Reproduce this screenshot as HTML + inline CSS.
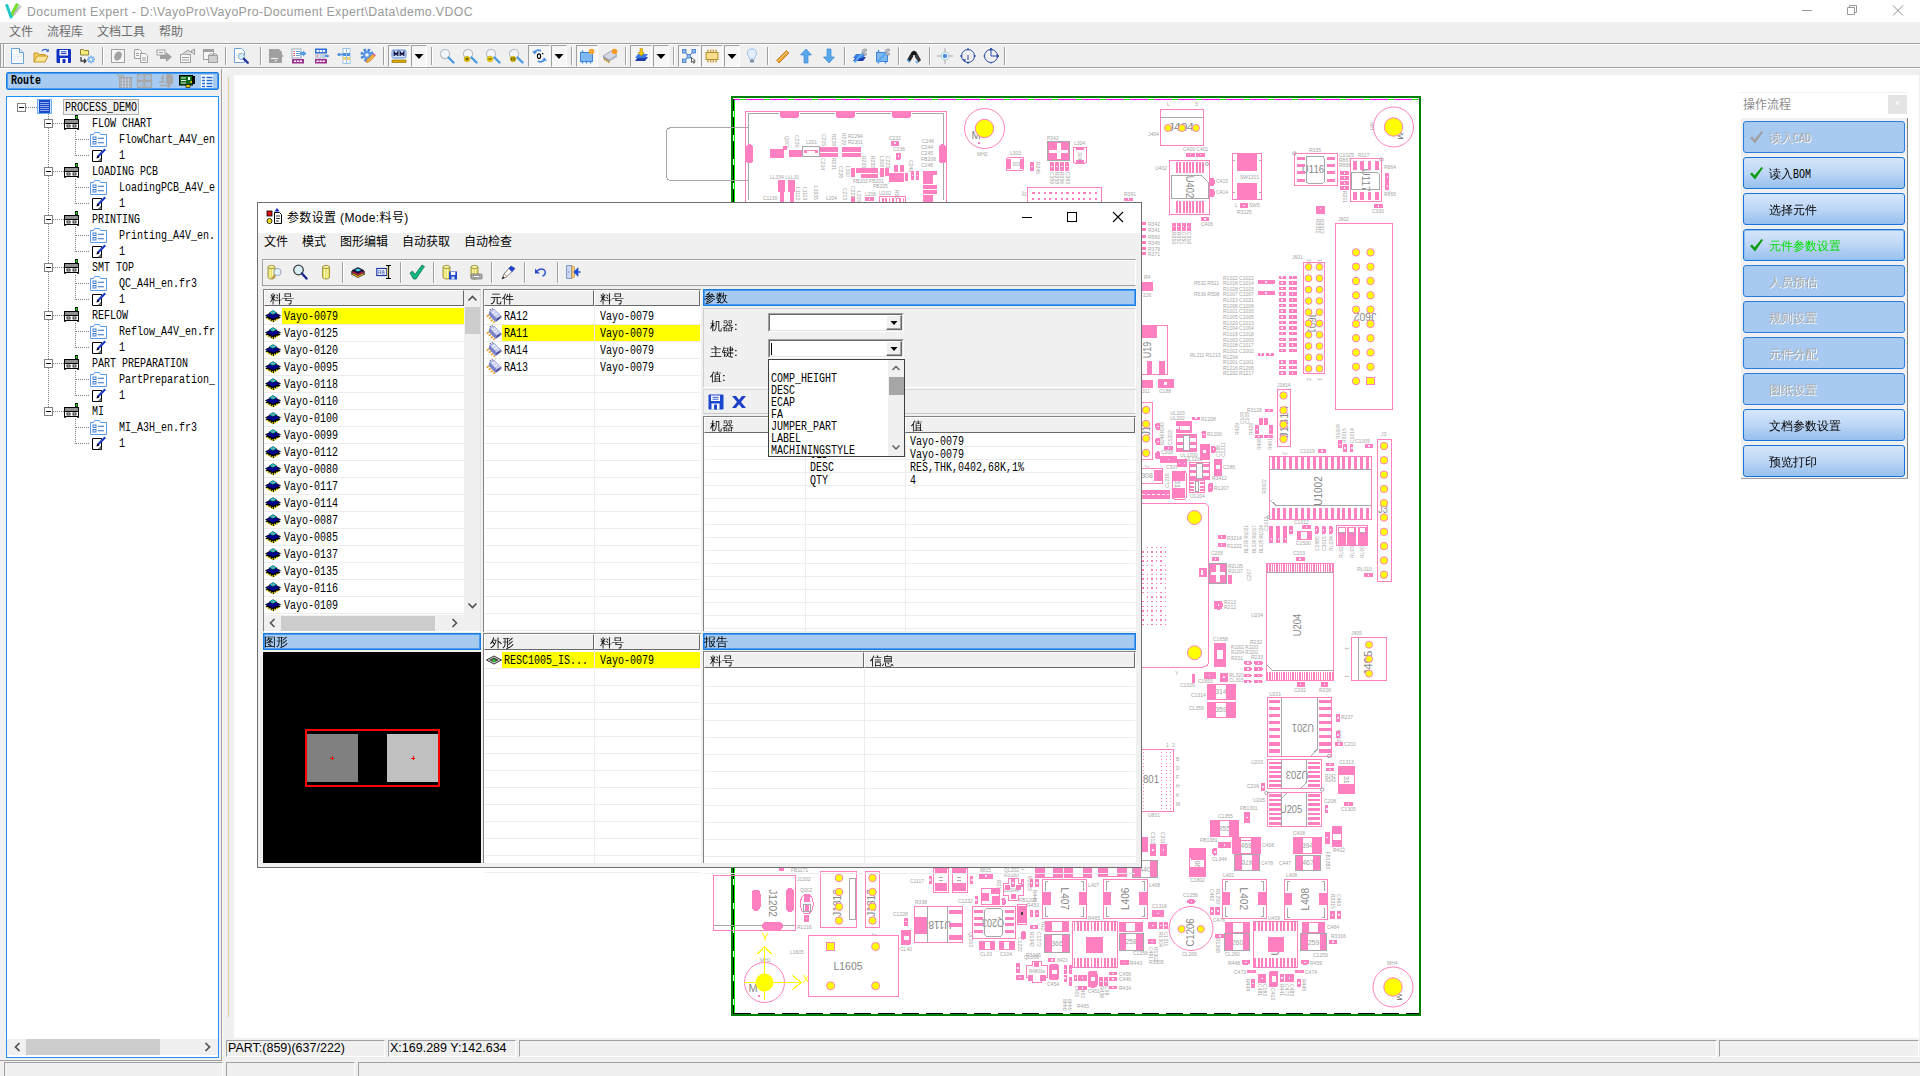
<!DOCTYPE html><html><head><meta charset="utf-8"><title>Document Expert</title><style>
*{margin:0;padding:0;box-sizing:border-box}
html,body{width:1920px;height:1076px;overflow:hidden;background:#fff}
body{position:relative;font-family:"Liberation Sans","Noto Sans CJK SC",sans-serif;font-size:12px;color:#000}
div,span,svg{position:absolute}
span{white-space:pre;display:block}
.ss{font-family:"Liberation Mono","WenQuanYi Zen Hei",monospace;font-size:12px;letter-spacing:0;line-height:14px;height:14px;transform:scaleX(.8333);transform-origin:0 0}
.cj{font-family:"WenQuanYi Zen Hei","Liberation Sans",sans-serif;font-size:12px;line-height:14px;height:14px;letter-spacing:0}
.ya{font-family:"Liberation Sans","Noto Sans CJK SC",sans-serif;font-size:12px;line-height:16px;height:16px}
.sg{font-family:"Liberation Sans",sans-serif;font-size:12px;line-height:16px;height:16px}
.hdr{background:#f0f0f0;border:1px solid;border-color:#fff #696969 #696969 #fff;box-shadow:0 0 0 0 #000}
.blue{background:#a6caf0;border:1px solid #1a7be0;box-shadow:inset 0 0 0 1px #4a9cf0}
.sunk{border:1px solid;border-color:#a0a0a0 #fff #fff #a0a0a0;background:#f0f0f0}
.btn{border:1px solid #1874d8;border-radius:3px;background:linear-gradient(#d6e6fa 0%,#c0d8f6 45%,#98c0ef 100%)}
.btnd{border:1px solid #2a7cdc;border-radius:3px;background:#a8caf0}
</style></head><body>
<div style="left:0px;top:0px;width:1920px;height:22px;background:#fff"></div>
<svg style="left:4px;top:2px" width="18" height="18" viewBox="0 0 18 18"><path d="M1 2.500L4 2l3 9 5-9.500 3 .5-7 14.500H6z" fill="#1ec8c8"/><path d="M7 11l5-9.500 3 .5-6.500 13z" fill="#7ee020"/><path d="M9 12L16 3.500l1 1L10.500 13z" fill="#c8c8c8" stroke="#909090" stroke-width=".5"/></svg>
<span class="sg" style="left:27px;top:4px;color:#999;font-size:12.300px;letter-spacing:.4px">Document Expert - D:\VayoPro\VayoPro-Document Expert\Data\demo.VDOC</span>
<svg style="left:1780px;top:0" width="140" height="22" viewBox="0 0 140 22"><path d="M22 10.500h10" stroke="#999" stroke-width="1"/><path d="M67.500 7.500h7v7h-7zM69.500 7.500v-2h7v7h-2" fill="none" stroke="#999" stroke-width="1"/><path d="M113 5.500l10 10M123 5.500l-10 10" stroke="#8a8a8a" stroke-width="1"/></svg>
<div style="left:0px;top:22px;width:1920px;height:21px;background:#f0f0f0"></div>
<span class="ya" style="left:9px;top:24px;color:#6d6d6d">文件</span>
<span class="ya" style="left:47px;top:24px;color:#6d6d6d">流程库</span>
<span class="ya" style="left:97px;top:24px;color:#6d6d6d">文档工具</span>
<span class="ya" style="left:159px;top:24px;color:#6d6d6d">帮助</span>
<div style="left:0px;top:43px;width:1920px;height:32px;background:#f0f0f0"></div>
<div style="left:0px;top:43px;width:1920px;height:1px;background:#a0a0a0"></div>
<div style="left:0px;top:44px;width:1920px;height:1px;background:#fff"></div>
<div style="left:0px;top:67px;width:1920px;height:1px;background:#a0a0a0"></div>
<div style="left:0px;top:68px;width:1920px;height:1px;background:#fff"></div>
<div style="left:3px;top:44px;width:1px;height:23px;background:#a0a0a0"></div>
<div style="left:4px;top:44px;width:1px;height:23px;background:#fff"></div>
<div style="left:0px;top:44px;width:1px;height:23px;background:#a0a0a0"></div>
<div style="left:102px;top:47px;width:1px;height:18px;background:#a0a0a0"></div>
<div style="left:103px;top:47px;width:1px;height:18px;background:#fff"></div>
<div style="left:225px;top:47px;width:1px;height:18px;background:#a0a0a0"></div>
<div style="left:226px;top:47px;width:1px;height:18px;background:#fff"></div>
<div style="left:260px;top:47px;width:1px;height:18px;background:#a0a0a0"></div>
<div style="left:261px;top:47px;width:1px;height:18px;background:#fff"></div>
<div style="left:383px;top:47px;width:1px;height:18px;background:#a0a0a0"></div>
<div style="left:384px;top:47px;width:1px;height:18px;background:#fff"></div>
<div style="left:431px;top:47px;width:1px;height:18px;background:#a0a0a0"></div>
<div style="left:432px;top:47px;width:1px;height:18px;background:#fff"></div>
<div style="left:571px;top:47px;width:1px;height:18px;background:#a0a0a0"></div>
<div style="left:572px;top:47px;width:1px;height:18px;background:#fff"></div>
<div style="left:625px;top:47px;width:1px;height:18px;background:#a0a0a0"></div>
<div style="left:626px;top:47px;width:1px;height:18px;background:#fff"></div>
<div style="left:673px;top:47px;width:1px;height:18px;background:#a0a0a0"></div>
<div style="left:674px;top:47px;width:1px;height:18px;background:#fff"></div>
<div style="left:767px;top:47px;width:1px;height:18px;background:#a0a0a0"></div>
<div style="left:768px;top:47px;width:1px;height:18px;background:#fff"></div>
<div style="left:844px;top:47px;width:1px;height:18px;background:#a0a0a0"></div>
<div style="left:845px;top:47px;width:1px;height:18px;background:#fff"></div>
<div style="left:898px;top:47px;width:1px;height:18px;background:#a0a0a0"></div>
<div style="left:899px;top:47px;width:1px;height:18px;background:#fff"></div>
<div style="left:929px;top:47px;width:1px;height:18px;background:#a0a0a0"></div>
<div style="left:930px;top:47px;width:1px;height:18px;background:#fff"></div>
<div style="left:1004px;top:47px;width:1px;height:18px;background:#a0a0a0"></div>
<div style="left:1005px;top:47px;width:1px;height:18px;background:#fff"></div>
<div style="left:388px;top:45px;width:22px;height:22px;background:#f6f6f6;border:1px solid;border-color:#a0a0a0 #fff #fff #a0a0a0"></div>
<div style="left:411px;top:45px;width:16px;height:22px;background:#f6f6f6;border:1px solid;border-color:#a0a0a0 #fff #fff #a0a0a0"></div>
<div style="left:528px;top:45px;width:22px;height:22px;background:#f6f6f6;border:1px solid;border-color:#a0a0a0 #fff #fff #a0a0a0"></div>
<div style="left:551px;top:45px;width:16px;height:22px;background:#f6f6f6;border:1px solid;border-color:#a0a0a0 #fff #fff #a0a0a0"></div>
<div style="left:576px;top:45px;width:22px;height:22px;background:#f6f6f6;border:1px solid;border-color:#a0a0a0 #fff #fff #a0a0a0"></div>
<div style="left:630px;top:45px;width:22px;height:22px;background:#f6f6f6;border:1px solid;border-color:#a0a0a0 #fff #fff #a0a0a0"></div>
<div style="left:653px;top:45px;width:16px;height:22px;background:#f6f6f6;border:1px solid;border-color:#a0a0a0 #fff #fff #a0a0a0"></div>
<div style="left:678px;top:45px;width:22px;height:22px;background:#f6f6f6;border:1px solid;border-color:#a0a0a0 #fff #fff #a0a0a0"></div>
<div style="left:701px;top:45px;width:22px;height:22px;background:#f6f6f6;border:1px solid;border-color:#a0a0a0 #fff #fff #a0a0a0"></div>
<div style="left:724px;top:45px;width:16px;height:22px;background:#f6f6f6;border:1px solid;border-color:#a0a0a0 #fff #fff #a0a0a0"></div>
<svg style="left:10px;top:48px" width="16" height="16" viewBox="0 0 16 16"><path d="M1.5 .5h8l4 4v11h-12z" fill="#fff" stroke="#6aa2dc"/><path d="M9.5 .5v4h4" fill="#dbe9f8" stroke="#6aa2dc"/><path d="M3 6.5h9M3 8.5h9M3 10.5h9M3 12.5h9" stroke="#e3ebf4"/></svg>
<svg style="left:33px;top:48px" width="16" height="16" viewBox="0 0 16 16"><path d="M1 14V5h4l1 1.5h6V9" fill="#f5d26a" stroke="#c8951e"/><path d="M1 14l3-6h11l-3 6z" fill="#fbe59a" stroke="#c8951e"/><path d="M9 3c2-2.5 5-2 6 0" fill="none" stroke="#2c62c8" stroke-width="1.3"/><path d="M15.8 .8v3h-3z" fill="#2c62c8"/></svg>
<svg style="left:56px;top:48px" width="16" height="16" viewBox="0 0 16 16"><rect x=".5" y="1" width="14.5" height="14" rx="1" fill="#0f32c4"/><rect x="3.5" y="2" width="8.5" height="5.5" fill="#fff"/><path d="M5 3.8h5.5M5 5.6h5.5" stroke="#0f32c4"/><rect x="4" y="10" width="8" height="5" fill="#fff"/><rect x="6.5" y="11" width="3" height="4" fill="#0f32c4"/></svg>
<svg style="left:79px;top:48px" width="16" height="16" viewBox="0 0 16 16"><path d="M1.5 7V1.5h3l1 1h4V7z" fill="#f6ec74" stroke="#8c8440"/><path d="M2 9v4h5M5 11l2 2-2 2" fill="none" stroke="#404040" stroke-width="1.3"/><g stroke="#5ea7f2" stroke-width="1.3" fill="none"><path d="M12 7.5v8M8 11.5h8M9.2 8.7l5.6 5.6M14.8 8.7l-5.6 5.6"/></g><circle cx="12" cy="11.5" r="1.5" fill="#f0f0f0"/></svg>
<svg style="left:110px;top:48px" width="16" height="16" viewBox="0 0 16 16"><rect x="1.5" y="1.5" width="13" height="13" fill="#f6f6f6" stroke="#a0a0a0"/><ellipse cx="8" cy="8" rx="3.5" ry="4.8" transform="rotate(30 8 8)" fill="#a0a0a0"/></svg>
<svg style="left:133px;top:48px" width="16" height="16" viewBox="0 0 16 16"><path d="M1.5 1.5h5l2 2v7h-7z" fill="#f6f6f6" stroke="#a0a0a0"/><path d="M7.5 5.5h5l2 2v7h-7z" fill="#f6f6f6" stroke="#a0a0a0"/><path d="M3 5.5h3M3 7.5h3M9 10h4M9 12h4" stroke="#a0a0a0"/></svg>
<svg style="left:156px;top:48px" width="16" height="16" viewBox="0 0 16 16"><rect x="1" y="2" width="8" height="5" fill="#f6f6f6" stroke="#a0a0a0"/><path d="M3 4.5h4" stroke="#a0a0a0"/><path d="M4 7h6V4l6 5-6 5v-3H4z" fill="#a0a0a0"/></svg>
<svg style="left:179px;top:48px" width="16" height="16" viewBox="0 0 16 16"><rect x="1.5" y="6.5" width="10" height="8" fill="#f6f6f6" stroke="#a0a0a0"/><path d="M3 9.5h7M3 12h7" stroke="#a0a0a0"/><path d="M2 7l7-5 4 3M12 3l3.5-2v6z" fill="#d8d8d8" stroke="#a0a0a0"/></svg>
<svg style="left:202px;top:48px" width="16" height="16" viewBox="0 0 16 16"><rect x="1.5" y="1.5" width="10" height="10" fill="#f6f6f6" stroke="#a0a0a0"/><rect x="1.5" y="1.5" width="10" height="2.5" fill="#a0a0a0"/><rect x="6.5" y="7.5" width="9" height="7" fill="#d0d0d0" stroke="#a0a0a0"/><path d="M7 7l2-1.5 2 1.5 2-1.5 2 1.5" fill="none" stroke="#a0a0a0"/></svg>
<svg style="left:233px;top:48px" width="16" height="16" viewBox="0 0 16 16"><path d="M1.5 .5h7l3 3v11h-10z" fill="#fff" stroke="#6aa2dc"/><path d="M3 5.5h6M3 7.5h4M3 9.5h3" stroke="#dbe6f2"/><circle cx="8.5" cy="8.5" r="3" fill="#d6f0fb" stroke="#8aa8c8"/><path d="M10.8 10.8l4 4" stroke="#1c2ea0" stroke-width="2.2" stroke-linecap="round"/></svg>
<svg style="left:268px;top:48px" width="16" height="16" viewBox="0 0 16 16"><path d="M1 1h10l3 3v3l2 1-2 1v6H1z" fill="#a0a0a0"/><path d="M3 10.5h7" stroke="#f0f0f0" stroke-width="1.2"/><rect x="7" y="12" width="1.5" height="1.5" fill="#f0f0f0"/></svg>
<svg style="left:291px;top:48px" width="16" height="16" viewBox="0 0 16 16"><rect x="1" y="1" width="9" height="9" fill="#fff" stroke="#9ab"/><path d="M2.5 3.5h1.5M2.5 5.5h1.5M2.5 7.5h1.5" stroke="#e04040"/><path d="M5 3.5h4M5 5.5h4M5 7.5h4" stroke="#6aa2dc"/><path d="M9 4h3V2.5l3.5 3-3.5 3V7H9z" fill="#5a9ae0"/><rect x="1" y="11" width="12" height="4.5" fill="#a03090"/><path d="M3 13.2h8" stroke="#fff" stroke-width="1.6" stroke-dasharray="2.2 .8"/></svg>
<svg style="left:314px;top:48px" width="16" height="16" viewBox="0 0 16 16"><rect x="1" y=".5" width="12" height="5" fill="#2f6fd8"/><path d="M2.5 3h9" stroke="#fff" stroke-width="2" stroke-dasharray="2.4 .7"/><rect x="2" y="6" width="9" height="4" fill="#fff" stroke="#9ab"/><path d="M3 8h1.5" stroke="#e04040"/><path d="M5.5 8h5" stroke="#6aa2dc"/><path d="M11 7h2V6l2.5 2-2.5 2V9h-2z" fill="#5a9ae0"/><rect x="1" y="11" width="12" height="4.5" fill="#a03090"/><path d="M2.5 13.2h9" stroke="#fff" stroke-width="1.6" stroke-dasharray="2.2 .8"/></svg>
<svg style="left:337px;top:48px" width="16" height="16" viewBox="0 0 16 16"><rect x="6" y=".5" width="7" height="15" fill="#fff" stroke="#9cc4ec"/><rect x="6" y="5" width="7" height="3" fill="#4a8fe0"/><rect x="6" y="9" width="7" height="3" fill="#f6d26a"/><path d="M9.5 .5v15" stroke="#9cc4ec"/><path d="M3 6.5h3" stroke="#4a8fe0" stroke-width="1.6"/><circle cx="2" cy="6.5" r="1.6" fill="#4a8fe0"/></svg>
<svg style="left:360px;top:48px" width="16" height="16" viewBox="0 0 16 16"><circle cx="7" cy="7" r="5" fill="none" stroke="#4a86d8" stroke-width="3.2" stroke-dasharray="2.4 1.53"/><circle cx="7" cy="7" r="4.2" fill="#5b97e6"/><circle cx="7" cy="7" r="1.8" fill="#f0f0f0"/><path d="M6 14.5l1-3 6.5-5.5 1.8 1.8-6 6z" fill="#f5b041" stroke="#c07818" stroke-width=".7"/><path d="M13.3 5.8l1.8 1.8" stroke="#e050a0" stroke-width="1.4"/></svg>
<svg style="left:391px;top:48px" width="16" height="16" viewBox="0 0 16 16"><rect x="1" y="2" width="14" height="8" rx="1.5" fill="#cfe1fb" stroke="#5b8fd8"/><rect x="1" y="12" width="14" height="2.5" fill="#d8a800" stroke="#8a6a00" stroke-width=".6"/><path d="M3.2 8V4l1.8 2.6L6.8 4v4M9.2 8V4l1.8 2.6L12.8 4v4" fill="none" stroke="#101040" stroke-width="1.25"/></svg>
<svg style="left:411px;top:48px" width="16" height="16" viewBox="0 0 16 16"><path d="M3.500 6h9L8 11z" fill="#000"/></svg>
<svg style="left:439px;top:48px" width="16" height="16" viewBox="0 0 16 16"><circle cx="6" cy="6" r="4.6" fill="#f4f7fa" stroke="#b8c0c8" stroke-width="1.2"/><path d="M9.5 9.5l5 5" stroke="#4a9be0" stroke-width="2.4" stroke-linecap="round"/></svg>
<svg style="left:462px;top:48px" width="16" height="16" viewBox="0 0 16 16"><circle cx="6" cy="6" r="4.6" fill="#f4f7fa" stroke="#b8c0c8" stroke-width="1.2"/><path d="M9.5 9.5l5 5" stroke="#4a9be0" stroke-width="2.4" stroke-linecap="round"/><circle cx="5" cy="11" r="2.8" fill="#f6d400" stroke="#b89a00" stroke-width=".6"/><path d="M3.4 11h3.2M5 9.4v3.2" stroke="#404000" stroke-width="1"/></svg>
<svg style="left:485px;top:48px" width="16" height="16" viewBox="0 0 16 16"><circle cx="6" cy="6" r="4.6" fill="#f4f7fa" stroke="#b8c0c8" stroke-width="1.2"/><path d="M9.5 9.5l5 5" stroke="#4a9be0" stroke-width="2.4" stroke-linecap="round"/><circle cx="5" cy="11" r="2.8" fill="#f6d400" stroke="#b89a00" stroke-width=".6"/><path d="M3.4 11h3.2" stroke="#404000" stroke-width="1"/></svg>
<svg style="left:508px;top:48px" width="16" height="16" viewBox="0 0 16 16"><circle cx="6" cy="6" r="4.6" fill="#f4f7fa" stroke="#b8c0c8" stroke-width="1.2"/><path d="M9.5 9.5l5 5" stroke="#4a9be0" stroke-width="2.4" stroke-linecap="round"/><circle cx="5" cy="11" r="2.8" fill="#f6d400" stroke="#b89a00" stroke-width=".6"/><rect x="3.6" y="10" width="2.8" height="2" fill="none" stroke="#404000" stroke-width=".8"/></svg>
<svg style="left:531px;top:48px" width="16" height="16" viewBox="0 0 16 16"><path d="M3 5C4 2 8 1.5 10 3" fill="none" stroke="#4a8fe0" stroke-width="1.8"/><path d="M1 3l2.5 3.5L6 4z" fill="#4a8fe0"/><path d="M14 11c-1 3-5 3.5-7 2" fill="none" stroke="#4a8fe0" stroke-width="1.8"/><path d="M16 13l-2.5-3.5L11 12z" fill="#4a8fe0"/><ellipse cx="8" cy="8.2" rx="1.6" ry="2.3" fill="none" stroke="#000" stroke-width="1.1"/><rect x="11" y="5" width="1.3" height="1.3" fill="#000"/></svg>
<svg style="left:551px;top:48px" width="16" height="16" viewBox="0 0 16 16"><path d="M3.500 6h9L8 11z" fill="#000"/></svg>
<svg style="left:579px;top:48px" width="16" height="16" viewBox="0 0 16 16"><rect x="1.5" y="4.5" width="12" height="9" fill="#7db8f0" stroke="#3d86d8"/><path d="M3.5 4V2.5M3.5 15.5v-2M7.5 15.5v-2M11.5 15.5v-2" stroke="#3d86d8" stroke-width="1.4"/><circle cx="12.5" cy="3.5" r="2.8" fill="#f79a20"/><path d="M10 3.5h5M12.5 1v5" stroke="#f7b560" stroke-width=".8"/></svg>
<svg style="left:602px;top:48px" width="16" height="16" viewBox="0 0 16 16"><path d="M1 8l8-5 6 4-8 5z" fill="#d4d8e4" stroke="#8890a8" stroke-width=".7"/><path d="M1 8v2l6 4v-2z" fill="#9098b0"/><path d="M7 12v2l8-5V7z" fill="#b0b8c8"/><path d="M2 11l1.5 1M4 12.3l1.5 1M6 13.6l1.5 1" stroke="#c89020" stroke-width="1.6"/><circle cx="12.5" cy="3.5" r="2.8" fill="#f79a20"/></svg>
<svg style="left:633px;top:48px" width="16" height="16" viewBox="0 0 16 16"><path d="M2 13l3-4h10l-3 4z" fill="#1c3eb0"/><path d="M2 10l3-4h10l-3 4z" fill="#3e7ae0"/><path d="M7 .5h2.5v4h2L8.2 8 5 4.5h2z" fill="#f5c400" stroke="#a88400" stroke-width=".5"/></svg>
<svg style="left:653px;top:48px" width="16" height="16" viewBox="0 0 16 16"><path d="M3.500 6h9L8 11z" fill="#000"/></svg>
<svg style="left:681px;top:48px" width="16" height="16" viewBox="0 0 16 16"><g fill="#8ab8ec" stroke="#3d78c8" stroke-width=".8"><rect x="1.5" y="1.5" width="3.5" height="3.5"/><rect x="11" y="1.5" width="3.5" height="3.5"/><rect x="6" y="6.5" width="3.5" height="3.5"/><rect x="1.5" y="11" width="3.5" height="3.5"/></g><path d="M5 5l1.5 1.5M11 5L9.5 6.5M6 10L5 11" stroke="#3d78c8"/><path d="M10.5 9.5v5l1.2-1.2 1 2 .9-.5-1-1.9h1.7z" fill="#fff" stroke="#000" stroke-width=".6"/></svg>
<svg style="left:704px;top:48px" width="16" height="16" viewBox="0 0 16 16"><rect x="2" y="4.5" width="12" height="7" fill="#f7dc8a" stroke="#b8902c"/><path d="M4 4V1.5M6.7 4V1.5M9.3 4V1.5M12 4V1.5M4 14.5V12M6.7 14.5V12M9.3 14.5V12M12 14.5V12" stroke="#b8902c" stroke-width="1.2"/></svg>
<svg style="left:724px;top:48px" width="16" height="16" viewBox="0 0 16 16"><path d="M3.500 6h9L8 11z" fill="#000"/></svg>
<svg style="left:744px;top:48px" width="16" height="16" viewBox="0 0 16 16"><path d="M8 .8c3 0 4.6 2.2 4.6 4.4 0 2.4-2 3.4-2.2 5.8H5.6C5.400 8.600 3.400 7.600 3.400 5.200 3.400 3 5 .8 8 .8z" fill="#e4f1fc" stroke="#8cbcec" stroke-width=".9"/><rect x="6" y="11.500" width="4" height="3" rx=".8" fill="#8090a0"/></svg>
<svg style="left:775px;top:48px" width="16" height="16" viewBox="0 0 16 16"><path d="M1.5 12.5l10-10 2.500 2.500-10 10z" fill="#f0a030" stroke="#b87010" stroke-width=".8"/><path d="M2.500 13.500l10-10" stroke="#fbd080" stroke-width="1"/></svg>
<svg style="left:798px;top:48px" width="16" height="16" viewBox="0 0 16 16"><path d="M8 1l5.500 6h-3.500v8H6V7H2.500z" fill="#58a8ee" stroke="#3a86d0" stroke-width=".7"/></svg>
<svg style="left:821px;top:48px" width="16" height="16" viewBox="0 0 16 16"><path d="M8 15l5.500-6h-3.500V1H6v8H2.500z" fill="#58a8ee" stroke="#3a86d0" stroke-width=".7"/></svg>
<svg style="left:852px;top:48px" width="16" height="16" viewBox="0 0 16 16"><path d="M1 13l3-4h10l-3 4z" fill="#1c3eb0"/><path d="M1 10l3-4h10l-3 4z" fill="#3e7ae0"/><path d="M3 13.500l8.500-9" stroke="#5aa8f0" stroke-width="2.400" stroke-linecap="round"/><path d="M10 2.500l1.500-1.500h3v2h-1.500v2l1.500.5v1.500h-3z" fill="#b8bcc4" stroke="#80848c" stroke-width=".5"/></svg>
<svg style="left:875px;top:48px" width="16" height="16" viewBox="0 0 16 16"><rect x="1.500" y="4.500" width="11" height="9" fill="#7db8f0" stroke="#3d86d8"/><path d="M3.500 4V2M3.500 15.500v-2M10.500 15.500v-2" stroke="#3d86d8" stroke-width="1.400"/><path d="M3 13.500l8.500-9" stroke="#5aa8f0" stroke-width="2.400" stroke-linecap="round"/><path d="M10 2.500l1.500-1.500h3v2h-1.500v2l1.500.5v1.500h-3z" fill="#b8bcc4" stroke="#80848c" stroke-width=".5"/></svg>
<svg style="left:906px;top:48px" width="16" height="16" viewBox="0 0 16 16"><path d="M3.500 14.500L1 12l4.500-8L8 3l-1 6z" fill="#282828"/><path d="M12.500 14.500L15 12l-4.500-8L8 3l1 6z" fill="#383838"/><path d="M6 4l2-1.500L10 4v3H6z" fill="#181818"/><path d="M1.300 11.800l2.500 2.500" stroke="#58a8ee" stroke-width="1.600"/><path d="M9.500 13.500l2.500 1.300" stroke="#58a8ee" stroke-width="1.600"/></svg>
<svg style="left:937px;top:48px" width="16" height="16" viewBox="0 0 16 16"><circle cx="8" cy="8" r="4" fill="#fff" stroke="#b0c8e8" stroke-width="1"/><circle cx="8" cy="8" r="2.300" fill="#4a8fe0"/><path d="M8 0v4M8 12v4M0 8h4M12 8h4" stroke="#a8a8a8" stroke-width="1"/></svg>
<svg style="left:960px;top:48px" width="16" height="16" viewBox="0 0 16 16"><circle cx="8" cy="8" r="6.500" fill="none" stroke="#2848a8" stroke-width="1"/><path d="M8 0v2.500M8 13.500v2.500M0 8h2.500M13.500 8h2.500" stroke="#2848a8"/><path d="M8 7v5M3 11l2 2M5 11v2.500" stroke="#2848a8" stroke-width="1"/></svg>
<svg style="left:983px;top:48px" width="16" height="16" viewBox="0 0 16 16"><circle cx="8" cy="8" r="6.500" fill="none" stroke="#2848a8" stroke-width="1"/><path d="M8 0v8h8" fill="none" stroke="#2848a8"/><path d="M6.500 2L8 0l1.500 2zM14 6.500L16 8l-2 1.500zM8 14v2M0 8h2" fill="#2848a8" stroke="#2848a8" stroke-width=".6"/></svg>
<div style="left:0px;top:69px;width:1920px;height:969px;background:#f0f0f0"></div>
<div style="left:234px;top:75px;width:1685px;height:963px;background:#fff"></div>
<div style="left:221px;top:69px;width:1px;height:992px;background:#a0a0a0;z-index:3"></div>
<div style="left:222px;top:69px;width:1px;height:992px;background:#f8f8f8;z-index:3"></div>
<div style="left:227px;top:76px;width:3px;height:942px;background:#e4ecf6"></div>
<div style="left:228px;top:77px;width:1px;height:940px;background:#e6d28c"></div>
<div class="blue" style="left:6px;top:72px;width:213px;height:18px;border-radius:2px"></div>
<span class="ss" style="left:11px;top:74px;font-weight:bold">Route</span>
<svg style="left:116px;top:73px" width="102" height="16" viewBox="0 0 102 16"><path d="M3 4h13v11H3z" fill="#a8a8a8"/><path d="M4 7h11M4 10h11M4 13h11M6.500 5v10M9.500 5v10M12.500 5v10" stroke="#c4d6ee" stroke-width=".7"/><path d="M1 1l3 3M4 1l2 3M8 2l-2 2" stroke="#a8a8a8" stroke-width="1.200" fill="none"/><g fill="none" stroke="#a8a8a8" stroke-width="1.200"><rect x="21.500" y="1.500" width="6.500" height="6"/><rect x="29" y="1.500" width="6.500" height="6"/><rect x="21.500" y="8.500" width="6.500" height="6"/><rect x="29" y="8.500" width="6.500" height="6"/><path d="M22 2l6 5.500M28 2l-6 5.500M29.500 2l6 5.500M35.500 2l-6 5.500M22 9l6 5.500M28 9l-6 5.500M29.500 9l6 5.500M35.500 9l-6 5.500" stroke-width=".7"/></g><path d="M50 1h5l2 2v8h-7z" fill="#a8a8a8"/><path d="M46.500 8V3.500q0-1.500 1.500-1.500M44.500 5h4M43 9h6" stroke="#a8a8a8" stroke-width="1.300" fill="none"/><path d="M44 12.500h10M51.500 10l3 2.500-3 2.500" stroke="#a8a8a8" stroke-width="1.300" fill="none"/><rect x="63.500" y="2.500" width="13" height="9.500" fill="#0a6a18" stroke="#000" stroke-width="1"/><path d="M65 5h5M65 7.500h5M65 10h5" stroke="#e8f0e0" stroke-width="1.200"/><rect x="72" y="4" width="2" height="3" fill="#fff"/><rect x="70" y="11.500" width="4" height="3" fill="#e8d000" stroke="#000" stroke-width=".6"/><rect x="76.500" y="3" width="2.500" height="8" fill="#000"/><rect x="74.500" y="8" width="1.500" height="2" fill="#e8d000"/><rect x="85" y="2" width="12" height="13" fill="#fff"/><path d="M86 4.500h3M90.500 4.500h6M86 7.500h3M90.500 7.500h6M86 10.500h3M90.500 10.500h6M86 13.500h3M90.500 13.500h6" stroke="#1c6ad8" stroke-width="1.300"/></svg>
<div style="left:6px;top:96px;width:213px;height:962px;background:#fff;border:1px solid #1e90ff"></div>
<div style="left:48px;top:114px;width:1px;height:298px;background:repeating-linear-gradient(to bottom,#808080 0 1px,transparent 1px 2px)"></div>
<div style="left:26px;top:107px;width:11px;height:1px;background:repeating-linear-gradient(to right,#808080 0 1px,transparent 1px 2px)"></div>
<div style="left:17px;top:103px;width:9px;height:9px;background:#fff;border:1px solid #808080"></div>
<div style="left:19px;top:107px;width:5px;height:1px;background:#000"></div>
<div style="left:37px;top:99px;width:15px;height:15px;background:#cfe4fb;border:1px solid #6ab0f5"></div>
<svg style="left:39px;top:100px" width="11" height="13" viewBox="0 0 11 13"><rect width="11" height="13" fill="#1c48c8"/><path d="M1 2.500h9M1 4.500h9M1 6.500h9M1 8.500h9M1 10.500h9" stroke="#a8c4f4" stroke-width=".8"/></svg>
<div style="left:63px;top:99px;width:76px;height:16px;background:#f0f0f0;border:1px solid #b0b0b0"></div>
<span class="ss" style="left:65px;top:101px;">PROCESS_DEMO</span>
<div style="left:44px;top:119px;width:9px;height:9px;background:#fff;border:1px solid #808080"></div>
<div style="left:46px;top:123px;width:5px;height:1px;background:#000"></div>
<div style="left:53px;top:123px;width:11px;height:1px;background:repeating-linear-gradient(to right,#808080 0 1px,transparent 1px 2px)"></div>
<svg style="left:64px;top:115px" width="15" height="15" viewBox="0 0 15 15"><rect x="11" y="0" width="3" height="5" fill="#000"/><rect x="11.800" y="1" width="1.600" height="2.600" fill="#20e020"/><rect x=".5" y="4.500" width="14" height="4" fill="#909090" stroke="#000"/><rect x=".5" y="8.500" width="14" height="5" fill="#fff" stroke="#000"/><path d="M1 13.500v1.500M14 13.500v1.500" stroke="#000" stroke-width="1.400"/><rect x="3" y="10" width="3" height="2" fill="none" stroke="#000" stroke-width=".8"/><rect x="9" y="10" width="3" height="2" fill="none" stroke="#000" stroke-width=".8"/></svg>
<span class="ss" style="left:92px;top:117px;">FLOW CHART</span>
<div style="left:75px;top:131px;width:1px;height:25px;background:repeating-linear-gradient(to bottom,#808080 0 1px,transparent 1px 2px)"></div>
<div style="left:76px;top:139px;width:14px;height:1px;background:repeating-linear-gradient(to right,#808080 0 1px,transparent 1px 2px)"></div>
<div style="left:76px;top:155px;width:14px;height:1px;background:repeating-linear-gradient(to right,#808080 0 1px,transparent 1px 2px)"></div>
<svg style="left:90px;top:132px" width="17" height="15" viewBox="0 0 17 15"><path d="M.5 2.500h3l1-2h5l1 2h6v12H.5z" fill="#fff" stroke="#5a9ae8" stroke-width="1"/><rect x="3" y="5" width="3" height="2.500" fill="none" stroke="#2c6cd0" stroke-width=".9"/><rect x="3" y="9.500" width="3" height="2.500" fill="none" stroke="#2c6cd0" stroke-width=".9"/><path d="M8 6.200h6M8 10.700h6" stroke="#2c6cd0" stroke-width="1.100"/></svg>
<span class="ss" style="left:119px;top:133px;width:116.400px;overflow:hidden">FlowChart_A4V_en</span>
<svg style="left:91px;top:147px" width="16" height="16" viewBox="0 0 16 16"><path d="M1.500 3.500h9v11h-9z" fill="#fff" stroke="#000" stroke-width="1"/><path d="M7 14.500l3.500-3.500v3.500z" fill="#909090" stroke="#000" stroke-width=".6"/><path d="M5.500 11.500l1-3 7-7 1.500 1.500-7 7z" fill="#1838c0"/><path d="M5.500 11.500l1-3 2 2z" fill="#000"/></svg>
<span class="ss" style="left:119px;top:149px;">1</span>
<div style="left:44px;top:167px;width:9px;height:9px;background:#fff;border:1px solid #808080"></div>
<div style="left:46px;top:171px;width:5px;height:1px;background:#000"></div>
<div style="left:53px;top:171px;width:11px;height:1px;background:repeating-linear-gradient(to right,#808080 0 1px,transparent 1px 2px)"></div>
<svg style="left:64px;top:163px" width="15" height="15" viewBox="0 0 15 15"><rect x="11" y="0" width="3" height="5" fill="#000"/><rect x="11.800" y="1" width="1.600" height="2.600" fill="#20e020"/><rect x=".5" y="4.500" width="14" height="4" fill="#909090" stroke="#000"/><rect x=".5" y="8.500" width="14" height="5" fill="#fff" stroke="#000"/><path d="M1 13.500v1.500M14 13.500v1.500" stroke="#000" stroke-width="1.400"/><rect x="3" y="10" width="3" height="2" fill="none" stroke="#000" stroke-width=".8"/><rect x="9" y="10" width="3" height="2" fill="none" stroke="#000" stroke-width=".8"/></svg>
<span class="ss" style="left:92px;top:165px;">LOADING PCB</span>
<div style="left:75px;top:179px;width:1px;height:25px;background:repeating-linear-gradient(to bottom,#808080 0 1px,transparent 1px 2px)"></div>
<div style="left:76px;top:187px;width:14px;height:1px;background:repeating-linear-gradient(to right,#808080 0 1px,transparent 1px 2px)"></div>
<div style="left:76px;top:203px;width:14px;height:1px;background:repeating-linear-gradient(to right,#808080 0 1px,transparent 1px 2px)"></div>
<svg style="left:90px;top:180px" width="17" height="15" viewBox="0 0 17 15"><path d="M.5 2.500h3l1-2h5l1 2h6v12H.5z" fill="#fff" stroke="#5a9ae8" stroke-width="1"/><rect x="3" y="5" width="3" height="2.500" fill="none" stroke="#2c6cd0" stroke-width=".9"/><rect x="3" y="9.500" width="3" height="2.500" fill="none" stroke="#2c6cd0" stroke-width=".9"/><path d="M8 6.200h6M8 10.700h6" stroke="#2c6cd0" stroke-width="1.100"/></svg>
<span class="ss" style="left:119px;top:181px;width:116.400px;overflow:hidden">LoadingPCB_A4V_e:</span>
<svg style="left:91px;top:195px" width="16" height="16" viewBox="0 0 16 16"><path d="M1.500 3.500h9v11h-9z" fill="#fff" stroke="#000" stroke-width="1"/><path d="M7 14.500l3.500-3.500v3.500z" fill="#909090" stroke="#000" stroke-width=".6"/><path d="M5.500 11.500l1-3 7-7 1.500 1.500-7 7z" fill="#1838c0"/><path d="M5.500 11.500l1-3 2 2z" fill="#000"/></svg>
<span class="ss" style="left:119px;top:197px;">1</span>
<div style="left:44px;top:215px;width:9px;height:9px;background:#fff;border:1px solid #808080"></div>
<div style="left:46px;top:219px;width:5px;height:1px;background:#000"></div>
<div style="left:53px;top:219px;width:11px;height:1px;background:repeating-linear-gradient(to right,#808080 0 1px,transparent 1px 2px)"></div>
<svg style="left:64px;top:211px" width="15" height="15" viewBox="0 0 15 15"><rect x="11" y="0" width="3" height="5" fill="#000"/><rect x="11.800" y="1" width="1.600" height="2.600" fill="#20e020"/><rect x=".5" y="4.500" width="14" height="4" fill="#909090" stroke="#000"/><rect x=".5" y="8.500" width="14" height="5" fill="#fff" stroke="#000"/><path d="M1 13.500v1.500M14 13.500v1.500" stroke="#000" stroke-width="1.400"/><rect x="3" y="10" width="3" height="2" fill="none" stroke="#000" stroke-width=".8"/><rect x="9" y="10" width="3" height="2" fill="none" stroke="#000" stroke-width=".8"/></svg>
<span class="ss" style="left:92px;top:213px;">PRINTING</span>
<div style="left:75px;top:227px;width:1px;height:25px;background:repeating-linear-gradient(to bottom,#808080 0 1px,transparent 1px 2px)"></div>
<div style="left:76px;top:235px;width:14px;height:1px;background:repeating-linear-gradient(to right,#808080 0 1px,transparent 1px 2px)"></div>
<div style="left:76px;top:251px;width:14px;height:1px;background:repeating-linear-gradient(to right,#808080 0 1px,transparent 1px 2px)"></div>
<svg style="left:90px;top:228px" width="17" height="15" viewBox="0 0 17 15"><path d="M.5 2.500h3l1-2h5l1 2h6v12H.5z" fill="#fff" stroke="#5a9ae8" stroke-width="1"/><rect x="3" y="5" width="3" height="2.500" fill="none" stroke="#2c6cd0" stroke-width=".9"/><rect x="3" y="9.500" width="3" height="2.500" fill="none" stroke="#2c6cd0" stroke-width=".9"/><path d="M8 6.200h6M8 10.700h6" stroke="#2c6cd0" stroke-width="1.100"/></svg>
<span class="ss" style="left:119px;top:229px;width:116.400px;overflow:hidden">Printing_A4V_en.</span>
<svg style="left:91px;top:243px" width="16" height="16" viewBox="0 0 16 16"><path d="M1.500 3.500h9v11h-9z" fill="#fff" stroke="#000" stroke-width="1"/><path d="M7 14.500l3.500-3.500v3.500z" fill="#909090" stroke="#000" stroke-width=".6"/><path d="M5.500 11.500l1-3 7-7 1.500 1.500-7 7z" fill="#1838c0"/><path d="M5.500 11.500l1-3 2 2z" fill="#000"/></svg>
<span class="ss" style="left:119px;top:245px;">1</span>
<div style="left:44px;top:263px;width:9px;height:9px;background:#fff;border:1px solid #808080"></div>
<div style="left:46px;top:267px;width:5px;height:1px;background:#000"></div>
<div style="left:53px;top:267px;width:11px;height:1px;background:repeating-linear-gradient(to right,#808080 0 1px,transparent 1px 2px)"></div>
<svg style="left:64px;top:259px" width="15" height="15" viewBox="0 0 15 15"><rect x="11" y="0" width="3" height="5" fill="#000"/><rect x="11.800" y="1" width="1.600" height="2.600" fill="#20e020"/><rect x=".5" y="4.500" width="14" height="4" fill="#909090" stroke="#000"/><rect x=".5" y="8.500" width="14" height="5" fill="#fff" stroke="#000"/><path d="M1 13.500v1.500M14 13.500v1.500" stroke="#000" stroke-width="1.400"/><rect x="3" y="10" width="3" height="2" fill="none" stroke="#000" stroke-width=".8"/><rect x="9" y="10" width="3" height="2" fill="none" stroke="#000" stroke-width=".8"/></svg>
<span class="ss" style="left:92px;top:261px;">SMT TOP</span>
<div style="left:75px;top:275px;width:1px;height:25px;background:repeating-linear-gradient(to bottom,#808080 0 1px,transparent 1px 2px)"></div>
<div style="left:76px;top:283px;width:14px;height:1px;background:repeating-linear-gradient(to right,#808080 0 1px,transparent 1px 2px)"></div>
<div style="left:76px;top:299px;width:14px;height:1px;background:repeating-linear-gradient(to right,#808080 0 1px,transparent 1px 2px)"></div>
<svg style="left:90px;top:276px" width="17" height="15" viewBox="0 0 17 15"><path d="M.5 2.500h3l1-2h5l1 2h6v12H.5z" fill="#fff" stroke="#5a9ae8" stroke-width="1"/><rect x="3" y="5" width="3" height="2.500" fill="none" stroke="#2c6cd0" stroke-width=".9"/><rect x="3" y="9.500" width="3" height="2.500" fill="none" stroke="#2c6cd0" stroke-width=".9"/><path d="M8 6.200h6M8 10.700h6" stroke="#2c6cd0" stroke-width="1.100"/></svg>
<span class="ss" style="left:119px;top:277px;width:116.400px;overflow:hidden">QC_A4H_en.fr3</span>
<svg style="left:91px;top:291px" width="16" height="16" viewBox="0 0 16 16"><path d="M1.500 3.500h9v11h-9z" fill="#fff" stroke="#000" stroke-width="1"/><path d="M7 14.500l3.500-3.500v3.500z" fill="#909090" stroke="#000" stroke-width=".6"/><path d="M5.500 11.500l1-3 7-7 1.500 1.500-7 7z" fill="#1838c0"/><path d="M5.500 11.500l1-3 2 2z" fill="#000"/></svg>
<span class="ss" style="left:119px;top:293px;">1</span>
<div style="left:44px;top:311px;width:9px;height:9px;background:#fff;border:1px solid #808080"></div>
<div style="left:46px;top:315px;width:5px;height:1px;background:#000"></div>
<div style="left:53px;top:315px;width:11px;height:1px;background:repeating-linear-gradient(to right,#808080 0 1px,transparent 1px 2px)"></div>
<svg style="left:64px;top:307px" width="15" height="15" viewBox="0 0 15 15"><rect x="11" y="0" width="3" height="5" fill="#000"/><rect x="11.800" y="1" width="1.600" height="2.600" fill="#20e020"/><rect x=".5" y="4.500" width="14" height="4" fill="#909090" stroke="#000"/><rect x=".5" y="8.500" width="14" height="5" fill="#fff" stroke="#000"/><path d="M1 13.500v1.500M14 13.500v1.500" stroke="#000" stroke-width="1.400"/><rect x="3" y="10" width="3" height="2" fill="none" stroke="#000" stroke-width=".8"/><rect x="9" y="10" width="3" height="2" fill="none" stroke="#000" stroke-width=".8"/></svg>
<span class="ss" style="left:92px;top:309px;">REFLOW</span>
<div style="left:75px;top:323px;width:1px;height:25px;background:repeating-linear-gradient(to bottom,#808080 0 1px,transparent 1px 2px)"></div>
<div style="left:76px;top:331px;width:14px;height:1px;background:repeating-linear-gradient(to right,#808080 0 1px,transparent 1px 2px)"></div>
<div style="left:76px;top:347px;width:14px;height:1px;background:repeating-linear-gradient(to right,#808080 0 1px,transparent 1px 2px)"></div>
<svg style="left:90px;top:324px" width="17" height="15" viewBox="0 0 17 15"><path d="M.5 2.500h3l1-2h5l1 2h6v12H.5z" fill="#fff" stroke="#5a9ae8" stroke-width="1"/><rect x="3" y="5" width="3" height="2.500" fill="none" stroke="#2c6cd0" stroke-width=".9"/><rect x="3" y="9.500" width="3" height="2.500" fill="none" stroke="#2c6cd0" stroke-width=".9"/><path d="M8 6.200h6M8 10.700h6" stroke="#2c6cd0" stroke-width="1.100"/></svg>
<span class="ss" style="left:119px;top:325px;width:116.400px;overflow:hidden">Reflow_A4V_en.fr:</span>
<svg style="left:91px;top:339px" width="16" height="16" viewBox="0 0 16 16"><path d="M1.500 3.500h9v11h-9z" fill="#fff" stroke="#000" stroke-width="1"/><path d="M7 14.500l3.500-3.500v3.500z" fill="#909090" stroke="#000" stroke-width=".6"/><path d="M5.500 11.500l1-3 7-7 1.500 1.500-7 7z" fill="#1838c0"/><path d="M5.500 11.500l1-3 2 2z" fill="#000"/></svg>
<span class="ss" style="left:119px;top:341px;">1</span>
<div style="left:44px;top:359px;width:9px;height:9px;background:#fff;border:1px solid #808080"></div>
<div style="left:46px;top:363px;width:5px;height:1px;background:#000"></div>
<div style="left:53px;top:363px;width:11px;height:1px;background:repeating-linear-gradient(to right,#808080 0 1px,transparent 1px 2px)"></div>
<svg style="left:64px;top:355px" width="15" height="15" viewBox="0 0 15 15"><rect x="11" y="0" width="3" height="5" fill="#000"/><rect x="11.800" y="1" width="1.600" height="2.600" fill="#20e020"/><rect x=".5" y="4.500" width="14" height="4" fill="#909090" stroke="#000"/><rect x=".5" y="8.500" width="14" height="5" fill="#fff" stroke="#000"/><path d="M1 13.500v1.500M14 13.500v1.500" stroke="#000" stroke-width="1.400"/><rect x="3" y="10" width="3" height="2" fill="none" stroke="#000" stroke-width=".8"/><rect x="9" y="10" width="3" height="2" fill="none" stroke="#000" stroke-width=".8"/></svg>
<span class="ss" style="left:92px;top:357px;">PART PREPARATION</span>
<div style="left:75px;top:371px;width:1px;height:25px;background:repeating-linear-gradient(to bottom,#808080 0 1px,transparent 1px 2px)"></div>
<div style="left:76px;top:379px;width:14px;height:1px;background:repeating-linear-gradient(to right,#808080 0 1px,transparent 1px 2px)"></div>
<div style="left:76px;top:395px;width:14px;height:1px;background:repeating-linear-gradient(to right,#808080 0 1px,transparent 1px 2px)"></div>
<svg style="left:90px;top:372px" width="17" height="15" viewBox="0 0 17 15"><path d="M.5 2.500h3l1-2h5l1 2h6v12H.5z" fill="#fff" stroke="#5a9ae8" stroke-width="1"/><rect x="3" y="5" width="3" height="2.500" fill="none" stroke="#2c6cd0" stroke-width=".9"/><rect x="3" y="9.500" width="3" height="2.500" fill="none" stroke="#2c6cd0" stroke-width=".9"/><path d="M8 6.200h6M8 10.700h6" stroke="#2c6cd0" stroke-width="1.100"/></svg>
<span class="ss" style="left:119px;top:373px;width:116.400px;overflow:hidden">PartPreparation_.</span>
<svg style="left:91px;top:387px" width="16" height="16" viewBox="0 0 16 16"><path d="M1.500 3.500h9v11h-9z" fill="#fff" stroke="#000" stroke-width="1"/><path d="M7 14.500l3.500-3.500v3.500z" fill="#909090" stroke="#000" stroke-width=".6"/><path d="M5.500 11.500l1-3 7-7 1.500 1.500-7 7z" fill="#1838c0"/><path d="M5.500 11.500l1-3 2 2z" fill="#000"/></svg>
<span class="ss" style="left:119px;top:389px;">1</span>
<div style="left:44px;top:407px;width:9px;height:9px;background:#fff;border:1px solid #808080"></div>
<div style="left:46px;top:411px;width:5px;height:1px;background:#000"></div>
<div style="left:53px;top:411px;width:11px;height:1px;background:repeating-linear-gradient(to right,#808080 0 1px,transparent 1px 2px)"></div>
<svg style="left:64px;top:403px" width="15" height="15" viewBox="0 0 15 15"><rect x="11" y="0" width="3" height="5" fill="#000"/><rect x="11.800" y="1" width="1.600" height="2.600" fill="#20e020"/><rect x=".5" y="4.500" width="14" height="4" fill="#909090" stroke="#000"/><rect x=".5" y="8.500" width="14" height="5" fill="#fff" stroke="#000"/><path d="M1 13.500v1.500M14 13.500v1.500" stroke="#000" stroke-width="1.400"/><rect x="3" y="10" width="3" height="2" fill="none" stroke="#000" stroke-width=".8"/><rect x="9" y="10" width="3" height="2" fill="none" stroke="#000" stroke-width=".8"/></svg>
<span class="ss" style="left:92px;top:405px;">MI</span>
<div style="left:75px;top:419px;width:1px;height:25px;background:repeating-linear-gradient(to bottom,#808080 0 1px,transparent 1px 2px)"></div>
<div style="left:76px;top:427px;width:14px;height:1px;background:repeating-linear-gradient(to right,#808080 0 1px,transparent 1px 2px)"></div>
<div style="left:76px;top:443px;width:14px;height:1px;background:repeating-linear-gradient(to right,#808080 0 1px,transparent 1px 2px)"></div>
<svg style="left:90px;top:420px" width="17" height="15" viewBox="0 0 17 15"><path d="M.5 2.500h3l1-2h5l1 2h6v12H.5z" fill="#fff" stroke="#5a9ae8" stroke-width="1"/><rect x="3" y="5" width="3" height="2.500" fill="none" stroke="#2c6cd0" stroke-width=".9"/><rect x="3" y="9.500" width="3" height="2.500" fill="none" stroke="#2c6cd0" stroke-width=".9"/><path d="M8 6.200h6M8 10.700h6" stroke="#2c6cd0" stroke-width="1.100"/></svg>
<span class="ss" style="left:119px;top:421px;width:116.400px;overflow:hidden">MI_A3H_en.fr3</span>
<svg style="left:91px;top:435px" width="16" height="16" viewBox="0 0 16 16"><path d="M1.500 3.500h9v11h-9z" fill="#fff" stroke="#000" stroke-width="1"/><path d="M7 14.500l3.500-3.500v3.500z" fill="#909090" stroke="#000" stroke-width=".6"/><path d="M5.500 11.500l1-3 7-7 1.500 1.500-7 7z" fill="#1838c0"/><path d="M5.500 11.500l1-3 2 2z" fill="#000"/></svg>
<span class="ss" style="left:119px;top:437px;">1</span>
<div style="left:7px;top:1039px;width:211px;height:17px;background:#f0f0f0"></div>
<div style="left:26px;top:1039px;width:134px;height:16px;background:#cdcdcd"></div>
<svg style="left:7px;top:1039px" width="211" height="17" viewBox="0 0 211 17"><path d="M12.500 4l-4 4 4 4M198.500 4l4 4-4 4" fill="none" stroke="#505050" stroke-width="1.700"/></svg>
<div style="left:0px;top:1038px;width:1920px;height:38px;background:#f0f0f0"></div>
<div style="left:6px;top:1057px;width:213px;height:1px;background:#1e90ff"></div>
<div style="left:6px;top:1038px;width:1px;height:20px;background:#1e90ff"></div>
<div style="left:218px;top:1038px;width:1px;height:20px;background:#1e90ff"></div>
<div style="left:7px;top:1038px;width:211px;height:19px;background:#fff"></div>
<div style="left:7px;top:1039px;width:211px;height:16px;background:#f0f0f0"></div>
<div style="left:26px;top:1039px;width:134px;height:16px;background:#cdcdcd"></div>
<svg style="left:7px;top:1039px" width="211" height="16" viewBox="0 0 211 16"><path d="M12.500 4l-4 4 4 4M198.500 4l4 4-4 4" fill="none" stroke="#505050" stroke-width="1.700"/></svg>
<div class="sunk" style="left:226px;top:1040px;width:159px;height:17px;"></div>
<div class="sunk" style="left:388px;top:1040px;width:128px;height:17px;"></div>
<div class="sunk" style="left:519px;top:1040px;width:1198px;height:17px;"></div>
<div class="sunk" style="left:1719px;top:1040px;width:200px;height:17px;"></div>
<span class="sg" style="left:228px;top:1040px;font-size:12.500px">PART:(859)(637/222)</span>
<span class="sg" style="left:390px;top:1040px;font-size:12.500px">X:169.289 Y:142.634</span>
<div style="left:0px;top:1060px;width:222px;height:1px;background:#a0a0a0"></div>
<div class="sunk" style="left:4px;top:1062px;width:219px;height:16px;"></div>
<div class="sunk" style="left:226px;top:1062px;width:129px;height:16px;"></div>
<div class="sunk" style="left:358px;top:1062px;width:1566px;height:16px;"></div>
<div style="left:1740px;top:92px;width:168px;height:387px;background:#f0f0f0"></div>
<div style="left:1740px;top:92px;width:168px;height:26px;background:#fff;border-top:1px solid #f0f0f0"></div>
<span class="ya" style="left:1743px;top:97px;color:#8c8c8c;font-size:12px">操作流程</span>
<div style="left:1888px;top:95px;width:19px;height:19px;background:#e4e4e4;color:#fff;font:10px/18px &quot;Liberation Sans&quot;,sans-serif;text-align:center">×</div>
<div style="left:1907px;top:118px;width:1px;height:361px;background:#808080"></div>
<div style="left:1740px;top:478px;width:168px;height:1px;background:#a0a0a0"></div>
<div style="left:1740px;top:118px;width:1px;height:361px;background:#fff"></div>
<div class="btnd" style="left:1743px;top:121px;width:162px;height:32px;"></div>
<span class="cj" style="left:1769px;top:131px;color:#a8a8a8;text-shadow:1px 1px 0 #fff;">读入<span class="ss" style="position:static;display:inline-block;vertical-align:baseline;height:auto;line-height:1;color:#a8a8a8">CAD</span></span>
<svg style="left:1749px;top:130px" width="15" height="14" viewBox="0 0 15 14"><path d="M1 8l2-1.500 2.500 3L12.500 1 14 2 6 13.500z" fill="#a0a0a0"/></svg>
<div class="btn" style="left:1743px;top:157px;width:162px;height:32px;"></div>
<span class="cj" style="left:1769px;top:167px;color:#000;">读入<span class="ss" style="position:static;display:inline-block;vertical-align:baseline;height:auto;line-height:1;color:#000">BOM</span></span>
<svg style="left:1749px;top:166px" width="15" height="14" viewBox="0 0 15 14"><path d="M1 8l2-1.500 2.500 3L12.500 1 14 2 6 13.500z" fill="#0a9a0a"/></svg>
<div class="btn" style="left:1743px;top:193px;width:162px;height:32px;"></div>
<span class="cj" style="left:1769px;top:203px;color:#000;">选择元件<span class="ss" style="position:static;display:inline-block;vertical-align:baseline;height:auto;line-height:1;color:#000"></span></span>
<div class="btn" style="left:1743px;top:229px;width:162px;height:32px;box-shadow:inset 0 0 0 1px #8fc0f2;"></div>
<span class="cj" style="left:1769px;top:239px;color:#00e000;">元件参数设置<span class="ss" style="position:static;display:inline-block;vertical-align:baseline;height:auto;line-height:1;color:#00e000"></span></span>
<svg style="left:1749px;top:238px" width="15" height="14" viewBox="0 0 15 14"><path d="M1 8l2-1.500 2.500 3L12.500 1 14 2 6 13.500z" fill="#0a9a0a"/></svg>
<div class="btnd" style="left:1743px;top:265px;width:162px;height:32px;"></div>
<span class="cj" style="left:1769px;top:275px;color:#a8a8a8;text-shadow:1px 1px 0 #fff;">人员预估<span class="ss" style="position:static;display:inline-block;vertical-align:baseline;height:auto;line-height:1;color:#a8a8a8"></span></span>
<div class="btnd" style="left:1743px;top:301px;width:162px;height:32px;"></div>
<span class="cj" style="left:1769px;top:311px;color:#a8a8a8;text-shadow:1px 1px 0 #fff;">规则设置<span class="ss" style="position:static;display:inline-block;vertical-align:baseline;height:auto;line-height:1;color:#a8a8a8"></span></span>
<div class="btnd" style="left:1743px;top:337px;width:162px;height:32px;"></div>
<span class="cj" style="left:1769px;top:347px;color:#a8a8a8;text-shadow:1px 1px 0 #fff;">元件分配<span class="ss" style="position:static;display:inline-block;vertical-align:baseline;height:auto;line-height:1;color:#a8a8a8"></span></span>
<div class="btnd" style="left:1743px;top:373px;width:162px;height:32px;"></div>
<span class="cj" style="left:1769px;top:383px;color:#a8a8a8;text-shadow:1px 1px 0 #fff;">图纸设置<span class="ss" style="position:static;display:inline-block;vertical-align:baseline;height:auto;line-height:1;color:#a8a8a8"></span></span>
<div class="btn" style="left:1743px;top:409px;width:162px;height:32px;"></div>
<span class="cj" style="left:1769px;top:419px;color:#000;">文档参数设置<span class="ss" style="position:static;display:inline-block;vertical-align:baseline;height:auto;line-height:1;color:#000"></span></span>
<div class="btn" style="left:1743px;top:445px;width:162px;height:32px;"></div>
<span class="cj" style="left:1769px;top:455px;color:#000;">预览打印<span class="ss" style="position:static;display:inline-block;vertical-align:baseline;height:auto;line-height:1;color:#000"></span></span>
<svg style="left:0;top:0" width="1920" height="1076" viewBox="0 0 1920 1076" shape-rendering="crispEdges" font-family="Liberation Sans, sans-serif"><text x="785" y="136" font-size="5" fill="#a4a4a4" transform="rotate(90 785 136)">Q201</text><text x="795" y="135" font-size="5" fill="#a4a4a4" transform="rotate(90 795 135)">C229</text><text x="806" y="144" font-size="5" fill="#a4a4a4">L201</text><text x="822" y="134" font-size="5" fill="#a4a4a4" transform="rotate(90 822 134)">C215</text><text x="832" y="134" font-size="5" fill="#a4a4a4" transform="rotate(90 832 134)">R228</text><text x="842" y="133" font-size="5" fill="#a4a4a4" transform="rotate(90 842 133)">R229</text><text x="848" y="138" font-size="5" fill="#a4a4a4">R2294</text><text x="848" y="144" font-size="5" fill="#a4a4a4">R2301</text><text x="889" y="140" font-size="5" fill="#a4a4a4">C232</text><text x="893" y="151" font-size="5" fill="#a4a4a4">C236</text><text x="821" y="158" font-size="5" fill="#a4a4a4" transform="rotate(90 821 158)">C214</text><text x="832" y="158" font-size="5" fill="#a4a4a4" transform="rotate(90 832 158)">R231</text><text x="839" y="166" font-size="5" fill="#a4a4a4" transform="rotate(90 839 166)">C226</text><text x="846" y="166" font-size="5" fill="#a4a4a4" transform="rotate(90 846 166)">L310</text><text x="862" y="156" font-size="5" fill="#a4a4a4" transform="rotate(90 862 156)">R233</text><text x="871" y="156" font-size="5" fill="#a4a4a4" transform="rotate(90 871 156)">R232</text><text x="880" y="156" font-size="5" fill="#a4a4a4" transform="rotate(90 880 156)">L308</text><text x="886" y="156" font-size="5" fill="#a4a4a4" transform="rotate(90 886 156)">C223</text><text x="853" y="183" font-size="5" fill="#a4a4a4">FB202 FB201</text><text x="873" y="188" font-size="5" fill="#a4a4a4">FB205</text><text x="922" y="143" font-size="5" fill="#a4a4a4">C246</text><text x="921" y="149" font-size="5" fill="#a4a4a4">C244</text><text x="921" y="155" font-size="5" fill="#a4a4a4">C245</text><text x="921" y="161" font-size="5" fill="#a4a4a4">FB208</text><text x="921" y="167" font-size="5" fill="#a4a4a4">C248</text><text x="770" y="179" font-size="5" fill="#a4a4a4">LL334 LLL31</text><text x="763" y="200" font-size="5" fill="#a4a4a4">C1130</text><text x="879" y="195" font-size="5" fill="#a4a4a4">U202</text><text x="796" y="187" font-size="5" fill="#a4a4a4" transform="rotate(90 796 187)">L1112</text><text x="803" y="187" font-size="5" fill="#a4a4a4" transform="rotate(90 803 187)">L1113</text><text x="814" y="186" font-size="5" fill="#a4a4a4" transform="rotate(90 814 186)">L3335</text><text x="826" y="200" font-size="5" fill="#a4a4a4">L204</text><text x="909" y="160" font-size="5" fill="#a4a4a4" transform="rotate(90 909 160)">C249</text><text x="895" y="190" font-size="5" fill="#a4a4a4" transform="rotate(90 895 190)">R52</text><text x="843" y="188" font-size="5" fill="#a4a4a4" transform="rotate(90 843 188)">C213</text><text x="851" y="186" font-size="5" fill="#a4a4a4" transform="rotate(90 851 186)">C221</text><text x="857" y="191" font-size="5" fill="#a4a4a4" transform="rotate(90 857 191)">L205</text><text x="865" y="196" font-size="5" fill="#a4a4a4">L206</text><text x="976" y="135" font-size="11" fill="#868686" text-anchor="middle" dominant-baseline="central">M</text><text x="977" y="156" font-size="5" fill="#a4a4a4">MH2</text><text x="1010" y="155" font-size="5" fill="#a4a4a4">L303</text><text x="1012" y="166" font-size="5" fill="#a4a4a4">303</text><text x="1036" y="162" font-size="5" fill="#a4a4a4" transform="rotate(90 1036 162)">R345</text><text x="1047" y="140" font-size="5" fill="#a4a4a4">P242</text><text x="1050" y="172" font-size="5" fill="#a4a4a4" transform="rotate(90 1050 172)">C359</text><text x="1055" y="172" font-size="5" fill="#a4a4a4" transform="rotate(90 1055 172)">R358</text><text x="1060" y="172" font-size="5" fill="#a4a4a4" transform="rotate(90 1060 172)">R356</text><text x="1066" y="172" font-size="5" fill="#a4a4a4" transform="rotate(90 1066 172)">C363</text><text x="1074" y="145" font-size="5" fill="#a4a4a4">L304</text><text x="1078" y="152" font-size="5" fill="#a4a4a4" transform="rotate(90 1078 152)">304</text><text x="1022" y="191" font-size="5" fill="#a4a4a4" transform="rotate(90 1022 191)">J2</text><text x="1124" y="196" font-size="5" fill="#a4a4a4">R391</text><text x="1181" y="127" font-size="10.5" fill="#868686" text-anchor="middle" dominant-baseline="central" textLength="26" lengthAdjust="spacingAndGlyphs">J404</text><text x="1148" y="136" font-size="5" fill="#a4a4a4">J404</text><text x="1167" y="106" font-size="5" fill="#a4a4a4">L</text><text x="1195" y="106" font-size="5" fill="#a4a4a4">3</text><text x="1183" y="151" font-size="5" fill="#a4a4a4">C400 C401</text><text x="1190" y="187" font-size="10.5" fill="#868686" text-anchor="middle" dominant-baseline="central" textLength="22.5" lengthAdjust="spacingAndGlyphs" transform="rotate(90 1190 187)">U402</text><text x="1155" y="170" font-size="5" fill="#a4a4a4">U402</text><text x="1216" y="183" font-size="5" fill="#a4a4a4">C415</text><text x="1216" y="194" font-size="5" fill="#a4a4a4">C414</text><text x="1201" y="226" font-size="5" fill="#a4a4a4">C406</text><text x="1240" y="178.5" font-size="5" fill="#a4a4a4">SW1201</text><text x="1235" y="207" font-size="5" fill="#a4a4a4">L</text><text x="1249" y="207" font-size="5" fill="#a4a4a4">SW5</text><text x="1237" y="214" font-size="5" fill="#a4a4a4">R3225</text><text x="1313" y="168.5" font-size="10.5" fill="#868686" text-anchor="middle" dominant-baseline="central" textLength="22.5" lengthAdjust="spacingAndGlyphs">U116</text><text x="1309" y="152" font-size="5" fill="#a4a4a4">R335</text><text x="1339" y="157" font-size="5" fill="#a4a4a4">C1025</text><text x="1339" y="162" font-size="5" fill="#a4a4a4">R867</text><text x="1339" y="167" font-size="5" fill="#a4a4a4">R868</text><text x="1343" y="191" font-size="5" fill="#a4a4a4" transform="rotate(90 1343 191)">R201</text><text x="1366" y="180" font-size="10.5" fill="#868686" text-anchor="middle" dominant-baseline="central" textLength="23" lengthAdjust="spacingAndGlyphs" transform="rotate(90 1366 180)">U117</text><text x="1358" y="157" font-size="5" fill="#a4a4a4">R117</text><text x="1384" y="169" font-size="5" fill="#a4a4a4">R864</text><text x="1384" y="196" font-size="5" fill="#a4a4a4">R865</text><text x="1372" y="213" font-size="5" fill="#a4a4a4">C330</text><text x="1400" y="136" font-size="8" fill="#606060" text-anchor="middle" dominant-baseline="central" transform="rotate(90 1400 136)">M</text><text x="1370" y="122" font-size="5" fill="#a4a4a4" transform="rotate(90 1370 122)">MH</text><text x="1316" y="219" font-size="5" fill="#a4a4a4" transform="rotate(90 1316 219)">R3311</text><text x="1320" y="219" font-size="5" fill="#a4a4a4" transform="rotate(90 1320 219)">R3312</text><text x="1148" y="225.5" font-size="5" fill="#a4a4a4">R342</text><text x="1148" y="231.5" font-size="5" fill="#a4a4a4">R341</text><text x="1148" y="238.5" font-size="5" fill="#a4a4a4">R560</text><text x="1148" y="244.5" font-size="5" fill="#a4a4a4">R345</text><text x="1148" y="250.5" font-size="5" fill="#a4a4a4">R379</text><text x="1148" y="255.5" font-size="5" fill="#a4a4a4">R371</text><text x="1172" y="232" font-size="5" fill="#a4a4a4" transform="rotate(90 1172 232)">R353</text><text x="1177" y="232" font-size="5" fill="#a4a4a4" transform="rotate(90 1177 232)">R352</text><text x="1182" y="232" font-size="5" fill="#a4a4a4" transform="rotate(90 1182 232)">C350</text><text x="1187" y="232" font-size="5" fill="#a4a4a4" transform="rotate(90 1187 232)">C318</text><text x="1338" y="221" font-size="5" fill="#a4a4a4">J602</text><text x="1365" y="317" font-size="10.5" fill="#868686" text-anchor="middle" dominant-baseline="central" textLength="22.6" lengthAdjust="spacingAndGlyphs" transform="rotate(180 1365 317)">J602</text><text x="1292" y="259" font-size="5" fill="#a4a4a4">J601</text><text x="1307" y="259" font-size="5" fill="#a4a4a4" transform="rotate(90 1307 259)">20</text><text x="1318" y="259" font-size="5" fill="#a4a4a4" transform="rotate(90 1318 259)">19</text><text x="1312" y="323" font-size="10.5" fill="#868686" text-anchor="middle" dominant-baseline="central" textLength="21.3" lengthAdjust="spacingAndGlyphs" transform="rotate(90 1312 323)">J601</text><text x="1307" y="378" font-size="5" fill="#a4a4a4" transform="rotate(90 1307 378)">2</text><text x="1318" y="378" font-size="5" fill="#a4a4a4" transform="rotate(90 1318 378)">1</text><text x="1223" y="279.5" font-size="5" fill="#a4a4a4">R1022 C1022</text><text x="1223" y="285.1" font-size="5" fill="#a4a4a4">R1018 C1014</text><text x="1223" y="290.8" font-size="5" fill="#a4a4a4">R1028 C1023</text><text x="1223" y="296.4" font-size="5" fill="#a4a4a4">R1007 C1007</text><text x="1223" y="302.1" font-size="5" fill="#a4a4a4">R1023 C1021</text><text x="1223" y="307.7" font-size="5" fill="#a4a4a4">R1006 C1008</text><text x="1223" y="313.3" font-size="5" fill="#a4a4a4">R1021 C1020</text><text x="1223" y="319" font-size="5" fill="#a4a4a4">R1005 C1005</text><text x="1223" y="324.6" font-size="5" fill="#a4a4a4">R1020 C1013</text><text x="1223" y="330.3" font-size="5" fill="#a4a4a4">R1004 C1004</text><text x="1223" y="335.9" font-size="5" fill="#a4a4a4">R1019 C1018</text><text x="1223" y="341.5" font-size="5" fill="#a4a4a4">R1003 C1003</text><text x="1223" y="347.2" font-size="5" fill="#a4a4a4">R1018 C1017</text><text x="1223" y="352.8" font-size="5" fill="#a4a4a4">R1002 C1002</text><text x="1223" y="358.5" font-size="5" fill="#a4a4a4">R1204</text><text x="1223" y="364.1" font-size="5" fill="#a4a4a4">R1001 C1001</text><text x="1223" y="369.7" font-size="5" fill="#a4a4a4">R1216 R1208</text><text x="1223" y="375.4" font-size="5" fill="#a4a4a4">R1202 R1217</text><text x="1194" y="285" font-size="5" fill="#a4a4a4">R532 R511</text><text x="1194" y="296" font-size="5" fill="#a4a4a4">R536 R508</text><text x="1190" y="357" font-size="5" fill="#a4a4a4">RL211 R1213</text><text x="1144" y="279" font-size="5" fill="#a4a4a4">R4</text><text x="1143" y="297" font-size="5" fill="#a4a4a4">226</text><text x="1147" y="350" font-size="10.5" fill="#868686" text-anchor="middle" dominant-baseline="central" textLength="16.3" lengthAdjust="spacingAndGlyphs" transform="rotate(-90 1147 350)">U19</text><text x="1142" y="393" font-size="5" fill="#a4a4a4">311</text><text x="1159" y="393" font-size="5" fill="#a4a4a4">C188</text><text x="1146" y="431" font-size="10.5" fill="#868686" text-anchor="middle" dominant-baseline="central" textLength="9" lengthAdjust="spacingAndGlyphs" transform="rotate(-90 1146 431)">J1</text><text x="1145" y="465" font-size="5" fill="#a4a4a4" transform="rotate(90 1145 465)">J</text><text x="1164.4" y="445" font-size="4.5" fill="#a4a4a4" transform="rotate(-90 1164.4 445)">R244 R243</text><text x="1170" y="415" font-size="5" fill="#a4a4a4">UL203</text><text x="1170" y="420" font-size="5" fill="#a4a4a4">UL202</text><text x="1185" y="427.8" font-size="4" fill="#a0a0a0" text-anchor="middle" dominant-baseline="central">BBU</text><text x="1201" y="421" font-size="5" fill="#a4a4a4">R1208</text><text x="1207" y="436" font-size="5" fill="#a4a4a4">R1200</text><text x="1220" y="457" font-size="5" fill="#a4a4a4" transform="rotate(-90 1220 457)">C186</text><text x="1225" y="457" font-size="5" fill="#a4a4a4" transform="rotate(-90 1225 457)">C1212</text><text x="1223" y="469" font-size="5" fill="#a4a4a4">C185</text><text x="1172" y="445" font-size="5" fill="#a4a4a4" transform="rotate(-90 1172 445)">C1203</text><text x="1161" y="454" font-size="5" fill="#a4a4a4">C308</text><text x="1180" y="457" font-size="5" fill="#a4a4a4">UL1200</text><text x="1185" y="461" font-size="5" fill="#a4a4a4">UL1201</text><text x="1147" y="475" font-size="7" fill="#a0a0a0" text-anchor="middle" dominant-baseline="central">308</text><text x="1166" y="469" font-size="5" fill="#a4a4a4">C307</text><text x="1169.4" y="488" font-size="5" fill="#a4a4a4" transform="rotate(-90 1169.4 488)">CL216</text><text x="1177" y="484" font-size="7" fill="#a0a0a0" text-anchor="middle" dominant-baseline="central" transform="rotate(90 1177 484)">31</text><text x="1212" y="480" font-size="5" fill="#a4a4a4">R3412</text><text x="1214" y="490" font-size="5" fill="#a4a4a4">R1207</text><text x="1190" y="498" font-size="5" fill="#a4a4a4">U1204</text><text x="1227" y="540" font-size="5" fill="#a4a4a4">R3214</text><text x="1227" y="548" font-size="5" fill="#a4a4a4">R1222</text><text x="1211" y="555" font-size="5" fill="#a4a4a4">C205</text><text x="1228" y="568" font-size="5" fill="#a4a4a4">R2L05</text><text x="1228" y="573" font-size="5" fill="#a4a4a4">R2L07</text><text x="1251" y="581" font-size="5" fill="#a4a4a4" transform="rotate(-90 1251 581)">C207</text><text x="1224" y="604" font-size="5" fill="#a4a4a4">R213</text><text x="1224" y="609" font-size="5" fill="#a4a4a4">R212</text><text x="1277" y="387" font-size="5" fill="#a4a4a4">J1814</text><text x="1283.5" y="422" font-size="10.5" fill="#868686" text-anchor="middle" dominant-baseline="central" textLength="33" lengthAdjust="spacingAndGlyphs" transform="rotate(-90 1283.5 422)">J1814</text><text x="1283" y="452" font-size="5" fill="#a4a4a4" transform="rotate(90 1283 452)">J</text><text x="1247" y="412" font-size="5" fill="#a4a4a4">R3128</text><text x="1244" y="424" font-size="5" fill="#a4a4a4" transform="rotate(-90 1244 424)">C109</text><text x="1249" y="424" font-size="5" fill="#a4a4a4" transform="rotate(-90 1249 424)">C108</text><text x="1239" y="435" font-size="5" fill="#a4a4a4" transform="rotate(-90 1239 435)">R429</text><text x="1253" y="435" font-size="5" fill="#a4a4a4" transform="rotate(-90 1253 435)">R428</text><text x="1260.5" y="450" font-size="5" fill="#a4a4a4" transform="rotate(-90 1260.5 450)">R406</text><text x="1271.8" y="450" font-size="5" fill="#a4a4a4" transform="rotate(-90 1271.8 450)">R401</text><text x="1300" y="453" font-size="5" fill="#a4a4a4">C1019</text><text x="1340" y="439" font-size="5" fill="#a4a4a4" transform="rotate(-90 1340 439)">R1009</text><text x="1346.4" y="443" font-size="5" fill="#a4a4a4" transform="rotate(-90 1346.4 443)">R3015</text><text x="1354" y="443" font-size="5" fill="#a4a4a4" transform="rotate(-90 1354 443)">C1014</text><text x="1355" y="443" font-size="5" fill="#a4a4a4">C1005</text><text x="1318" y="491" font-size="10.5" fill="#868686" text-anchor="middle" dominant-baseline="central" textLength="29.4" lengthAdjust="spacingAndGlyphs" transform="rotate(-90 1318 491)">U1002</text><text x="1266" y="494" font-size="5" fill="#a4a4a4" transform="rotate(-90 1266 494)">R3002</text><text x="1381" y="436" font-size="5" fill="#a4a4a4">J3</text><text x="1383" y="509" font-size="10.5" fill="#868686" text-anchor="middle" dominant-baseline="central" textLength="9.5" lengthAdjust="spacingAndGlyphs">J3</text><text x="1294" y="524" font-size="5" fill="#a4a4a4">C1012</text><text x="1296" y="545" font-size="5" fill="#a4a4a4">C1500</text><text x="1318.5" y="551" font-size="5" fill="#a4a4a4" transform="rotate(-90 1318.5 551)">C1985</text><text x="1325.5" y="551" font-size="5" fill="#a4a4a4" transform="rotate(-90 1325.5 551)">C3015</text><text x="1332.5" y="551" font-size="5" fill="#a4a4a4" transform="rotate(-90 1332.5 551)">RL034</text><text x="1343" y="558" font-size="5" fill="#a4a4a4" transform="rotate(-90 1343 558)">RL02</text><text x="1353.5" y="558" font-size="5" fill="#a4a4a4" transform="rotate(-90 1353.5 558)">RL03</text><text x="1364" y="558" font-size="5" fill="#a4a4a4" transform="rotate(-90 1364 558)">RL00</text><text x="1248" y="553" font-size="4.5" fill="#a4a4a4" transform="rotate(-90 1248 553)">RL036 R1021</text><text x="1255.5" y="553" font-size="4.5" fill="#a4a4a4" transform="rotate(-90 1255.5 553)">RL026 R1017</text><text x="1262.5" y="553" font-size="4.5" fill="#a4a4a4" transform="rotate(-90 1262.5 553)">RL025 RL024</text><text x="1268" y="531" font-size="5" fill="#a4a4a4" transform="rotate(-90 1268 531)">C1015</text><text x="1357" y="571" font-size="5" fill="#a4a4a4">RL010</text><text x="1293" y="555" font-size="5" fill="#a4a4a4">C203</text><text x="1297" y="625" font-size="10.5" fill="#868686" text-anchor="middle" dominant-baseline="central" textLength="22.6" lengthAdjust="spacingAndGlyphs" transform="rotate(-90 1297 625)">U204</text><text x="1251" y="617" font-size="5" fill="#a4a4a4">U204</text><text x="1351" y="635" font-size="5" fill="#a4a4a4">J405</text><text x="1368" y="663" font-size="10.5" fill="#868686" text-anchor="middle" dominant-baseline="central" textLength="25" lengthAdjust="spacingAndGlyphs" transform="rotate(-90 1368 663)">J405</text><text x="1345" y="647" font-size="5" fill="#a4a4a4" transform="rotate(90 1345 647)">1</text><text x="1345" y="675" font-size="5" fill="#a4a4a4" transform="rotate(90 1345 675)">1</text><text x="1219.5" y="654.5" font-size="6" fill="#a0a0a0" text-anchor="middle" dominant-baseline="central" transform="rotate(90 1219.5 654.5)">168</text><text x="1213" y="641" font-size="5" fill="#a4a4a4">C1658</text><text x="1250" y="644" font-size="5" fill="#a4a4a4">R232</text><text x="1231" y="649" font-size="4.5" fill="#a4a4a4">RJ202 RJ203</text><text x="1231" y="654" font-size="4.5" fill="#a4a4a4">RJ204 RJ201</text><text x="1231" y="660" font-size="5" fill="#a4a4a4">R201</text><text x="1251" y="659" font-size="5" fill="#a4a4a4">R233</text><text x="1198" y="683" font-size="5" fill="#a4a4a4">C1653</text><text x="1180" y="687" font-size="5" fill="#a4a4a4">C1029</text><text x="1229" y="677" font-size="5" fill="#a4a4a4">RL320</text><text x="1229" y="682" font-size="5" fill="#a4a4a4">CL315</text><text x="1175" y="675" font-size="5" fill="#a4a4a4">Y</text><text x="1221" y="691.5" font-size="7" fill="#a0a0a0" text-anchor="middle" dominant-baseline="central">314</text><text x="1191" y="697" font-size="5" fill="#a4a4a4">C1314</text><text x="1221" y="709.5" font-size="7" fill="#a0a0a0" text-anchor="middle" dominant-baseline="central">359</text><text x="1189" y="710" font-size="5" fill="#a4a4a4">CL359</text><text x="1294" y="692" font-size="5" fill="#a4a4a4">C202</text><text x="1319" y="692" font-size="5" fill="#a4a4a4">R208</text><text x="1303" y="728" font-size="10.5" fill="#868686" text-anchor="middle" dominant-baseline="central" textLength="22" lengthAdjust="spacingAndGlyphs" transform="rotate(180 1303 728)">U201</text><text x="1269" y="696" font-size="5" fill="#a4a4a4">U201</text><text x="1341" y="719" font-size="5" fill="#a4a4a4">R237</text><text x="1337" y="730" font-size="5" fill="#a4a4a4" transform="rotate(90 1337 730)">R212</text><text x="1344" y="746" font-size="5" fill="#a4a4a4">C201</text><text x="1297" y="775" font-size="10.5" fill="#868686" text-anchor="middle" dominant-baseline="central" textLength="22.6" lengthAdjust="spacingAndGlyphs" transform="rotate(180 1297 775)">U203</text><text x="1251" y="764" font-size="5" fill="#a4a4a4">U203</text><text x="1325" y="778" font-size="4.5" fill="#a4a4a4">R242</text><text x="1325" y="782" font-size="4.5" fill="#a4a4a4">R243</text><text x="1346.6" y="779.8" font-size="7" fill="#a0a0a0" text-anchor="middle" dominant-baseline="central" transform="rotate(90 1346.6 779.8)">31</text><text x="1339" y="764" font-size="5" fill="#a4a4a4">C1313</text><text x="1247" y="788" font-size="5" fill="#a4a4a4">C206</text><text x="1291" y="808.5" font-size="10.5" fill="#868686" text-anchor="middle" dominant-baseline="central" textLength="22" lengthAdjust="spacingAndGlyphs">U205</text><text x="1253" y="802" font-size="5" fill="#a4a4a4">U205</text><text x="1324" y="803" font-size="5" fill="#a4a4a4">C208</text><text x="1341" y="811" font-size="5" fill="#a4a4a4">C1305</text><text x="1240" y="810" font-size="5" fill="#a4a4a4">FB1301</text><text x="1224.2" y="828.5" font-size="7" fill="#a0a0a0" text-anchor="middle" dominant-baseline="central">355</text><text x="1218" y="818" font-size="5" fill="#a4a4a4">C1355</text><text x="1151" y="779" font-size="10.5" fill="#868686" text-anchor="middle" dominant-baseline="central" textLength="16" lengthAdjust="spacingAndGlyphs">801</text><text x="1176" y="761" font-size="5" fill="#a4a4a4">B</text><text x="1176" y="770" font-size="5" fill="#a4a4a4">D</text><text x="1176" y="779" font-size="5" fill="#a4a4a4">F</text><text x="1176" y="788" font-size="5" fill="#a4a4a4">H</text><text x="1176" y="797" font-size="5" fill="#a4a4a4">K</text><text x="1176" y="806" font-size="5" fill="#a4a4a4">M</text><text x="1148" y="817" font-size="5" fill="#a4a4a4">U801</text><text x="1166" y="747" font-size="5" fill="#a4a4a4">1</text><text x="1172" y="747" font-size="5" fill="#a4a4a4">2</text><text x="1246.2" y="845.3" font-size="7" fill="#a0a0a0" text-anchor="middle" dominant-baseline="central">468</text><text x="1262" y="847" font-size="5" fill="#a4a4a4">C468</text><text x="1307.5" y="845.3" font-size="7" fill="#a0a0a0" text-anchor="middle" dominant-baseline="central">394</text><text x="1333" y="852" font-size="5" fill="#a4a4a4">R402</text><text x="1293" y="835" font-size="5" fill="#a4a4a4">C408</text><text x="1200" y="842" font-size="5" fill="#a4a4a4">FB1381</text><text x="1151" y="832" font-size="5" fill="#a4a4a4" transform="rotate(90 1151 832)">C312</text><text x="1161" y="832" font-size="5" fill="#a4a4a4" transform="rotate(90 1161 832)">C311</text><text x="773" y="903" font-size="10.5" fill="#868686" text-anchor="middle" dominant-baseline="central" textLength="27.7" lengthAdjust="spacingAndGlyphs" transform="rotate(90 773 903)">J1202</text><text x="797" y="881" font-size="5" fill="#a4a4a4">J1302</text><text x="791" y="872" font-size="5" fill="#a4a4a4">FB1171</text><text x="800" y="892" font-size="5" fill="#a4a4a4">Q002</text><text x="797" y="929" font-size="5" fill="#a4a4a4">R1216</text><text x="837" y="903" font-size="10.5" fill="#868686" text-anchor="middle" dominant-baseline="central" textLength="27.5" lengthAdjust="spacingAndGlyphs" transform="rotate(-90 837 903)">J1816</text><text x="871" y="903" font-size="10.5" fill="#868686" text-anchor="middle" dominant-baseline="central" textLength="27.5" lengthAdjust="spacingAndGlyphs" transform="rotate(-90 871 903)">J1817</text><text x="872" y="933" font-size="5" fill="#a4a4a4" transform="rotate(90 872 933)">J</text><text x="848" y="965.5" font-size="10.5" fill="#868686" text-anchor="middle" dominant-baseline="central" textLength="29" lengthAdjust="spacingAndGlyphs">L1605</text><text x="790" y="954" font-size="5" fill="#a4a4a4">L1605</text><text x="760" y="962" font-size="5" fill="#a4a4a4">MH1</text><text x="765.5" y="937" font-size="11" fill="#ffff00" text-anchor="middle" dominant-baseline="central">Y</text><text x="806.5" y="979" font-size="11" fill="#ffff00" text-anchor="middle" dominant-baseline="central">X</text><text x="753" y="988" font-size="11" fill="#868686" text-anchor="middle" dominant-baseline="central">M</text><text x="893" y="916" font-size="5" fill="#a4a4a4">C1228</text><text x="900" y="951" font-size="5" fill="#a4a4a4">CL40</text><text x="940" y="925" font-size="10.5" fill="#868686" text-anchor="middle" dominant-baseline="central" textLength="23" lengthAdjust="spacingAndGlyphs" transform="rotate(180 940 925)">U118</text><text x="915" y="904" font-size="5" fill="#a4a4a4">R338</text><text x="910" y="883" font-size="5" fill="#a4a4a4">C1117</text><text x="980" y="872" font-size="5" fill="#a4a4a4">8815</text><text x="1004" y="892" font-size="4.5" fill="#a4a4a4">L20049</text><text x="1004" y="872" font-size="5" fill="#a4a4a4">QL202</text><text x="1004" y="877" font-size="5" fill="#a4a4a4">R3280</text><text x="997" y="880" font-size="5" fill="#a4a4a4" transform="rotate(90 997 880)">R210</text><text x="958" y="903" font-size="5" fill="#a4a4a4">C1232</text><text x="993" y="923" font-size="10.5" fill="#868686" text-anchor="middle" dominant-baseline="central" textLength="22" lengthAdjust="spacingAndGlyphs" transform="rotate(180 993 923)">Q203</text><text x="969" y="932" font-size="5" fill="#a4a4a4" transform="rotate(90 969 932)">QL203</text><text x="980" y="956" font-size="5" fill="#a4a4a4">CL03</text><text x="1000" y="956" font-size="5" fill="#a4a4a4">C104</text><text x="1019" y="902" font-size="5" fill="#a4a4a4">FB1202</text><text x="1027" y="907" font-size="5" fill="#a4a4a4">R453</text><text x="1028" y="876" font-size="5" fill="#a4a4a4" transform="rotate(90 1028 876)">R1323</text><text x="1033" y="890" font-size="5" fill="#a4a4a4" transform="rotate(90 1033 890)">R446</text><text x="1021" y="870" font-size="5" fill="#a4a4a4">C</text><text x="1018" y="937" font-size="5" fill="#a4a4a4" transform="rotate(90 1018 937)">C1222</text><text x="1030" y="932" font-size="5" fill="#a4a4a4" transform="rotate(90 1030 932)">R1342</text><text x="1037" y="932" font-size="5" fill="#a4a4a4" transform="rotate(90 1037 932)">C1272</text><text x="1026" y="957" font-size="5" fill="#a4a4a4">R3345</text><text x="1041" y="921" font-size="5" fill="#a4a4a4" transform="rotate(90 1041 921)">TR2</text><text x="1064.7" y="898.8" font-size="10.5" fill="#868686" text-anchor="middle" dominant-baseline="central" textLength="22.5" lengthAdjust="spacingAndGlyphs" transform="rotate(90 1064.7 898.8)">L407</text><text x="1088" y="887" font-size="5" fill="#a4a4a4">L407</text><text x="1125.1" y="898.8" font-size="10.5" fill="#868686" text-anchor="middle" dominant-baseline="central" textLength="22.5" lengthAdjust="spacingAndGlyphs" transform="rotate(-90 1125.1 898.8)">L406</text><text x="1149" y="887" font-size="5" fill="#a4a4a4">L408</text><text x="1145" y="869" font-size="7" fill="#a0a0a0" text-anchor="middle" dominant-baseline="central">440</text><text x="1056.8" y="926.4" font-size="7" fill="#a0a0a0" text-anchor="middle" dominant-baseline="central">453</text><text x="1057" y="943" font-size="7" fill="#a0a0a0" text-anchor="middle" dominant-baseline="central">366</text><text x="1088" y="920" font-size="5" fill="#a4a4a4">R465</text><text x="1096" y="947" font-size="10.5" fill="#868686" text-anchor="middle" dominant-baseline="central" textLength="7" lengthAdjust="spacingAndGlyphs" transform="rotate(-90 1096 947)">U</text><text x="1130.8" y="926.9" font-size="7" fill="#a0a0a0" text-anchor="middle" dominant-baseline="central">446</text><text x="1131" y="941.5" font-size="7" fill="#a0a0a0" text-anchor="middle" dominant-baseline="central">258</text><text x="1152" y="908" font-size="5" fill="#a4a4a4">C1318</text><text x="1159" y="932" font-size="5" fill="#a4a4a4" transform="rotate(90 1159 932)">RL304</text><text x="1164" y="932" font-size="5" fill="#a4a4a4" transform="rotate(90 1164 932)">CL311</text><text x="1149" y="947" font-size="5" fill="#a4a4a4" transform="rotate(90 1149 947)">C461</text><text x="1154" y="947" font-size="5" fill="#a4a4a4" transform="rotate(90 1154 947)">R1303</text><text x="1130" y="965" font-size="5" fill="#a4a4a4">R443</text><text x="1133" y="955" font-size="5" fill="#a4a4a4">C1258</text><text x="1149" y="964" font-size="5" fill="#a4a4a4">R3305</text><text x="1029" y="973" font-size="4.5" fill="#a4a4a4">R4800a</text><text x="1024" y="959" font-size="5" fill="#a4a4a4">QL206</text><text x="1057" y="962" font-size="5" fill="#a4a4a4">8421</text><text x="1047" y="986" font-size="5" fill="#a4a4a4">C454</text><text x="1088" y="993" font-size="5" fill="#a4a4a4">C451</text><text x="1119" y="975.7" font-size="5" fill="#a4a4a4">C456</text><text x="1119" y="981" font-size="5" fill="#a4a4a4">C446</text><text x="1119" y="989.8" font-size="5" fill="#a4a4a4">R434</text><text x="1067" y="1011" font-size="5" fill="#a4a4a4" transform="rotate(-90 1067 1011)">R448</text><text x="1072" y="1011" font-size="5" fill="#a4a4a4" transform="rotate(-90 1072 1011)">R449</text><text x="1075" y="986" font-size="5" fill="#a4a4a4" transform="rotate(90 1075 986)">L505</text><text x="1081" y="986" font-size="5" fill="#a4a4a4" transform="rotate(90 1081 986)">C452</text><text x="1077" y="1008" font-size="5" fill="#a4a4a4">R465</text><text x="1100" y="986" font-size="5" fill="#a4a4a4" transform="rotate(90 1100 986)">R436</text><text x="1105" y="986" font-size="5" fill="#a4a4a4" transform="rotate(90 1105 986)">C58</text><text x="1197.5" y="862.4" font-size="7" fill="#a0a0a0" text-anchor="middle" dominant-baseline="central" transform="rotate(90 1197.5 862.4)">306</text><text x="1190" y="882" font-size="5" fill="#a4a4a4">C1802</text><text x="1212" y="861" font-size="5" fill="#a4a4a4">CL344</text><text x="1247" y="862.5" font-size="7" fill="#a0a0a0" text-anchor="middle" dominant-baseline="central" transform="rotate(180 1247 862.5)">476</text><text x="1261" y="865" font-size="5" fill="#a4a4a4">C478</text><text x="1308" y="862.5" font-size="7" fill="#a0a0a0" text-anchor="middle" dominant-baseline="central">467</text><text x="1279" y="865" font-size="5" fill="#a4a4a4">C447</text><text x="1325.5" y="851.5" font-size="5" fill="#a4a4a4" transform="rotate(90 1325.5 851.5)">FB1383</text><text x="1244.1" y="898.8" font-size="10.5" fill="#868686" text-anchor="middle" dominant-baseline="central" textLength="22.5" lengthAdjust="spacingAndGlyphs" transform="rotate(90 1244.1 898.8)">L402</text><text x="1223" y="877" font-size="5" fill="#a4a4a4">L402</text><text x="1305.5" y="899.2" font-size="10.5" fill="#868686" text-anchor="middle" dominant-baseline="central" textLength="22.5" lengthAdjust="spacingAndGlyphs" transform="rotate(-90 1305.5 899.2)">L408</text><text x="1286" y="877" font-size="5" fill="#a4a4a4">L408</text><text x="1331" y="894" font-size="5" fill="#a4a4a4" transform="rotate(90 1331 894)">R3315</text><text x="1337" y="894" font-size="5" fill="#a4a4a4" transform="rotate(90 1337 894)">C463</text><text x="1183" y="897" font-size="5" fill="#a4a4a4">C1256</text><text x="1190" y="932.5" font-size="10.5" fill="#868686" text-anchor="middle" dominant-baseline="central" textLength="28" lengthAdjust="spacingAndGlyphs" transform="rotate(-90 1190 932.5)">C1206</text><text x="1182" y="956" font-size="5" fill="#a4a4a4">CL206</text><text x="1210" y="889" font-size="5" fill="#a4a4a4" transform="rotate(90 1210 889)">C462</text><text x="1216" y="889" font-size="5" fill="#a4a4a4" transform="rotate(90 1216 889)">RL259</text><text x="1213" y="922" font-size="5" fill="#a4a4a4">C476</text><text x="1237.5" y="927.5" font-size="7" fill="#a0a0a0" text-anchor="middle" dominant-baseline="central">476</text><text x="1237.5" y="942" font-size="7" fill="#a0a0a0" text-anchor="middle" dominant-baseline="central">260</text><text x="1216" y="938" font-size="5" fill="#a4a4a4" transform="rotate(90 1216 938)">R1268</text><text x="1225" y="956" font-size="5" fill="#a4a4a4">CL260</text><text x="1275" y="952" font-size="10.5" fill="#868686" text-anchor="middle" dominant-baseline="central" textLength="7" lengthAdjust="spacingAndGlyphs" transform="rotate(-90 1275 952)">U</text><text x="1268" y="920" font-size="5" fill="#a4a4a4">U409</text><text x="1313.2" y="927.5" font-size="7" fill="#a0a0a0" text-anchor="middle" dominant-baseline="central">394</text><text x="1313.5" y="942" font-size="7" fill="#a0a0a0" text-anchor="middle" dominant-baseline="central">259</text><text x="1327" y="929" font-size="5" fill="#a4a4a4">C464</text><text x="1331" y="938" font-size="5" fill="#a4a4a4">R3316</text><text x="1313" y="957" font-size="5" fill="#a4a4a4">C1259</text><text x="1228" y="965" font-size="5" fill="#a4a4a4">R448</text><text x="1310" y="965" font-size="5" fill="#a4a4a4">R459</text><text x="1234" y="974" font-size="5" fill="#a4a4a4">C473</text><text x="1305" y="974" font-size="5" fill="#a4a4a4">C474</text><text x="1246" y="979" font-size="5" fill="#a4a4a4" transform="rotate(90 1246 979)">R444</text><text x="1258" y="984" font-size="5" fill="#a4a4a4" transform="rotate(90 1258 984)">C481</text><text x="1262.5" y="984" font-size="5" fill="#a4a4a4" transform="rotate(90 1262.5 984)">C163</text><text x="1271" y="988" font-size="5" fill="#a4a4a4" transform="rotate(90 1271 988)">C413</text><text x="1280" y="984" font-size="5" fill="#a4a4a4" transform="rotate(90 1280 984)">R441</text><text x="1285" y="984" font-size="5" fill="#a4a4a4" transform="rotate(90 1285 984)">C472</text><text x="1290" y="984" font-size="5" fill="#a4a4a4" transform="rotate(90 1290 984)">C483</text><text x="1302" y="979" font-size="5" fill="#a4a4a4" transform="rotate(90 1302 979)">R445</text><text x="1399" y="997" font-size="8" fill="#606060" text-anchor="middle" dominant-baseline="central" transform="rotate(90 1399 997)">M</text><text x="1387" y="965" font-size="5" fill="#a4a4a4">MH4</text><rect x="731" y="96" width="690" height="2" fill="#008000"/><rect x="731" y="1014" width="690" height="2" fill="#008000"/><rect x="731" y="96" width="2" height="920" fill="#008000"/><rect x="1419" y="96" width="2" height="920" fill="#008000"/><path d="M734 99.500H1419" fill="none" stroke="#ff00ff" stroke-width="1"/><path d="M740 99.500H1419" fill="none" stroke="#00ff00" stroke-width="1" stroke-dasharray="6 18"/><path d="M733.500 99V1014" fill="none" stroke="#000" stroke-width="1"/><path d="M733.500 111V1014" fill="none" stroke="#fff" stroke-width="1" stroke-dasharray="6 18"/><path d="M734.500 100V1013" fill="none" stroke="#00ff00" stroke-width="1"/><path d="M734 1013.500H1419" fill="none" stroke="#000" stroke-width="1" stroke-dasharray="17 7"/><path d="M748 127.500H672q-5.500 0-5.500 5.500v42q0 5.500 5.500 5.500H748" fill="none" stroke="#a8a8a8" stroke-width="1"/><rect x="745.5" y="111.5" width="201" height="588" fill="none" stroke="#ff80c0" stroke-width="1"/><path d="M748 200V113.500H943V200" fill="none" stroke="#a8a8a8" stroke-width="1"/><rect x="779" y="112" width="21" height="3" fill="#fff"/><rect x="780" y="111" width="19" height="7" rx="3" fill="#ff80c0"/><rect x="835" y="112" width="21" height="3" fill="#fff"/><rect x="836" y="111" width="19" height="7" rx="3" fill="#ff80c0"/><rect x="891" y="112" width="21" height="3" fill="#fff"/><rect x="892" y="111" width="19" height="7" rx="3" fill="#ff80c0"/><rect x="746" y="144" width="7" height="19" rx="3.5" fill="#ff80c0"/><rect x="939" y="144" width="7" height="19" rx="3.5" fill="#ff80c0"/><rect x="770" y="149" width="14" height="9" fill="#ff80c0"/><rect x="783" y="146" width="4" height="4" fill="#ff80c0"/><rect x="789" y="150" width="13" height="7" fill="#ff80c0"/><rect x="802.5" y="146.5" width="17" height="10" fill="none" stroke="#a8a8a8" stroke-width="1"/><rect x="804" y="150" width="14" height="3" fill="#ff80c0"/><rect x="807" y="150.5" width="8" height="2" fill="#fff"/><rect x="820" y="147" width="18" height="4.5" fill="#ff80c0"/><rect x="820" y="152.5" width="18" height="4" fill="#ff80c0"/><rect x="842" y="147" width="19" height="4.5" fill="#ff80c0"/><rect x="842" y="152.5" width="19" height="4" fill="#ff80c0"/><path d="M844 152H859" fill="none" stroke="#fff" stroke-width="1" stroke-dasharray="3 2"/><rect x="891" y="141" width="8" height="4.5" fill="#ff80c0"/><rect x="894.2" y="142.4" width="1.6" height="1.6" fill="#e8e8f4"/><rect x="896" y="152.5" width="5" height="7.5" rx="2" fill="#ff80c0"/><rect x="897.7" y="155.4" width="1.6" height="1.6" fill="#e8e8f4"/><rect x="851" y="168" width="4" height="9" fill="#ff80c0"/><rect x="856" y="168" width="22" height="4.5" fill="#ff80c0"/><rect x="861" y="173.5" width="17" height="4" fill="#ff80c0"/><rect x="880" y="168" width="4" height="9" fill="#ff80c0"/><rect x="885" y="167.5" width="4" height="8.5" fill="#ff80c0"/><rect x="894" y="165" width="3.5" height="7" fill="#ff80c0"/><rect x="899.5" y="165" width="4.5" height="7" fill="#ff80c0"/><rect x="889" y="172.5" width="15" height="9.5" fill="#ff80c0"/><rect x="905" y="173" width="3" height="8" fill="#ff80c0"/><rect x="910.5" y="171" width="3.5" height="9" fill="#ff80c0"/><rect x="911.5" y="174.7" width="1.6" height="1.6" fill="#e8e8f4"/><rect x="915.5" y="171" width="3.5" height="9" fill="#ff80c0"/><rect x="916.5" y="174.7" width="1.6" height="1.6" fill="#e8e8f4"/><rect x="923" y="171" width="14" height="4" fill="#ff80c0"/><rect x="923" y="175" width="9.5" height="8.5" fill="#ff80c0"/><rect x="923" y="185" width="14" height="3.5" fill="#ff80c0"/><rect x="923" y="190" width="14" height="3.7" fill="#ff80c0"/><rect x="923" y="195" width="9.5" height="7" fill="#ff80c0"/><rect x="851" y="196.7" width="4" height="5.3" fill="#ff80c0"/><rect x="865" y="197" width="9" height="4" fill="#ff80c0"/><rect x="868.7" y="198.2" width="1.6" height="1.6" fill="#e8e8f4"/><rect x="778" y="180" width="7" height="12" fill="#ff80c0"/><rect x="780" y="192" width="4" height="10" fill="#ff80c0"/><rect x="788" y="180" width="7" height="12" fill="#ff80c0"/><rect x="790" y="192" width="4" height="10" fill="#ff80c0"/><rect x="879.5" y="196.5" width="26" height="7" fill="none" stroke="#ff80c0" stroke-width="1"/><rect x="882" y="197.5" width="1.5" height="4.5" fill="#ff80c0"/><rect x="885.4" y="197.5" width="1.5" height="4.5" fill="#ff80c0"/><rect x="888.8" y="197.5" width="1.5" height="4.5" fill="#ff80c0"/><rect x="892.2" y="197.5" width="1.5" height="4.5" fill="#ff80c0"/><rect x="895.7" y="197.5" width="1.5" height="4.5" fill="#ff80c0"/><rect x="899.1" y="197.5" width="1.5" height="4.5" fill="#ff80c0"/><rect x="902.5" y="197.5" width="1.5" height="4.5" fill="#ff80c0"/><circle cx="984.5" cy="128.5" r="20" fill="none" stroke="#ff80c0" stroke-width="1" shape-rendering="auto"/><circle cx="984.5" cy="128.5" r="9.2" fill="#ffff00" stroke="#ff80c0" stroke-width="1" shape-rendering="auto"/><rect x="978" y="142" width="2" height="2" fill="#ff80c0"/><rect x="1006.5" y="157.5" width="17" height="13" rx="1.5" fill="none" stroke="#ff80c0" stroke-width="1"/><rect x="1007" y="159" width="4" height="10" fill="#ff80c0"/><rect x="1019.5" y="159" width="3.5" height="10" fill="#ff80c0"/><rect x="1030" y="162" width="4" height="9" fill="#ff80c0"/><rect x="1031.2" y="165.7" width="1.6" height="1.6" fill="#e8e8f4"/><rect x="1047" y="141" width="23" height="20" fill="#a8a8a8"/><rect x="1048" y="142" width="21" height="18" fill="#ff80c0"/><rect x="1056.5" y="143" width="4" height="16" fill="#fff"/><rect x="1049" y="149.5" width="19" height="3" fill="#fff"/><rect x="1050" y="162" width="4" height="9" fill="#ff80c0"/><rect x="1051.2" y="165.7" width="1.6" height="1.6" fill="#e8e8f4"/><rect x="1055" y="162" width="4" height="9" fill="#ff80c0"/><rect x="1056.2" y="165.7" width="1.6" height="1.6" fill="#e8e8f4"/><rect x="1060" y="162" width="4" height="9" fill="#ff80c0"/><rect x="1061.2" y="165.7" width="1.6" height="1.6" fill="#e8e8f4"/><rect x="1065" y="162" width="4" height="9" fill="#ff80c0"/><rect x="1066.2" y="165.7" width="1.6" height="1.6" fill="#e8e8f4"/><rect x="1073.5" y="147" width="13" height="16" rx="1.5" fill="none" stroke="#ff80c0" stroke-width="1"/><rect x="1076" y="147" width="8" height="3" fill="#ff80c0"/><rect x="1076" y="160" width="8" height="3" fill="#ff80c0"/><rect x="1027.5" y="187.5" width="74" height="16" fill="none" stroke="#ff80c0" stroke-width="1"/><rect x="1032.1" y="192.3" width="2.4" height="2" fill="#ff80c0"/><rect x="1032.3" y="198.2" width="2" height="1.8" fill="#ff80c0"/><rect x="1037.8" y="192.3" width="2.4" height="2" fill="#ff80c0"/><rect x="1038" y="198.2" width="2" height="1.8" fill="#ff80c0"/><rect x="1043.5" y="192.3" width="2.4" height="2" fill="#ff80c0"/><rect x="1043.7" y="198.2" width="2" height="1.8" fill="#ff80c0"/><rect x="1049.1" y="192.3" width="2.4" height="2" fill="#ff80c0"/><rect x="1049.3" y="198.2" width="2" height="1.8" fill="#ff80c0"/><rect x="1054.8" y="192.3" width="2.4" height="2" fill="#ff80c0"/><rect x="1055" y="198.2" width="2" height="1.8" fill="#ff80c0"/><rect x="1060.5" y="192.3" width="2.4" height="2" fill="#ff80c0"/><rect x="1060.7" y="198.2" width="2" height="1.8" fill="#ff80c0"/><rect x="1066.2" y="192.3" width="2.4" height="2" fill="#ff80c0"/><rect x="1066.4" y="198.2" width="2" height="1.8" fill="#ff80c0"/><rect x="1071.9" y="192.3" width="2.4" height="2" fill="#ff80c0"/><rect x="1072.1" y="198.2" width="2" height="1.8" fill="#ff80c0"/><rect x="1077.5" y="192.3" width="2.4" height="2" fill="#ff80c0"/><rect x="1077.7" y="198.2" width="2" height="1.8" fill="#ff80c0"/><rect x="1083.2" y="192.3" width="2.4" height="2" fill="#ff80c0"/><rect x="1083.4" y="198.2" width="2" height="1.8" fill="#ff80c0"/><rect x="1088.9" y="192.3" width="2.4" height="2" fill="#ff80c0"/><rect x="1089.1" y="198.2" width="2" height="1.8" fill="#ff80c0"/><rect x="1094.6" y="192.3" width="2.4" height="2" fill="#ff80c0"/><rect x="1094.8" y="198.2" width="2" height="1.8" fill="#ff80c0"/><rect x="1124" y="197.5" width="9" height="3.5" fill="#ff80c0"/><rect x="1127.7" y="198.4" width="1.6" height="1.6" fill="#e8e8f4"/><rect x="1160.5" y="109.5" width="43" height="36" fill="none" stroke="#ff80c0" stroke-width="1"/><path d="M1161 117.500H1203" fill="none" stroke="#a8a8a8" stroke-width="1"/><circle cx="1168" cy="128" r="3.5" fill="#ffff00" stroke="#ff80c0" stroke-width="1" shape-rendering="auto"/><circle cx="1182" cy="128" r="3.5" fill="#ffff00" stroke="#ff80c0" stroke-width="1" shape-rendering="auto"/><circle cx="1196" cy="128" r="3.5" fill="#ffff00" stroke="#ff80c0" stroke-width="1" shape-rendering="auto"/><rect x="1186" y="152.5" width="8.5" height="4" fill="#ff80c0"/><rect x="1189.5" y="153.7" width="1.6" height="1.6" fill="#e8e8f4"/><rect x="1196" y="152.5" width="8.5" height="4" fill="#ff80c0"/><rect x="1199.5" y="153.7" width="1.6" height="1.6" fill="#e8e8f4"/><rect x="1169.5" y="160.5" width="40" height="54" fill="none" stroke="#ff80c0" stroke-width="1"/><rect x="1176" y="162" width="2" height="11" fill="#ff80c0"/><rect x="1179.2" y="162" width="2" height="11" fill="#ff80c0"/><rect x="1182.5" y="162" width="2" height="11" fill="#ff80c0"/><rect x="1185.8" y="162" width="2" height="11" fill="#ff80c0"/><rect x="1189" y="162" width="2" height="11" fill="#ff80c0"/><rect x="1192.2" y="162" width="2" height="11" fill="#ff80c0"/><rect x="1195.5" y="162" width="2" height="11" fill="#ff80c0"/><rect x="1198.8" y="162" width="2" height="11" fill="#ff80c0"/><rect x="1202" y="162" width="2" height="11" fill="#ff80c0"/><rect x="1176" y="201" width="2" height="12" fill="#ff80c0"/><rect x="1179.2" y="201" width="2" height="12" fill="#ff80c0"/><rect x="1182.5" y="201" width="2" height="12" fill="#ff80c0"/><rect x="1185.8" y="201" width="2" height="12" fill="#ff80c0"/><rect x="1189" y="201" width="2" height="12" fill="#ff80c0"/><rect x="1192.2" y="201" width="2" height="12" fill="#ff80c0"/><rect x="1195.5" y="201" width="2" height="12" fill="#ff80c0"/><rect x="1198.8" y="201" width="2" height="12" fill="#ff80c0"/><rect x="1202" y="201" width="2" height="12" fill="#ff80c0"/><path d="M1171.500 175H1201L1208.500 182.500V198.500H1171.500z" fill="none" stroke="#a8a8a8" stroke-width="1"/><circle cx="1207" cy="164" r="1.5" fill="none" stroke="#a8a8a8" stroke-width="1" shape-rendering="auto"/><rect x="1209.5" y="178" width="5" height="8" rx="2" fill="#ff80c0"/><rect x="1209.5" y="189" width="5" height="8" rx="2" fill="#ff80c0"/><rect x="1201" y="217" width="7.5" height="3.5" fill="#ff80c0"/><rect x="1204" y="217.9" width="1.6" height="1.6" fill="#e8e8f4"/><rect x="1232.5" y="153.5" width="29" height="46" fill="none" stroke="#ff80c0" stroke-width="1"/><rect x="1237" y="154" width="20" height="17" fill="#ff80c0"/><rect x="1237" y="182.5" width="20" height="16" fill="#ff80c0"/><path d="M1233 160.500h2M1259 160.500h2M1233 192.500h2M1259 192.500h2" fill="none" stroke="#a8a8a8" stroke-width="1"/><rect x="1240" y="203" width="8" height="5" fill="#ff80c0"/><rect x="1243.2" y="204.7" width="1.6" height="1.6" fill="#e8e8f4"/><rect x="1294.5" y="153.5" width="43" height="32" fill="none" stroke="#ff80c0" stroke-width="1"/><rect x="1296.5" y="157" width="8.5" height="3" fill="#ff80c0"/><rect x="1296.5" y="164.2" width="8.5" height="3" fill="#ff80c0"/><rect x="1296.5" y="171.3" width="8.5" height="3" fill="#ff80c0"/><rect x="1296.5" y="178.5" width="8.5" height="3" fill="#ff80c0"/><rect x="1326.5" y="157" width="8.5" height="3" fill="#ff80c0"/><rect x="1326.5" y="164.2" width="8.5" height="3" fill="#ff80c0"/><rect x="1326.5" y="171.3" width="8.5" height="3" fill="#ff80c0"/><rect x="1326.5" y="178.5" width="8.5" height="3" fill="#ff80c0"/><rect x="1306.5" y="156" width="17.5" height="27" rx="1.5" fill="none" stroke="#a8a8a8" stroke-width="1"/><circle cx="1294.5" cy="153.5" r="1.7" fill="none" stroke="#a8a8a8" stroke-width="1" shape-rendering="auto"/><rect x="1340" y="171" width="8.5" height="3.5" fill="#ff80c0"/><rect x="1343.5" y="171.9" width="1.6" height="1.6" fill="#e8e8f4"/><rect x="1340" y="176" width="8.5" height="3.5" fill="#ff80c0"/><rect x="1343.5" y="176.9" width="1.6" height="1.6" fill="#e8e8f4"/><rect x="1340" y="181" width="8.5" height="3.5" fill="#ff80c0"/><rect x="1343.5" y="181.9" width="1.6" height="1.6" fill="#e8e8f4"/><rect x="1340" y="186" width="8.5" height="3.5" fill="#ff80c0"/><rect x="1343.5" y="186.9" width="1.6" height="1.6" fill="#e8e8f4"/><rect x="1350" y="158.5" width="31.5" height="42.5" fill="none" stroke="#ff80c0" stroke-width="1"/><rect x="1353" y="161" width="3.7" height="8.5" fill="#ff80c0"/><rect x="1360.3" y="161" width="3.7" height="8.5" fill="#ff80c0"/><rect x="1367.5" y="161" width="3.7" height="8.5" fill="#ff80c0"/><rect x="1374.8" y="161" width="3.7" height="8.5" fill="#ff80c0"/><rect x="1353" y="191.5" width="3.7" height="8" fill="#ff80c0"/><rect x="1360.3" y="191.5" width="3.7" height="8" fill="#ff80c0"/><rect x="1367.5" y="191.5" width="3.7" height="8" fill="#ff80c0"/><rect x="1374.8" y="191.5" width="3.7" height="8" fill="#ff80c0"/><path d="M1351.500 172H1377L1379.500 174.500V189.500H1351.500z" fill="none" stroke="#a8a8a8" stroke-width="1"/><circle cx="1381.5" cy="159.5" r="1.7" fill="none" stroke="#a8a8a8" stroke-width="1" shape-rendering="auto"/><rect x="1385" y="173" width="4" height="17" fill="#ff80c0"/><rect x="1386.5" y="176" width="1" height="1.5" fill="#e8e8f4"/><rect x="1386.5" y="185" width="1" height="1.5" fill="#e8e8f4"/><rect x="1374" y="204" width="9" height="3.5" fill="#ff80c0"/><rect x="1377.7" y="204.9" width="1.6" height="1.6" fill="#e8e8f4"/><circle cx="1393.5" cy="127" r="20" fill="none" stroke="#ff80c0" stroke-width="1" shape-rendering="auto"/><circle cx="1393.5" cy="127" r="9.2" fill="#ffff00" stroke="#ff80c0" stroke-width="1" shape-rendering="auto"/><rect x="1315.5" y="206" width="9.5" height="8" fill="#ff80c0"/><rect x="1319.5" y="207.5" width="1.5" height="1.5" fill="#e8e8f4"/><rect x="1142" y="221.5" width="4" height="3.5" fill="#ff80c0"/><rect x="1142" y="227.5" width="4" height="3.5" fill="#ff80c0"/><rect x="1142" y="234.5" width="4" height="3.5" fill="#ff80c0"/><rect x="1142" y="240.5" width="4" height="3.5" fill="#ff80c0"/><rect x="1142" y="246.5" width="4" height="3.5" fill="#ff80c0"/><rect x="1142" y="251.5" width="4" height="3.5" fill="#ff80c0"/><rect x="1171.5" y="222.5" width="4" height="8" fill="#ff80c0"/><rect x="1172.7" y="225.7" width="1.6" height="1.6" fill="#e8e8f4"/><rect x="1176.5" y="222.5" width="4" height="8" fill="#ff80c0"/><rect x="1177.7" y="225.7" width="1.6" height="1.6" fill="#e8e8f4"/><rect x="1181.5" y="222.5" width="4" height="8" fill="#ff80c0"/><rect x="1182.7" y="225.7" width="1.6" height="1.6" fill="#e8e8f4"/><rect x="1186.5" y="222.5" width="4" height="8" fill="#ff80c0"/><rect x="1187.7" y="225.7" width="1.6" height="1.6" fill="#e8e8f4"/><rect x="1335" y="223.5" width="57.5" height="185.5" fill="none" stroke="#ff80c0" stroke-width="1"/><circle cx="1356" cy="252.4" r="3.7" fill="#ffff00" stroke="#ff80c0" stroke-width="1" shape-rendering="auto"/><circle cx="1370.5" cy="252.4" r="3.7" fill="#ffff00" stroke="#ff80c0" stroke-width="1" shape-rendering="auto"/><circle cx="1356" cy="266.7" r="3.7" fill="#ffff00" stroke="#ff80c0" stroke-width="1" shape-rendering="auto"/><circle cx="1370.5" cy="266.7" r="3.7" fill="#ffff00" stroke="#ff80c0" stroke-width="1" shape-rendering="auto"/><circle cx="1356" cy="281" r="3.7" fill="#ffff00" stroke="#ff80c0" stroke-width="1" shape-rendering="auto"/><circle cx="1370.5" cy="281" r="3.7" fill="#ffff00" stroke="#ff80c0" stroke-width="1" shape-rendering="auto"/><circle cx="1356" cy="295.3" r="3.7" fill="#ffff00" stroke="#ff80c0" stroke-width="1" shape-rendering="auto"/><circle cx="1370.5" cy="295.3" r="3.7" fill="#ffff00" stroke="#ff80c0" stroke-width="1" shape-rendering="auto"/><circle cx="1356" cy="309.6" r="3.7" fill="#ffff00" stroke="#ff80c0" stroke-width="1" shape-rendering="auto"/><circle cx="1370.5" cy="309.6" r="3.7" fill="#ffff00" stroke="#ff80c0" stroke-width="1" shape-rendering="auto"/><circle cx="1356" cy="323.9" r="3.7" fill="#ffff00" stroke="#ff80c0" stroke-width="1" shape-rendering="auto"/><circle cx="1370.5" cy="323.9" r="3.7" fill="#ffff00" stroke="#ff80c0" stroke-width="1" shape-rendering="auto"/><circle cx="1356" cy="338.2" r="3.7" fill="#ffff00" stroke="#ff80c0" stroke-width="1" shape-rendering="auto"/><circle cx="1370.5" cy="338.2" r="3.7" fill="#ffff00" stroke="#ff80c0" stroke-width="1" shape-rendering="auto"/><circle cx="1356" cy="352.5" r="3.7" fill="#ffff00" stroke="#ff80c0" stroke-width="1" shape-rendering="auto"/><circle cx="1370.5" cy="352.5" r="3.7" fill="#ffff00" stroke="#ff80c0" stroke-width="1" shape-rendering="auto"/><circle cx="1356" cy="366.8" r="3.7" fill="#ffff00" stroke="#ff80c0" stroke-width="1" shape-rendering="auto"/><circle cx="1370.5" cy="366.8" r="3.7" fill="#ffff00" stroke="#ff80c0" stroke-width="1" shape-rendering="auto"/><circle cx="1356" cy="381.1" r="3.7" fill="#ffff00" stroke="#ff80c0" stroke-width="1" shape-rendering="auto"/><rect x="1366.8" y="377.4" width="7.4" height="7.4" fill="#ffff00" stroke="#ff80c0" stroke-width="1"/><rect x="1303" y="262" width="21.5" height="111.5" fill="none" stroke="#ff80c0" stroke-width="1"/><circle cx="1308.5" cy="267" r="3.4" fill="#ffff00" stroke="#ff80c0" stroke-width="1" shape-rendering="auto"/><circle cx="1319.5" cy="267" r="3.4" fill="#ffff00" stroke="#ff80c0" stroke-width="1" shape-rendering="auto"/><circle cx="1308.5" cy="278.3" r="3.4" fill="#ffff00" stroke="#ff80c0" stroke-width="1" shape-rendering="auto"/><circle cx="1319.5" cy="278.3" r="3.4" fill="#ffff00" stroke="#ff80c0" stroke-width="1" shape-rendering="auto"/><circle cx="1308.5" cy="289.6" r="3.4" fill="#ffff00" stroke="#ff80c0" stroke-width="1" shape-rendering="auto"/><circle cx="1319.5" cy="289.6" r="3.4" fill="#ffff00" stroke="#ff80c0" stroke-width="1" shape-rendering="auto"/><circle cx="1308.5" cy="300.9" r="3.4" fill="#ffff00" stroke="#ff80c0" stroke-width="1" shape-rendering="auto"/><circle cx="1319.5" cy="300.9" r="3.4" fill="#ffff00" stroke="#ff80c0" stroke-width="1" shape-rendering="auto"/><circle cx="1308.5" cy="312.2" r="3.4" fill="#ffff00" stroke="#ff80c0" stroke-width="1" shape-rendering="auto"/><circle cx="1319.5" cy="312.2" r="3.4" fill="#ffff00" stroke="#ff80c0" stroke-width="1" shape-rendering="auto"/><circle cx="1308.5" cy="323.5" r="3.4" fill="#ffff00" stroke="#ff80c0" stroke-width="1" shape-rendering="auto"/><circle cx="1319.5" cy="323.5" r="3.4" fill="#ffff00" stroke="#ff80c0" stroke-width="1" shape-rendering="auto"/><circle cx="1308.5" cy="334.8" r="3.4" fill="#ffff00" stroke="#ff80c0" stroke-width="1" shape-rendering="auto"/><circle cx="1319.5" cy="334.8" r="3.4" fill="#ffff00" stroke="#ff80c0" stroke-width="1" shape-rendering="auto"/><circle cx="1308.5" cy="346.1" r="3.4" fill="#ffff00" stroke="#ff80c0" stroke-width="1" shape-rendering="auto"/><circle cx="1319.5" cy="346.1" r="3.4" fill="#ffff00" stroke="#ff80c0" stroke-width="1" shape-rendering="auto"/><circle cx="1308.5" cy="357.4" r="3.4" fill="#ffff00" stroke="#ff80c0" stroke-width="1" shape-rendering="auto"/><circle cx="1319.5" cy="357.4" r="3.4" fill="#ffff00" stroke="#ff80c0" stroke-width="1" shape-rendering="auto"/><circle cx="1308.5" cy="368.7" r="3.4" fill="#ffff00" stroke="#ff80c0" stroke-width="1" shape-rendering="auto"/><circle cx="1319.5" cy="368.7" r="3.4" fill="#ffff00" stroke="#ff80c0" stroke-width="1" shape-rendering="auto"/><rect x="1278.5" y="275.5" width="7" height="3.5" fill="#ff80c0"/><rect x="1281.2" y="276.4" width="1.6" height="1.6" fill="#e8e8f4"/><rect x="1288.5" y="275.5" width="8" height="3.5" fill="#ff80c0"/><rect x="1291.7" y="276.4" width="1.6" height="1.6" fill="#e8e8f4"/><rect x="1278.5" y="281.1" width="7" height="3.5" fill="#ff80c0"/><rect x="1281.2" y="282.1" width="1.6" height="1.6" fill="#e8e8f4"/><rect x="1288.5" y="281.1" width="8" height="3.5" fill="#ff80c0"/><rect x="1291.7" y="282.1" width="1.6" height="1.6" fill="#e8e8f4"/><rect x="1278.5" y="286.8" width="7" height="3.5" fill="#ff80c0"/><rect x="1281.2" y="287.7" width="1.6" height="1.6" fill="#e8e8f4"/><rect x="1288.5" y="286.8" width="8" height="3.5" fill="#ff80c0"/><rect x="1291.7" y="287.7" width="1.6" height="1.6" fill="#e8e8f4"/><rect x="1278.5" y="292.4" width="7" height="3.5" fill="#ff80c0"/><rect x="1281.2" y="293.4" width="1.6" height="1.6" fill="#e8e8f4"/><rect x="1288.5" y="292.4" width="8" height="3.5" fill="#ff80c0"/><rect x="1291.7" y="293.4" width="1.6" height="1.6" fill="#e8e8f4"/><rect x="1278.5" y="298.1" width="7" height="3.5" fill="#ff80c0"/><rect x="1281.2" y="299" width="1.6" height="1.6" fill="#e8e8f4"/><rect x="1288.5" y="298.1" width="8" height="3.5" fill="#ff80c0"/><rect x="1291.7" y="299" width="1.6" height="1.6" fill="#e8e8f4"/><rect x="1278.5" y="303.7" width="7" height="3.5" fill="#ff80c0"/><rect x="1281.2" y="304.6" width="1.6" height="1.6" fill="#e8e8f4"/><rect x="1288.5" y="303.7" width="8" height="3.5" fill="#ff80c0"/><rect x="1291.7" y="304.6" width="1.6" height="1.6" fill="#e8e8f4"/><rect x="1278.5" y="309.3" width="7" height="3.5" fill="#ff80c0"/><rect x="1281.2" y="310.3" width="1.6" height="1.6" fill="#e8e8f4"/><rect x="1288.5" y="309.3" width="8" height="3.5" fill="#ff80c0"/><rect x="1291.7" y="310.3" width="1.6" height="1.6" fill="#e8e8f4"/><rect x="1278.5" y="315" width="7" height="3.5" fill="#ff80c0"/><rect x="1281.2" y="315.9" width="1.6" height="1.6" fill="#e8e8f4"/><rect x="1288.5" y="315" width="8" height="3.5" fill="#ff80c0"/><rect x="1291.7" y="315.9" width="1.6" height="1.6" fill="#e8e8f4"/><rect x="1278.5" y="320.6" width="7" height="3.5" fill="#ff80c0"/><rect x="1281.2" y="321.6" width="1.6" height="1.6" fill="#e8e8f4"/><rect x="1288.5" y="320.6" width="8" height="3.5" fill="#ff80c0"/><rect x="1291.7" y="321.6" width="1.6" height="1.6" fill="#e8e8f4"/><rect x="1278.5" y="326.3" width="7" height="3.5" fill="#ff80c0"/><rect x="1281.2" y="327.2" width="1.6" height="1.6" fill="#e8e8f4"/><rect x="1288.5" y="326.3" width="8" height="3.5" fill="#ff80c0"/><rect x="1291.7" y="327.2" width="1.6" height="1.6" fill="#e8e8f4"/><rect x="1278.5" y="331.9" width="7" height="3.5" fill="#ff80c0"/><rect x="1281.2" y="332.8" width="1.6" height="1.6" fill="#e8e8f4"/><rect x="1288.5" y="331.9" width="8" height="3.5" fill="#ff80c0"/><rect x="1291.7" y="332.8" width="1.6" height="1.6" fill="#e8e8f4"/><rect x="1278.5" y="337.5" width="7" height="3.5" fill="#ff80c0"/><rect x="1281.2" y="338.5" width="1.6" height="1.6" fill="#e8e8f4"/><rect x="1288.5" y="337.5" width="8" height="3.5" fill="#ff80c0"/><rect x="1291.7" y="338.5" width="1.6" height="1.6" fill="#e8e8f4"/><rect x="1278.5" y="343.2" width="7" height="3.5" fill="#ff80c0"/><rect x="1281.2" y="344.1" width="1.6" height="1.6" fill="#e8e8f4"/><rect x="1288.5" y="343.2" width="8" height="3.5" fill="#ff80c0"/><rect x="1291.7" y="344.1" width="1.6" height="1.6" fill="#e8e8f4"/><rect x="1278.5" y="348.8" width="7" height="3.5" fill="#ff80c0"/><rect x="1281.2" y="349.8" width="1.6" height="1.6" fill="#e8e8f4"/><rect x="1288.5" y="348.8" width="8" height="3.5" fill="#ff80c0"/><rect x="1291.7" y="349.8" width="1.6" height="1.6" fill="#e8e8f4"/><rect x="1278.5" y="360.1" width="7" height="3.5" fill="#ff80c0"/><rect x="1281.2" y="361.1" width="1.6" height="1.6" fill="#e8e8f4"/><rect x="1288.5" y="360.1" width="8" height="3.5" fill="#ff80c0"/><rect x="1291.7" y="361.1" width="1.6" height="1.6" fill="#e8e8f4"/><rect x="1278.5" y="365.7" width="7" height="3.5" fill="#ff80c0"/><rect x="1281.2" y="366.7" width="1.6" height="1.6" fill="#e8e8f4"/><rect x="1288.5" y="365.7" width="8" height="3.5" fill="#ff80c0"/><rect x="1291.7" y="366.7" width="1.6" height="1.6" fill="#e8e8f4"/><rect x="1278.5" y="371.4" width="7" height="3.5" fill="#ff80c0"/><rect x="1281.2" y="372.3" width="1.6" height="1.6" fill="#e8e8f4"/><rect x="1288.5" y="371.4" width="8" height="3.5" fill="#ff80c0"/><rect x="1291.7" y="372.3" width="1.6" height="1.6" fill="#e8e8f4"/><rect x="1257.5" y="280.3" width="17" height="3.5" fill="#ff80c0"/><rect x="1265.2" y="281.2" width="1.6" height="1.6" fill="#e8e8f4"/><rect x="1257.5" y="291.3" width="17" height="3.5" fill="#ff80c0"/><rect x="1265.2" y="292.2" width="1.6" height="1.6" fill="#e8e8f4"/><rect x="1257.5" y="352.5" width="6.5" height="3.3" fill="#ff80c0"/><rect x="1260" y="353.3" width="1.6" height="1.6" fill="#e8e8f4"/><rect x="1266" y="352.5" width="8" height="3.3" fill="#ff80c0"/><rect x="1269.2" y="353.3" width="1.6" height="1.6" fill="#e8e8f4"/><rect x="1142" y="281.5" width="10.5" height="9.5" fill="#ff80c0"/><rect x="1141.5" y="325" width="26" height="49" fill="none" stroke="#ff80c0" stroke-width="1"/><rect x="1142" y="325" width="15" height="12.5" fill="#ff80c0"/><rect x="1146.5" y="361" width="5" height="13" fill="#ff80c0"/><rect x="1159" y="361" width="6" height="13" fill="#ff80c0"/><rect x="1142" y="379.5" width="10.5" height="8.5" fill="#ff80c0"/><rect x="1158" y="379" width="15.5" height="9" fill="#ff80c0"/><rect x="1164" y="381.5" width="3" height="3.5" fill="#fff"/><rect x="1141.5" y="402.5" width="11" height="56.5" fill="none" stroke="#ff80c0" stroke-width="1"/><circle cx="1146" cy="410" r="3.7" fill="#ffff00" stroke="#ff80c0" stroke-width="1" shape-rendering="auto"/><circle cx="1146" cy="424" r="3.7" fill="#ffff00" stroke="#ff80c0" stroke-width="1" shape-rendering="auto"/><circle cx="1146" cy="438.5" r="3.7" fill="#ffff00" stroke="#ff80c0" stroke-width="1" shape-rendering="auto"/><circle cx="1146" cy="453" r="3.7" fill="#ffff00" stroke="#ff80c0" stroke-width="1" shape-rendering="auto"/><rect x="1155.4" y="422.5" width="4.8" height="7.6" rx="2" fill="#ff80c0"/><rect x="1157" y="425.5" width="1.6" height="1.6" fill="#e8e8f4"/><rect x="1155.4" y="437.5" width="4.8" height="7.6" rx="2" fill="#ff80c0"/><rect x="1157" y="440.5" width="1.6" height="1.6" fill="#e8e8f4"/><rect x="1176.2" y="421.4" width="15.8" height="12" fill="#ff80c0"/><rect x="1180" y="425.5" width="10" height="4.5" fill="#fff"/><rect x="1176.2" y="426" width="2.3" height="3" fill="#fff"/><rect x="1176.7" y="434.5" width="19.8" height="17" fill="none" stroke="#ff80c0" stroke-width="1"/><rect x="1177.2" y="435.3" width="5.6" height="3" fill="#ff80c0"/><rect x="1177.2" y="441.5" width="5.6" height="3" fill="#ff80c0"/><rect x="1177.2" y="447.7" width="5.6" height="3" fill="#ff80c0"/><rect x="1190.4" y="435.3" width="5.6" height="3" fill="#ff80c0"/><rect x="1190.4" y="441.5" width="5.6" height="3" fill="#ff80c0"/><rect x="1190.4" y="447.7" width="5.6" height="3" fill="#ff80c0"/><rect x="1183.8" y="435.5" width="5.6" height="15" fill="none" stroke="#a8a8a8" stroke-width="1"/><rect x="1191.5" y="416.5" width="8.5" height="3.5" fill="#ff80c0"/><rect x="1195" y="417.4" width="1.6" height="1.6" fill="#e8e8f4"/><rect x="1201.5" y="431" width="4.5" height="7" rx="1.5" fill="#ff80c0"/><rect x="1203" y="433.7" width="1.6" height="1.6" fill="#e8e8f4"/><rect x="1200" y="444" width="9.5" height="16" fill="#ff80c0"/><rect x="1203" y="450" width="3" height="3" fill="#fff"/><rect x="1211" y="445.5" width="4.5" height="7.5" rx="1.5" fill="#ff80c0"/><rect x="1212.5" y="448.4" width="1.6" height="1.6" fill="#e8e8f4"/><rect x="1213.5" y="459" width="8.5" height="16.5" fill="#ff80c0"/><rect x="1215.5" y="465" width="4.5" height="3.5" fill="#fff"/><rect x="1155.4" y="451.4" width="4.8" height="8" rx="2" fill="#ff80c0"/><rect x="1160" y="455.5" width="16.5" height="7.8" fill="#ff80c0"/><rect x="1167.5" y="458.6" width="1.6" height="1.6" fill="#e8e8f4"/><rect x="1177" y="459.4" width="4.5" height="7.8" fill="#ff80c0"/><rect x="1178.5" y="462.5" width="1.6" height="1.6" fill="#e8e8f4"/><rect x="1182.3" y="459.4" width="4.3" height="7.8" fill="#ff80c0"/><rect x="1183.6" y="462.5" width="1.6" height="1.6" fill="#e8e8f4"/><rect x="1164" y="446.4" width="8.5" height="3.3" fill="#ff80c0"/><rect x="1167.5" y="447.2" width="1.6" height="1.6" fill="#e8e8f4"/><rect x="1141.5" y="468.5" width="21" height="15" fill="none" stroke="#ff80c0" stroke-width="1"/><rect x="1154" y="470" width="7.5" height="10.5" fill="#ff80c0"/><rect x="1172" y="471.5" width="14" height="27.5" rx="1.5" fill="none" stroke="#ff80c0" stroke-width="1"/><rect x="1173" y="472" width="12" height="8.5" fill="#ff80c0"/><rect x="1173" y="488" width="12" height="10" fill="#ff80c0"/><rect x="1141" y="490.4" width="29" height="8.1" fill="#ff80c0"/><path d="M1142 494.500H1169" fill="none" stroke="#fff" stroke-width="1" stroke-dasharray="3 2"/><rect x="1189.7" y="462.8" width="19.8" height="16.7" fill="none" stroke="#ff80c0" stroke-width="1"/><rect x="1190.2" y="463.6" width="5.6" height="3" fill="#ff80c0"/><rect x="1190.2" y="469.6" width="5.6" height="3" fill="#ff80c0"/><rect x="1190.2" y="475.7" width="5.6" height="3" fill="#ff80c0"/><rect x="1203.4" y="463.6" width="5.6" height="3" fill="#ff80c0"/><rect x="1203.4" y="469.6" width="5.6" height="3" fill="#ff80c0"/><rect x="1203.4" y="475.7" width="5.6" height="3" fill="#ff80c0"/><rect x="1196.8" y="463.8" width="5.6" height="14.7" fill="none" stroke="#a8a8a8" stroke-width="1"/><rect x="1189.7" y="480.8" width="14.5" height="11.3" fill="none" stroke="#ff80c0" stroke-width="1"/><rect x="1190.2" y="481.6" width="4.2" height="2" fill="#ff80c0"/><rect x="1190.2" y="485.5" width="4.2" height="2" fill="#ff80c0"/><rect x="1190.2" y="489.3" width="4.2" height="2" fill="#ff80c0"/><rect x="1199.5" y="481.6" width="4.2" height="2" fill="#ff80c0"/><rect x="1199.5" y="485.5" width="4.2" height="2" fill="#ff80c0"/><rect x="1199.5" y="489.3" width="4.2" height="2" fill="#ff80c0"/><rect x="1195.4" y="481.8" width="3.1" height="9.3" fill="none" stroke="#a8a8a8" stroke-width="1"/><rect x="1208" y="483" width="5" height="9" rx="2" fill="#ff80c0"/><rect x="1209.7" y="486.7" width="1.6" height="1.6" fill="#e8e8f4"/><path d="M1141 503.500H1205.500L1208.500 506.500V661q0 6-6 6H1141" fill="none" stroke="#ff80c0" stroke-width="1"/><circle cx="1194.5" cy="517.5" r="7" fill="#ffff00" stroke="#ff80c0" stroke-width="1" shape-rendering="auto"/><circle cx="1194.5" cy="652.8" r="7" fill="#ffff00" stroke="#ff80c0" stroke-width="1" shape-rendering="auto"/><path d="M1146.8 547.5h1.500M1151.3 547.5h1.500M1155.8 547.5h1.500M1160.3 547.5h1.500M1164.8 547.5h1.500M1142.3 552h1.500M1146.8 552h1.500M1151.3 552h1.500M1155.8 552h1.500M1160.3 552h1.500M1164.8 552h1.500M1142.3 556.5h1.500M1146.8 556.5h1.500M1151.3 556.5h1.500M1155.8 556.5h1.500M1160.3 556.5h1.500M1164.8 556.5h1.500M1142.3 561.1h1.500M1146.8 561.1h1.500M1151.3 561.1h1.500M1155.8 561.1h1.500M1160.3 561.1h1.500M1142.3 565.6h1.500M1146.8 565.6h1.500M1151.3 565.6h1.500M1160.3 565.6h1.500M1164.8 565.6h1.500M1142.3 570.1h1.500M1151.3 570.1h1.500M1155.8 570.1h1.500M1160.3 570.1h1.500M1164.8 570.1h1.500M1142.3 574.6h1.500M1146.8 574.6h1.500M1151.3 574.6h1.500M1155.8 574.6h1.500M1160.3 574.6h1.500M1164.8 574.6h1.500M1142.3 579.1h1.500M1146.8 579.1h1.500M1151.3 579.1h1.500M1155.8 579.1h1.500M1160.3 579.1h1.500M1164.8 579.1h1.500M1142.3 583.7h1.500M1146.8 583.7h1.500M1151.3 583.7h1.500M1155.8 583.7h1.500M1160.3 583.7h1.500M1164.8 583.7h1.500M1142.3 588.2h1.500M1146.8 588.2h1.500M1151.3 588.2h1.500M1155.8 588.2h1.500M1164.8 588.2h1.500M1142.3 592.7h1.500M1146.8 592.7h1.500M1155.8 592.7h1.500M1160.3 592.7h1.500M1164.8 592.7h1.500M1146.8 597.2h1.500M1151.3 597.2h1.500M1155.8 597.2h1.500M1160.3 597.2h1.500M1164.8 597.2h1.500M1142.3 601.7h1.500M1146.8 601.7h1.500M1151.3 601.7h1.500M1155.8 601.7h1.500M1160.3 601.7h1.500M1164.8 601.7h1.500M1142.3 606.3h1.500M1146.8 606.3h1.500M1151.3 606.3h1.500M1155.8 606.3h1.500M1160.3 606.3h1.500M1164.8 606.3h1.500M1142.3 610.8h1.500M1146.8 610.8h1.500M1151.3 610.8h1.500M1155.8 610.8h1.500M1160.3 610.8h1.500M1142.3 615.3h1.500M1146.8 615.3h1.500M1151.3 615.3h1.500M1160.3 615.3h1.500M1164.8 615.3h1.500M1142.3 619.8h1.500M1151.3 619.8h1.500M1155.8 619.8h1.500M1160.3 619.8h1.500M1164.8 619.8h1.500M1142.3 624.3h1.500M1146.8 624.3h1.500M1151.3 624.3h1.500M1155.8 624.3h1.500M1160.3 624.3h1.500M1164.8 624.3h1.500" fill="none" stroke="#ff80c0" stroke-width="1.5"/><rect x="1217.5" y="535.3" width="8" height="3.5" fill="#ff80c0"/><rect x="1220.7" y="536.2" width="1.6" height="1.6" fill="#e8e8f4"/><rect x="1217.5" y="543.3" width="8" height="3.7" fill="#ff80c0"/><rect x="1220.7" y="544.4" width="1.6" height="1.6" fill="#e8e8f4"/><rect x="1211.5" y="557" width="7.5" height="3.5" fill="#ff80c0"/><rect x="1214.5" y="558" width="1.6" height="1.6" fill="#e8e8f4"/><rect x="1209" y="562.5" width="18" height="21.5" fill="#a8a8a8"/><rect x="1210" y="563.5" width="16" height="19.5" fill="#ff80c0"/><rect x="1216" y="564.5" width="4" height="17.5" fill="#fff"/><rect x="1211" y="571.8" width="14" height="3" fill="#fff"/><rect x="1198.5" y="567.5" width="8" height="9.5" fill="#ff80c0"/><rect x="1201" y="570" width="2" height="5" fill="#fff"/><rect x="1228" y="574.5" width="4" height="9" fill="#ff80c0"/><rect x="1214" y="600.5" width="8.5" height="9" rx="2.5" fill="#ff80c0"/><rect x="1217.5" y="604.2" width="1.6" height="1.6" fill="#e8e8f4"/><rect x="1277" y="389" width="13.5" height="57.5" fill="none" stroke="#ff80c0" stroke-width="1"/><circle cx="1283.5" cy="395.5" r="3.7" fill="#ffff00" stroke="#ff80c0" stroke-width="1" shape-rendering="auto"/><circle cx="1283.5" cy="410.3" r="3.7" fill="#ffff00" stroke="#ff80c0" stroke-width="1" shape-rendering="auto"/><circle cx="1283.5" cy="424.6" r="3.7" fill="#ffff00" stroke="#ff80c0" stroke-width="1" shape-rendering="auto"/><circle cx="1283.5" cy="439" r="3.7" fill="#ffff00" stroke="#ff80c0" stroke-width="1" shape-rendering="auto"/><rect x="1265" y="408.5" width="7.5" height="3.8" fill="#ff80c0"/><rect x="1268" y="409.6" width="1.6" height="1.6" fill="#e8e8f4"/><rect x="1259.3" y="417.8" width="3.7" height="7.5" fill="#ff80c0"/><rect x="1264.3" y="417.8" width="3.7" height="7.5" fill="#ff80c0"/><rect x="1254.8" y="425.3" width="4" height="8.7" fill="#ff80c0"/><rect x="1256" y="428.8" width="1.6" height="1.6" fill="#e8e8f4"/><rect x="1268.6" y="425.3" width="4" height="8.7" fill="#ff80c0"/><rect x="1269.8" y="428.8" width="1.6" height="1.6" fill="#e8e8f4"/><rect x="1254.8" y="434.6" width="7.8" height="3.8" fill="#ff80c0"/><rect x="1257.9" y="435.7" width="1.6" height="1.6" fill="#e8e8f4"/><rect x="1264.3" y="434.6" width="8.3" height="3.8" fill="#ff80c0"/><rect x="1267.6" y="435.7" width="1.6" height="1.6" fill="#e8e8f4"/><rect x="1317.5" y="449" width="8.5" height="3.5" fill="#ff80c0"/><rect x="1321" y="449.9" width="1.6" height="1.6" fill="#e8e8f4"/><rect x="1338.4" y="440.4" width="3.6" height="8" fill="#ff80c0"/><rect x="1339.4" y="443.6" width="1.6" height="1.6" fill="#e8e8f4"/><rect x="1343.4" y="444" width="3.4" height="8" fill="#ff80c0"/><rect x="1344.3" y="447.2" width="1.6" height="1.6" fill="#e8e8f4"/><rect x="1350" y="444" width="3.4" height="8" fill="#ff80c0"/><rect x="1350.9" y="447.2" width="1.6" height="1.6" fill="#e8e8f4"/><rect x="1364.7" y="444" width="8.3" height="3.5" fill="#ff80c0"/><rect x="1368" y="444.9" width="1.6" height="1.6" fill="#e8e8f4"/><rect x="1269" y="456" width="102.5" height="63.5" fill="none" stroke="#ff80c0" stroke-width="1"/><rect x="1271.5" y="457" width="3" height="12.5" fill="#ff80c0"/><rect x="1277.4" y="457" width="3" height="12.5" fill="#ff80c0"/><rect x="1283.3" y="457" width="3" height="12.5" fill="#ff80c0"/><rect x="1289.2" y="457" width="3" height="12.5" fill="#ff80c0"/><rect x="1295.1" y="457" width="3" height="12.5" fill="#ff80c0"/><rect x="1301" y="457" width="3" height="12.5" fill="#ff80c0"/><rect x="1306.9" y="457" width="3" height="12.5" fill="#ff80c0"/><rect x="1312.8" y="457" width="3" height="12.5" fill="#ff80c0"/><rect x="1318.8" y="457" width="3" height="12.5" fill="#ff80c0"/><rect x="1324.7" y="457" width="3" height="12.5" fill="#ff80c0"/><rect x="1330.6" y="457" width="3" height="12.5" fill="#ff80c0"/><rect x="1336.5" y="457" width="3" height="12.5" fill="#ff80c0"/><rect x="1342.4" y="457" width="3" height="12.5" fill="#ff80c0"/><rect x="1348.3" y="457" width="3" height="12.5" fill="#ff80c0"/><rect x="1354.2" y="457" width="3" height="12.5" fill="#ff80c0"/><rect x="1360.1" y="457" width="3" height="12.5" fill="#ff80c0"/><rect x="1366" y="457" width="3" height="12.5" fill="#ff80c0"/><rect x="1271.5" y="507.5" width="3" height="11" fill="#ff80c0"/><rect x="1277.4" y="507.5" width="3" height="11" fill="#ff80c0"/><rect x="1283.3" y="507.5" width="3" height="11" fill="#ff80c0"/><rect x="1289.2" y="507.5" width="3" height="11" fill="#ff80c0"/><rect x="1295.1" y="507.5" width="3" height="11" fill="#ff80c0"/><rect x="1301" y="507.5" width="3" height="11" fill="#ff80c0"/><rect x="1306.9" y="507.5" width="3" height="11" fill="#ff80c0"/><rect x="1312.8" y="507.5" width="3" height="11" fill="#ff80c0"/><rect x="1318.8" y="507.5" width="3" height="11" fill="#ff80c0"/><rect x="1324.7" y="507.5" width="3" height="11" fill="#ff80c0"/><rect x="1330.6" y="507.5" width="3" height="11" fill="#ff80c0"/><rect x="1336.5" y="507.5" width="3" height="11" fill="#ff80c0"/><rect x="1342.4" y="507.5" width="3" height="11" fill="#ff80c0"/><rect x="1348.3" y="507.5" width="3" height="11" fill="#ff80c0"/><rect x="1354.2" y="507.5" width="3" height="11" fill="#ff80c0"/><rect x="1360.1" y="507.5" width="3" height="11" fill="#ff80c0"/><rect x="1366" y="507.5" width="3" height="11" fill="#ff80c0"/><path d="M1269 469.500H1371.500M1371.500 505.500H1276L1269 499" fill="none" stroke="#a8a8a8" stroke-width="1"/><circle cx="1268.5" cy="517" r="1.5" fill="none" stroke="#a8a8a8" stroke-width="1" shape-rendering="auto"/><rect x="1377" y="439" width="14.5" height="142.5" fill="none" stroke="#ff80c0" stroke-width="1"/><circle cx="1384" cy="446" r="3.7" fill="#ffff00" stroke="#ff80c0" stroke-width="1" shape-rendering="auto"/><circle cx="1384" cy="460.3" r="3.7" fill="#ffff00" stroke="#ff80c0" stroke-width="1" shape-rendering="auto"/><circle cx="1384" cy="474.6" r="3.7" fill="#ffff00" stroke="#ff80c0" stroke-width="1" shape-rendering="auto"/><circle cx="1384" cy="488.9" r="3.7" fill="#ffff00" stroke="#ff80c0" stroke-width="1" shape-rendering="auto"/><circle cx="1384" cy="503.2" r="3.7" fill="#ffff00" stroke="#ff80c0" stroke-width="1" shape-rendering="auto"/><circle cx="1384" cy="517.5" r="3.7" fill="#ffff00" stroke="#ff80c0" stroke-width="1" shape-rendering="auto"/><circle cx="1384" cy="531.8" r="3.7" fill="#ffff00" stroke="#ff80c0" stroke-width="1" shape-rendering="auto"/><circle cx="1384" cy="546.1" r="3.7" fill="#ffff00" stroke="#ff80c0" stroke-width="1" shape-rendering="auto"/><circle cx="1384" cy="560.4" r="3.7" fill="#ffff00" stroke="#ff80c0" stroke-width="1" shape-rendering="auto"/><circle cx="1384" cy="574.7" r="3.7" fill="#ffff00" stroke="#ff80c0" stroke-width="1" shape-rendering="auto"/><rect x="1269.3" y="526" width="4" height="17" fill="#ff80c0"/><rect x="1270.8" y="538" width="1" height="2" fill="#e8e8f4"/><rect x="1276" y="526" width="4" height="17" fill="#ff80c0"/><rect x="1277.5" y="538" width="1" height="2" fill="#e8e8f4"/><rect x="1283" y="526" width="4" height="17" fill="#ff80c0"/><rect x="1284.5" y="538" width="1" height="2" fill="#e8e8f4"/><rect x="1288.7" y="526" width="4.3" height="8.5" rx="2" fill="#ff80c0"/><rect x="1290" y="529.5" width="1.6" height="1.6" fill="#e8e8f4"/><rect x="1302" y="525" width="9" height="3.7" fill="#ff80c0"/><rect x="1305.7" y="526.1" width="1.6" height="1.6" fill="#e8e8f4"/><rect x="1296.5" y="531" width="15.5" height="9" fill="#ff80c0"/><rect x="1301.2" y="532" width="6.2" height="7" fill="#fff"/><rect x="1314.5" y="525.7" width="4" height="8.3" rx="1.5" fill="#ff80c0"/><rect x="1315.7" y="529.1" width="1.6" height="1.6" fill="#e8e8f4"/><rect x="1321.5" y="525.7" width="4" height="8.3" rx="1.5" fill="#ff80c0"/><rect x="1322.7" y="529.1" width="1.6" height="1.6" fill="#e8e8f4"/><rect x="1328.5" y="525.7" width="4" height="8.3" rx="1.5" fill="#ff80c0"/><rect x="1329.7" y="529.1" width="1.6" height="1.6" fill="#e8e8f4"/><rect x="1336" y="525.5" width="31.5" height="20" fill="none" stroke="#ff80c0" stroke-width="1"/><rect x="1337.5" y="527" width="8.5" height="17.5" fill="#ff80c0"/><rect x="1339" y="528" width="5.5" height="4.5" fill="#fff"/><path d="M1339 532.500h5.500" fill="none" stroke="#a8a8a8" stroke-width="1"/><rect x="1347" y="527" width="8.5" height="17.5" fill="#ff80c0"/><rect x="1348.5" y="528" width="5.5" height="4.5" fill="#fff"/><path d="M1348.5 532.500h5.500" fill="none" stroke="#a8a8a8" stroke-width="1"/><rect x="1358" y="527" width="8.5" height="17.5" fill="#ff80c0"/><rect x="1359.5" y="528" width="5.5" height="4.5" fill="#fff"/><path d="M1359.5 532.500h5.500" fill="none" stroke="#a8a8a8" stroke-width="1"/><rect x="1364" y="573.4" width="9" height="3.4" fill="#ff80c0"/><rect x="1367.7" y="574.3" width="1.6" height="1.6" fill="#e8e8f4"/><rect x="1295.7" y="557" width="8.8" height="3.5" fill="#ff80c0"/><rect x="1299.3" y="558" width="1.6" height="1.6" fill="#e8e8f4"/><rect x="1266" y="563.5" width="67.5" height="116.5" fill="none" stroke="#ff80c0" stroke-width="1"/><rect x="1267" y="564" width="1.3" height="8" fill="#ff80c0"/><rect x="1269.3" y="564" width="1.3" height="8" fill="#ff80c0"/><rect x="1271.6" y="564" width="1.3" height="8" fill="#ff80c0"/><rect x="1273.9" y="564" width="1.3" height="8" fill="#ff80c0"/><rect x="1276.2" y="564" width="1.3" height="8" fill="#ff80c0"/><rect x="1278.6" y="564" width="1.3" height="8" fill="#ff80c0"/><rect x="1280.9" y="564" width="1.3" height="8" fill="#ff80c0"/><rect x="1283.2" y="564" width="1.3" height="8" fill="#ff80c0"/><rect x="1285.5" y="564" width="1.3" height="8" fill="#ff80c0"/><rect x="1287.8" y="564" width="1.3" height="8" fill="#ff80c0"/><rect x="1290.1" y="564" width="1.3" height="8" fill="#ff80c0"/><rect x="1292.4" y="564" width="1.3" height="8" fill="#ff80c0"/><rect x="1294.7" y="564" width="1.3" height="8" fill="#ff80c0"/><rect x="1297" y="564" width="1.3" height="8" fill="#ff80c0"/><rect x="1299.3" y="564" width="1.3" height="8" fill="#ff80c0"/><rect x="1301.7" y="564" width="1.3" height="8" fill="#ff80c0"/><rect x="1304" y="564" width="1.3" height="8" fill="#ff80c0"/><rect x="1306.3" y="564" width="1.3" height="8" fill="#ff80c0"/><rect x="1308.6" y="564" width="1.3" height="8" fill="#ff80c0"/><rect x="1310.9" y="564" width="1.3" height="8" fill="#ff80c0"/><rect x="1313.2" y="564" width="1.3" height="8" fill="#ff80c0"/><rect x="1315.5" y="564" width="1.3" height="8" fill="#ff80c0"/><rect x="1317.8" y="564" width="1.3" height="8" fill="#ff80c0"/><rect x="1320.1" y="564" width="1.3" height="8" fill="#ff80c0"/><rect x="1322.5" y="564" width="1.3" height="8" fill="#ff80c0"/><rect x="1324.8" y="564" width="1.3" height="8" fill="#ff80c0"/><rect x="1327.1" y="564" width="1.3" height="8" fill="#ff80c0"/><rect x="1329.4" y="564" width="1.3" height="8" fill="#ff80c0"/><rect x="1331.7" y="564" width="1.3" height="8" fill="#ff80c0"/><rect x="1267" y="671.5" width="1.3" height="8.5" fill="#ff80c0"/><rect x="1269.3" y="671.5" width="1.3" height="8.5" fill="#ff80c0"/><rect x="1271.6" y="671.5" width="1.3" height="8.5" fill="#ff80c0"/><rect x="1273.9" y="671.5" width="1.3" height="8.5" fill="#ff80c0"/><rect x="1276.2" y="671.5" width="1.3" height="8.5" fill="#ff80c0"/><rect x="1278.6" y="671.5" width="1.3" height="8.5" fill="#ff80c0"/><rect x="1280.9" y="671.5" width="1.3" height="8.5" fill="#ff80c0"/><rect x="1283.2" y="671.5" width="1.3" height="8.5" fill="#ff80c0"/><rect x="1285.5" y="671.5" width="1.3" height="8.5" fill="#ff80c0"/><rect x="1287.8" y="671.5" width="1.3" height="8.5" fill="#ff80c0"/><rect x="1290.1" y="671.5" width="1.3" height="8.5" fill="#ff80c0"/><rect x="1292.4" y="671.5" width="1.3" height="8.5" fill="#ff80c0"/><rect x="1294.7" y="671.5" width="1.3" height="8.5" fill="#ff80c0"/><rect x="1297" y="671.5" width="1.3" height="8.5" fill="#ff80c0"/><rect x="1299.3" y="671.5" width="1.3" height="8.5" fill="#ff80c0"/><rect x="1301.7" y="671.5" width="1.3" height="8.5" fill="#ff80c0"/><rect x="1304" y="671.5" width="1.3" height="8.5" fill="#ff80c0"/><rect x="1306.3" y="671.5" width="1.3" height="8.5" fill="#ff80c0"/><rect x="1308.6" y="671.5" width="1.3" height="8.5" fill="#ff80c0"/><rect x="1310.9" y="671.5" width="1.3" height="8.5" fill="#ff80c0"/><rect x="1313.2" y="671.5" width="1.3" height="8.5" fill="#ff80c0"/><rect x="1315.5" y="671.5" width="1.3" height="8.5" fill="#ff80c0"/><rect x="1317.8" y="671.5" width="1.3" height="8.5" fill="#ff80c0"/><rect x="1320.1" y="671.5" width="1.3" height="8.5" fill="#ff80c0"/><rect x="1322.5" y="671.5" width="1.3" height="8.5" fill="#ff80c0"/><rect x="1324.8" y="671.5" width="1.3" height="8.5" fill="#ff80c0"/><rect x="1327.1" y="671.5" width="1.3" height="8.5" fill="#ff80c0"/><rect x="1329.4" y="671.5" width="1.3" height="8.5" fill="#ff80c0"/><rect x="1331.7" y="671.5" width="1.3" height="8.5" fill="#ff80c0"/><path d="M1266 572.500H1333.500M1333.500 670.500H1272.500L1266 664" fill="none" stroke="#a8a8a8" stroke-width="1"/><rect x="1351" y="637.5" width="35.5" height="42.5" fill="none" stroke="#ff80c0" stroke-width="1"/><path d="M1358.500 638V680" fill="none" stroke="#a8a8a8" stroke-width="1"/><circle cx="1369" cy="644.7" r="3.5" fill="#ffff00" stroke="#ff80c0" stroke-width="1" shape-rendering="auto"/><circle cx="1369" cy="659" r="3.5" fill="#ffff00" stroke="#ff80c0" stroke-width="1" shape-rendering="auto"/><circle cx="1369" cy="673.6" r="3.5" fill="#ffff00" stroke="#ff80c0" stroke-width="1" shape-rendering="auto"/><rect x="1214" y="642.7" width="11.5" height="23.8" fill="#ff80c0"/><rect x="1216.5" y="650" width="6.5" height="9" fill="#fff"/><rect x="1244" y="661" width="7.5" height="3.5" rx="1" fill="#ff80c0"/><rect x="1247" y="662" width="1.6" height="1.6" fill="#e8e8f4"/><rect x="1254" y="661" width="8.5" height="3.5" rx="1" fill="#ff80c0"/><rect x="1257.5" y="662" width="1.6" height="1.6" fill="#e8e8f4"/><rect x="1244" y="667.3" width="7.5" height="3.5" rx="1" fill="#ff80c0"/><rect x="1247" y="668.2" width="1.6" height="1.6" fill="#e8e8f4"/><rect x="1254" y="667.3" width="8.5" height="3.5" rx="1" fill="#ff80c0"/><rect x="1257.5" y="668.2" width="1.6" height="1.6" fill="#e8e8f4"/><rect x="1244" y="673.6" width="7.5" height="3.5" rx="1" fill="#ff80c0"/><rect x="1247" y="674.6" width="1.6" height="1.6" fill="#e8e8f4"/><rect x="1254" y="673.6" width="8.5" height="3.5" rx="1" fill="#ff80c0"/><rect x="1257.5" y="674.6" width="1.6" height="1.6" fill="#e8e8f4"/><rect x="1244" y="679.9" width="7.5" height="3.5" rx="1" fill="#ff80c0"/><rect x="1247" y="680.9" width="1.6" height="1.6" fill="#e8e8f4"/><rect x="1254" y="679.9" width="8.5" height="3.5" rx="1" fill="#ff80c0"/><rect x="1257.5" y="680.9" width="1.6" height="1.6" fill="#e8e8f4"/><rect x="1203.6" y="672.3" width="11.9" height="6.2" fill="#ff80c0"/><rect x="1208.8" y="674.6" width="1.6" height="1.6" fill="#e8e8f4"/><rect x="1219.6" y="672.8" width="8.4" height="8.8" fill="#ff80c0"/><rect x="1223" y="676.4" width="1.6" height="1.6" fill="#e8e8f4"/><rect x="1192" y="674" width="3.3" height="9" fill="#ff80c0"/><rect x="1207" y="684" width="28" height="15" fill="none" stroke="#ff80c0" stroke-width="1"/><rect x="1207.5" y="684.5" width="8.7" height="14" fill="#ff80c0"/><rect x="1225.8" y="684.5" width="8.7" height="14" fill="#ff80c0"/><rect x="1207" y="702" width="28" height="15" fill="none" stroke="#ff80c0" stroke-width="1"/><rect x="1207.5" y="702.5" width="8.7" height="14" fill="#ff80c0"/><rect x="1225.8" y="702.5" width="8.7" height="14" fill="#ff80c0"/><rect x="1296.5" y="682.4" width="8" height="4.2" fill="#ff80c0"/><rect x="1299.7" y="683.7" width="1.6" height="1.6" fill="#e8e8f4"/><rect x="1320.8" y="682.4" width="7.5" height="4.2" fill="#ff80c0"/><rect x="1323.8" y="683.7" width="1.6" height="1.6" fill="#e8e8f4"/><rect x="1267.8" y="697.9" width="63.3" height="58.1" fill="none" stroke="#ff80c0" stroke-width="1"/><rect x="1268.6" y="699.7" width="11.4" height="3.5" fill="#ff80c0"/><rect x="1268.6" y="706.7" width="11.4" height="3.5" fill="#ff80c0"/><rect x="1268.6" y="713.8" width="11.4" height="3.5" fill="#ff80c0"/><rect x="1268.6" y="720.8" width="11.4" height="3.5" fill="#ff80c0"/><rect x="1268.6" y="727.9" width="11.4" height="3.5" fill="#ff80c0"/><rect x="1268.6" y="734.9" width="11.4" height="3.5" fill="#ff80c0"/><rect x="1268.6" y="742" width="11.4" height="3.5" fill="#ff80c0"/><rect x="1268.6" y="749" width="11.4" height="3.5" fill="#ff80c0"/><rect x="1319" y="699.7" width="12" height="3.5" fill="#ff80c0"/><rect x="1319" y="706.7" width="12" height="3.5" fill="#ff80c0"/><rect x="1319" y="713.8" width="12" height="3.5" fill="#ff80c0"/><rect x="1319" y="720.8" width="12" height="3.5" fill="#ff80c0"/><rect x="1319" y="727.9" width="12" height="3.5" fill="#ff80c0"/><rect x="1319" y="734.9" width="12" height="3.5" fill="#ff80c0"/><rect x="1319" y="742" width="12" height="3.5" fill="#ff80c0"/><rect x="1319" y="749" width="12" height="3.5" fill="#ff80c0"/><path d="M1281.500 698V756M1317.500 698V749L1311 756" fill="none" stroke="#a8a8a8" stroke-width="1"/><circle cx="1329" cy="756" r="1.7" fill="none" stroke="#a8a8a8" stroke-width="1" shape-rendering="auto"/><rect x="1336.4" y="714.2" width="3.6" height="7.6" fill="#ff80c0"/><rect x="1337.4" y="717.2" width="1.6" height="1.6" fill="#e8e8f4"/><rect x="1336.4" y="731.3" width="3.6" height="6.7" fill="#ff80c0"/><rect x="1337.4" y="733.9" width="1.6" height="1.6" fill="#e8e8f4"/><rect x="1334.6" y="742.4" width="8.4" height="3.6" fill="#ff80c0"/><rect x="1338" y="743.4" width="1.6" height="1.6" fill="#e8e8f4"/><rect x="1267.8" y="759.9" width="53.3" height="28.6" fill="none" stroke="#ff80c0" stroke-width="1"/><rect x="1268.6" y="761.5" width="12" height="2.6" fill="#ff80c0"/><rect x="1268.6" y="766.1" width="12" height="2.6" fill="#ff80c0"/><rect x="1268.6" y="770.7" width="12" height="2.6" fill="#ff80c0"/><rect x="1268.6" y="775.2" width="12" height="2.6" fill="#ff80c0"/><rect x="1268.6" y="779.8" width="12" height="2.6" fill="#ff80c0"/><rect x="1268.6" y="784.4" width="12" height="2.6" fill="#ff80c0"/><rect x="1308.3" y="761.5" width="12" height="2.6" fill="#ff80c0"/><rect x="1308.3" y="766.1" width="12" height="2.6" fill="#ff80c0"/><rect x="1308.3" y="770.7" width="12" height="2.6" fill="#ff80c0"/><rect x="1308.3" y="775.2" width="12" height="2.6" fill="#ff80c0"/><rect x="1308.3" y="779.8" width="12" height="2.6" fill="#ff80c0"/><rect x="1308.3" y="784.4" width="12" height="2.6" fill="#ff80c0"/><path d="M1281.500 760V788.500M1306.500 760V782L1301 788.500" fill="none" stroke="#a8a8a8" stroke-width="1"/><circle cx="1322" cy="789.5" r="1.7" fill="none" stroke="#a8a8a8" stroke-width="1" shape-rendering="auto"/><rect x="1325.8" y="763" width="8.2" height="3" fill="#ff80c0"/><rect x="1329.1" y="763.7" width="1.6" height="1.6" fill="#e8e8f4"/><rect x="1325.8" y="768" width="8.2" height="3" fill="#ff80c0"/><rect x="1329.1" y="768.7" width="1.6" height="1.6" fill="#e8e8f4"/><rect x="1338.9" y="766.2" width="15.3" height="27.1" fill="none" stroke="#ff80c0" stroke-width="1"/><rect x="1339.4" y="766.7" width="14.3" height="8.4" fill="#ff80c0"/><rect x="1339.4" y="784.4" width="14.3" height="8.4" fill="#ff80c0"/><rect x="1261.3" y="783" width="3.5" height="7.8" fill="#ff80c0"/><rect x="1262.2" y="786.1" width="1.6" height="1.6" fill="#e8e8f4"/><rect x="1267.8" y="792.1" width="53.3" height="33.9" fill="none" stroke="#ff80c0" stroke-width="1"/><rect x="1268.6" y="794" width="12" height="2.6" fill="#ff80c0"/><rect x="1268.6" y="798.6" width="12" height="2.6" fill="#ff80c0"/><rect x="1268.6" y="803.3" width="12" height="2.6" fill="#ff80c0"/><rect x="1268.6" y="808" width="12" height="2.6" fill="#ff80c0"/><rect x="1268.6" y="812.6" width="12" height="2.6" fill="#ff80c0"/><rect x="1268.6" y="817.2" width="12" height="2.6" fill="#ff80c0"/><rect x="1268.6" y="821.9" width="12" height="2.6" fill="#ff80c0"/><rect x="1308.3" y="794" width="12" height="2.6" fill="#ff80c0"/><rect x="1308.3" y="798.6" width="12" height="2.6" fill="#ff80c0"/><rect x="1308.3" y="803.3" width="12" height="2.6" fill="#ff80c0"/><rect x="1308.3" y="808" width="12" height="2.6" fill="#ff80c0"/><rect x="1308.3" y="812.6" width="12" height="2.6" fill="#ff80c0"/><rect x="1308.3" y="817.2" width="12" height="2.6" fill="#ff80c0"/><rect x="1308.3" y="821.9" width="12" height="2.6" fill="#ff80c0"/><path d="M1281.500 792V826M1306.500 792V826M1281.500 798.500L1288 792" fill="none" stroke="#a8a8a8" stroke-width="1"/><circle cx="1266.5" cy="793" r="1.7" fill="none" stroke="#a8a8a8" stroke-width="1" shape-rendering="auto"/><rect x="1325" y="805" width="3.3" height="8.4" fill="#ff80c0"/><rect x="1325.9" y="808.4" width="1.6" height="1.6" fill="#e8e8f4"/><rect x="1344" y="802" width="9" height="4" fill="#ff80c0"/><rect x="1347.7" y="803.2" width="1.6" height="1.6" fill="#e8e8f4"/><rect x="1243.5" y="811.6" width="6.5" height="11.8" rx="1.5" fill="#ff80c0"/><rect x="1246" y="816.7" width="1.6" height="1.6" fill="#e8e8f4"/><rect x="1210.4" y="820.9" width="27.6" height="15.1" fill="none" stroke="#ff80c0" stroke-width="1"/><rect x="1210.9" y="821.4" width="8.6" height="14.1" fill="#ff80c0"/><rect x="1228.9" y="821.4" width="8.6" height="14.1" fill="#ff80c0"/><rect x="1141.5" y="749.9" width="31.5" height="61.1" fill="none" stroke="#ff80c0" stroke-width="1"/><path d="M1143 752V809M1161.500 752V809M1166 752V809M1170.500 752V809" fill="none" stroke="#ff80c0" stroke-width="1" stroke-dasharray="1 2.500"/><rect x="1232.2" y="837.5" width="27.9" height="15.6" fill="none" stroke="#ff80c0" stroke-width="1"/><rect x="1232.7" y="838" width="8.7" height="14.6" fill="#ff80c0"/><rect x="1250.9" y="838" width="8.7" height="14.6" fill="#ff80c0"/><rect x="1293.5" y="837.5" width="28" height="15.6" fill="none" stroke="#ff80c0" stroke-width="1"/><rect x="1294" y="838" width="8.7" height="14.6" fill="#ff80c0"/><rect x="1312.3" y="838" width="8.7" height="14.6" fill="#ff80c0"/><rect x="1332.1" y="826.9" width="9" height="19.9" fill="none" stroke="#ff80c0" stroke-width="1"/><rect x="1332.6" y="827.4" width="8" height="6.3" fill="#ff80c0"/><rect x="1332.6" y="840" width="8" height="6.3" fill="#ff80c0"/><rect x="1324.6" y="831.5" width="5" height="12" fill="#ff80c0"/><rect x="1326.3" y="836.7" width="1.6" height="1.6" fill="#e8e8f4"/><rect x="1218" y="842.3" width="12.5" height="5.7" fill="#ff80c0"/><rect x="1223.5" y="844.4" width="1.6" height="1.6" fill="#e8e8f4"/><rect x="1189.5" y="848.5" width="15" height="19" fill="none" stroke="#ff80c0" stroke-width="1"/><rect x="1190.5" y="850" width="13" height="10" fill="#ff80c0"/><rect x="1150" y="844" width="6" height="12" fill="#ff80c0"/><rect x="1152.2" y="849.2" width="1.6" height="1.6" fill="#e8e8f4"/><rect x="1160" y="844" width="7" height="12" fill="#ff80c0"/><rect x="1162.7" y="849.2" width="1.6" height="1.6" fill="#e8e8f4"/><rect x="1141" y="837" width="6.5" height="15" fill="#ff80c0"/><rect x="713" y="875" width="82.5" height="55.5" fill="none" stroke="#ff80c0" stroke-width="1"/><path d="M713 925.500H795" fill="none" stroke="#a8a8a8" stroke-width="1"/><rect x="751.7" y="889.5" width="8.8" height="21.5" rx="4.4" fill="#ff80c0"/><rect x="785.8" y="888" width="8.2" height="24" rx="4.1" fill="#ff80c0"/><rect x="762" y="922" width="21" height="8" rx="4" fill="#ff80c0"/><rect x="779" y="868" width="5" height="3" rx="1.5" fill="#ff80c0"/><ellipse cx="806.8" cy="904" rx="6.500" ry="10" fill="none" stroke="#ff80c0"/><rect x="804" y="894.5" width="5.5" height="7.5" fill="#ff80c0"/><rect x="803.5" y="904" width="6.5" height="7.5" fill="none" stroke="#a8a8a8" stroke-width="1"/><rect x="804.5" y="905" width="4.5" height="5.5" fill="#ff80c0"/><rect x="804" y="915" width="5" height="7" fill="#ff80c0"/><rect x="805.7" y="917.7" width="1.6" height="1.6" fill="#e8e8f4"/><rect x="820.9" y="871.1" width="35.6" height="55.9" fill="none" stroke="#ff80c0" stroke-width="1"/><rect x="849.9" y="878" width="5.6" height="41.5" fill="none" stroke="#a8a8a8" stroke-width="1"/><rect x="865.5" y="871.1" width="14" height="55.9" fill="none" stroke="#ff80c0" stroke-width="1"/><circle cx="839" cy="878" r="3.7" fill="#ffff00" stroke="#ff80c0" stroke-width="1" shape-rendering="auto"/><circle cx="872.5" cy="878" r="3.7" fill="#ffff00" stroke="#ff80c0" stroke-width="1" shape-rendering="auto"/><circle cx="839" cy="892" r="3.7" fill="#ffff00" stroke="#ff80c0" stroke-width="1" shape-rendering="auto"/><circle cx="872.5" cy="892" r="3.7" fill="#ffff00" stroke="#ff80c0" stroke-width="1" shape-rendering="auto"/><circle cx="839" cy="906.7" r="3.7" fill="#ffff00" stroke="#ff80c0" stroke-width="1" shape-rendering="auto"/><circle cx="872.5" cy="906.7" r="3.7" fill="#ffff00" stroke="#ff80c0" stroke-width="1" shape-rendering="auto"/><circle cx="839" cy="920.6" r="3.7" fill="#ffff00" stroke="#ff80c0" stroke-width="1" shape-rendering="auto"/><circle cx="872.5" cy="920.6" r="3.7" fill="#ffff00" stroke="#ff80c0" stroke-width="1" shape-rendering="auto"/><rect x="808.8" y="935.9" width="89.4" height="60.1" fill="none" stroke="#ff80c0" stroke-width="1"/><rect x="826.6" y="942.5" width="8" height="8" fill="#ffff00" stroke="#ff80c0" stroke-width="1"/><circle cx="875.6" cy="946.5" r="4" fill="#ffff00" stroke="#ff80c0" stroke-width="1" shape-rendering="auto"/><circle cx="830.6" cy="985.8" r="4" fill="#ffff00" stroke="#ff80c0" stroke-width="1" shape-rendering="auto"/><circle cx="875.6" cy="985.8" r="4" fill="#ffff00" stroke="#ff80c0" stroke-width="1" shape-rendering="auto"/><circle cx="764.5" cy="982.5" r="20" fill="none" stroke="#ff80c0" stroke-width="1" shape-rendering="auto"/><circle cx="764.5" cy="982.5" r="9" fill="#ffff00" shape-rendering="auto"/><path d="M764.500 1000V947M757.500 954l7-7.500 7 7.500M744 982.500H801M792.500 975.500l8.500 7-8.500 7" fill="none" stroke="#ffff00" stroke-width="1.2"/><rect x="758" y="995" width="2" height="2" fill="#ff80c0"/><rect x="904" y="917.5" width="3.7" height="8" fill="#ff80c0"/><rect x="905.1" y="920.7" width="1.6" height="1.6" fill="#e8e8f4"/><rect x="901" y="929.6" width="10" height="15.4" rx="2" fill="#ff80c0"/><rect x="903.5" y="936" width="5" height="3.5" fill="#fff"/><rect x="914" y="906.1" width="48.2" height="36.6" fill="none" stroke="#ff80c0" stroke-width="1"/><rect x="914.6" y="916.5" width="12.4" height="17.5" fill="#ff80c0"/><rect x="949" y="909.8" width="13" height="4.5" fill="#ff80c0"/><rect x="949" y="922.5" width="13" height="4.5" fill="#ff80c0"/><rect x="949" y="935.1" width="13" height="4.5" fill="#ff80c0"/><path d="M927.500 906V943M947.500 906V943" fill="none" stroke="#a8a8a8" stroke-width="1"/><rect x="933.8" y="868.5" width="14.7" height="23.5" fill="none" stroke="#ff80c0" stroke-width="1"/><rect x="935" y="868" width="12" height="5" fill="#ff80c0"/><rect x="935" y="883" width="12" height="8" fill="#ff80c0"/><path d="M939 877h4M939 880h4" fill="none" stroke="#a8a8a8" stroke-width="1"/><rect x="952" y="868.5" width="15.2" height="23.5" fill="none" stroke="#ff80c0" stroke-width="1"/><rect x="953" y="868" width="13" height="5" fill="#ff80c0"/><rect x="953" y="883" width="13" height="8" fill="#ff80c0"/><path d="M957 877h4M957 880h4" fill="none" stroke="#a8a8a8" stroke-width="1"/><rect x="928.5" y="875.8" width="3.2" height="8.2" fill="#ff80c0"/><rect x="929.3" y="879.1" width="1.6" height="1.6" fill="#e8e8f4"/><rect x="970" y="876" width="3.3" height="8" fill="#ff80c0"/><rect x="970.9" y="879.2" width="1.6" height="1.6" fill="#e8e8f4"/><rect x="979" y="873.3" width="13.7" height="5.2" fill="#ff80c0"/><rect x="985.1" y="875.1" width="1.6" height="1.6" fill="#e8e8f4"/><path d="M1003 883.500H1008V878.500H1018V883.500H1023V895.500H1018V900.500H1008V895.500H1003z" fill="none" stroke="#ff80c0" stroke-width="1"/><rect x="1005" y="884.5" width="4.5" height="5" fill="#ff80c0"/><rect x="1016" y="884.5" width="5" height="5" fill="#ff80c0"/><rect x="1010.5" y="893.5" width="5" height="5.5" fill="#ff80c0"/><rect x="981.5" y="888" width="18" height="16.5" fill="none" stroke="#ff80c0" stroke-width="1"/><rect x="982" y="893" width="7" height="8" fill="#ff80c0"/><rect x="990.5" y="888.5" width="8.5" height="5" fill="#ff80c0"/><rect x="992" y="896" width="7" height="8" fill="#ff80c0"/><rect x="974.6" y="895.8" width="3.2" height="7.7" fill="#ff80c0"/><rect x="975.4" y="898.9" width="1.6" height="1.6" fill="#e8e8f4"/><rect x="1001.5" y="898" width="4" height="7" rx="1.5" fill="#ff80c0"/><rect x="1002.7" y="900.7" width="1.6" height="1.6" fill="#e8e8f4"/><rect x="972.8" y="906.8" width="42.3" height="31.2" fill="none" stroke="#ff80c0" stroke-width="1"/><rect x="974" y="910" width="9" height="3" fill="#ff80c0"/><rect x="974" y="916.5" width="9" height="3" fill="#ff80c0"/><rect x="974" y="923" width="9" height="3" fill="#ff80c0"/><rect x="974" y="929.5" width="9" height="3" fill="#ff80c0"/><rect x="1004.5" y="910" width="9" height="3" fill="#ff80c0"/><rect x="1004.5" y="916.5" width="9" height="3" fill="#ff80c0"/><rect x="1004.5" y="923" width="9" height="3" fill="#ff80c0"/><rect x="1004.5" y="929.5" width="9" height="3" fill="#ff80c0"/><rect x="984.9" y="908.8" width="17.3" height="27.2" rx="1.5" fill="none" stroke="#a8a8a8" stroke-width="1"/><rect x="979.5" y="941.5" width="15" height="8" fill="none" stroke="#ff80c0" stroke-width="1"/><rect x="980" y="942" width="4.5" height="7" fill="#ff80c0"/><rect x="989.5" y="942" width="4.5" height="7" fill="#ff80c0"/><rect x="999" y="941.5" width="15.1" height="8" fill="none" stroke="#ff80c0" stroke-width="1"/><rect x="999.5" y="942" width="4.5" height="7" fill="#ff80c0"/><rect x="1009.1" y="942" width="4.5" height="7" fill="#ff80c0"/><rect x="1017.2" y="904" width="9" height="20" fill="none" stroke="#ff80c0" stroke-width="1"/><rect x="1018" y="905.5" width="7.5" height="17" fill="#ff80c0"/><rect x="1020.5" y="912" width="2.5" height="3" fill="#404040"/><rect x="1029.8" y="909.8" width="3" height="7.2" fill="#ff80c0"/><rect x="1030.5" y="912.6" width="1.6" height="1.6" fill="#e8e8f4"/><rect x="1035.4" y="909.8" width="3.1" height="7.2" fill="#ff80c0"/><rect x="1036.2" y="912.6" width="1.6" height="1.6" fill="#e8e8f4"/><rect x="1011" y="879" width="3.5" height="8" fill="#ff80c0"/><rect x="1012" y="882.2" width="1.6" height="1.6" fill="#e8e8f4"/><rect x="1020.5" y="879" width="3.5" height="8" fill="#ff80c0"/><rect x="1021.5" y="882.2" width="1.6" height="1.6" fill="#e8e8f4"/><rect x="1029.5" y="879" width="3.5" height="8" fill="#ff80c0"/><rect x="1030.5" y="882.2" width="1.6" height="1.6" fill="#e8e8f4"/><rect x="1035" y="879" width="3.5" height="8" fill="#ff80c0"/><rect x="1036" y="882.2" width="1.6" height="1.6" fill="#e8e8f4"/><rect x="1029.8" y="925" width="7.7" height="3.5" fill="#ff80c0"/><rect x="1032.9" y="926" width="1.6" height="1.6" fill="#e8e8f4"/><rect x="1020.8" y="931" width="5.2" height="8.6" rx="2.5" fill="#ff80c0"/><rect x="1042.8" y="879" width="43.7" height="39.5" fill="none" stroke="#ff80c0" stroke-width="1"/><rect x="1042.3" y="892" width="8.5" height="12.5" fill="#ff80c0"/><rect x="1078.5" y="892" width="8.5" height="12.5" fill="#ff80c0"/><path d="M1045.8 890.5V881H1048.3M1045.8 907V916.5H1048.3M1083.5 890.5V881H1081M1083.5 907V916.5H1081" fill="none" stroke="#a8a8a8" stroke-width="1"/><rect x="1103" y="879" width="44.2" height="39.5" fill="none" stroke="#ff80c0" stroke-width="1"/><rect x="1102.5" y="892" width="8.5" height="12.5" fill="#ff80c0"/><rect x="1139.2" y="892" width="8.5" height="12.5" fill="#ff80c0"/><path d="M1106 890.5V881H1108.5M1106 907V916.5H1108.5M1144.2 890.5V881H1141.7M1144.2 907V916.5H1141.7" fill="none" stroke="#a8a8a8" stroke-width="1"/><rect x="1035.9" y="866.5" width="26.1" height="10.5" fill="none" stroke="#ff80c0" stroke-width="1"/><rect x="1036.4" y="867" width="8.1" height="9.5" fill="#ff80c0"/><rect x="1053.4" y="867" width="8.1" height="9.5" fill="#ff80c0"/><rect x="1064" y="866.5" width="27.5" height="10.5" fill="none" stroke="#ff80c0" stroke-width="1"/><rect x="1064.5" y="867" width="8.5" height="9.5" fill="#ff80c0"/><rect x="1082.5" y="867" width="8.5" height="9.5" fill="#ff80c0"/><rect x="1098.2" y="866.5" width="28.3" height="9.5" fill="none" stroke="#ff80c0" stroke-width="1"/><rect x="1098.7" y="867" width="8.8" height="8.5" fill="#ff80c0"/><rect x="1117.2" y="867" width="8.8" height="8.5" fill="#ff80c0"/><rect x="1132.5" y="860.5" width="24.5" height="16.5" fill="none" stroke="#a8a8a8" stroke-width="1"/><rect x="1133" y="861" width="8" height="15.5" fill="#ff80c0"/><rect x="1149.5" y="861" width="7" height="15.5" fill="#ff80c0"/><rect x="1044.8" y="921" width="24" height="10.7" fill="#ff80c0"/><rect x="1052" y="922" width="9.6" height="8.7" fill="#fff"/><rect x="1044.3" y="934.3" width="25" height="17.7" fill="none" stroke="#a8a8a8" stroke-width="1"/><rect x="1045" y="935" width="7" height="16.5" fill="#ff80c0"/><rect x="1061.5" y="935" width="7.5" height="16.5" fill="#ff80c0"/><rect x="1072.5" y="921.5" width="44.5" height="45.5" fill="none" stroke="#ff80c0" stroke-width="1"/><rect x="1073.5" y="922.3" width="1.8" height="9" fill="#ff80c0"/><rect x="1076.9" y="922.3" width="1.8" height="9" fill="#ff80c0"/><rect x="1080.3" y="922.3" width="1.8" height="9" fill="#ff80c0"/><rect x="1083.7" y="922.3" width="1.8" height="9" fill="#ff80c0"/><rect x="1087.1" y="922.3" width="1.8" height="9" fill="#ff80c0"/><rect x="1090.5" y="922.3" width="1.8" height="9" fill="#ff80c0"/><rect x="1093.8" y="922.3" width="1.8" height="9" fill="#ff80c0"/><rect x="1097.2" y="922.3" width="1.8" height="9" fill="#ff80c0"/><rect x="1100.6" y="922.3" width="1.8" height="9" fill="#ff80c0"/><rect x="1104" y="922.3" width="1.8" height="9" fill="#ff80c0"/><rect x="1107.4" y="922.3" width="1.8" height="9" fill="#ff80c0"/><rect x="1110.8" y="922.3" width="1.8" height="9" fill="#ff80c0"/><rect x="1114.2" y="922.3" width="1.8" height="9" fill="#ff80c0"/><rect x="1073.5" y="957.7" width="1.8" height="9.3" fill="#ff80c0"/><rect x="1076.9" y="957.7" width="1.8" height="9.3" fill="#ff80c0"/><rect x="1080.3" y="957.7" width="1.8" height="9.3" fill="#ff80c0"/><rect x="1083.7" y="957.7" width="1.8" height="9.3" fill="#ff80c0"/><rect x="1087.1" y="957.7" width="1.8" height="9.3" fill="#ff80c0"/><rect x="1090.5" y="957.7" width="1.8" height="9.3" fill="#ff80c0"/><rect x="1093.8" y="957.7" width="1.8" height="9.3" fill="#ff80c0"/><rect x="1097.2" y="957.7" width="1.8" height="9.3" fill="#ff80c0"/><rect x="1100.6" y="957.7" width="1.8" height="9.3" fill="#ff80c0"/><rect x="1104" y="957.7" width="1.8" height="9.3" fill="#ff80c0"/><rect x="1107.4" y="957.7" width="1.8" height="9.3" fill="#ff80c0"/><rect x="1110.8" y="957.7" width="1.8" height="9.3" fill="#ff80c0"/><rect x="1114.2" y="957.7" width="1.8" height="9.3" fill="#ff80c0"/><rect x="1086" y="937" width="17" height="15.5" fill="#ff80c0"/><rect x="1119" y="922" width="23.5" height="9.7" fill="#ff80c0"/><rect x="1126" y="923" width="9.4" height="7.7" fill="#fff"/><rect x="1119" y="933.2" width="24" height="16.8" fill="none" stroke="#a8a8a8" stroke-width="1"/><rect x="1119.5" y="934" width="6.5" height="15.5" fill="#ff80c0"/><rect x="1136" y="934" width="6.5" height="15.5" fill="#ff80c0"/><rect x="1152.3" y="910.2" width="11.7" height="6.5" fill="#ff80c0"/><rect x="1157.4" y="912.7" width="1.6" height="1.6" fill="#e8e8f4"/><rect x="1148.3" y="922" width="8.7" height="6.5" fill="#ff80c0"/><rect x="1151.9" y="924.5" width="1.6" height="1.6" fill="#e8e8f4"/><rect x="1159" y="921.5" width="4.3" height="7.5" fill="#ff80c0"/><rect x="1160.4" y="924.5" width="1.6" height="1.6" fill="#e8e8f4"/><rect x="1164.4" y="921.5" width="3.6" height="7.5" fill="#ff80c0"/><rect x="1165.4" y="924.5" width="1.6" height="1.6" fill="#e8e8f4"/><rect x="1148.3" y="939" width="7.7" height="5" fill="#ff80c0"/><rect x="1151.4" y="940.7" width="1.6" height="1.6" fill="#e8e8f4"/><rect x="1120" y="960.4" width="9" height="4.2" fill="#ff80c0"/><rect x="1123.7" y="961.7" width="1.6" height="1.6" fill="#e8e8f4"/><path d="M1026 965.500H1032V961H1041V965.500H1047V977.500H1041V982H1032V977.500H1026z" fill="none" stroke="#ff80c0" stroke-width="1"/><rect x="1034" y="962" width="5" height="5" fill="#ff80c0"/><rect x="1028" y="975" width="5" height="5.5" fill="#ff80c0"/><rect x="1040" y="975" width="5.5" height="5.5" fill="#ff80c0"/><rect x="1015.6" y="963" width="4.2" height="10.3" fill="#ff80c0"/><rect x="1016.9" y="967.4" width="1.6" height="1.6" fill="#e8e8f4"/><rect x="1015.6" y="975.4" width="8.4" height="4.2" fill="#ff80c0"/><rect x="1019" y="976.7" width="1.6" height="1.6" fill="#e8e8f4"/><rect x="1048.3" y="958" width="6.7" height="4" fill="#ff80c0"/><rect x="1050.9" y="959.2" width="1.6" height="1.6" fill="#e8e8f4"/><rect x="1049" y="964" width="10" height="16" rx="2.5" fill="#ff80c0"/><rect x="1051.5" y="970" width="5" height="4" fill="#fff"/><rect x="1063.5" y="965" width="3.2" height="8.5" fill="#ff80c0"/><rect x="1064.3" y="968.5" width="1.6" height="1.6" fill="#e8e8f4"/><rect x="1068.8" y="965" width="3.2" height="8.5" fill="#ff80c0"/><rect x="1069.6" y="968.5" width="1.6" height="1.6" fill="#e8e8f4"/><rect x="1063.5" y="974.5" width="3.2" height="7" fill="#ff80c0"/><rect x="1064.3" y="977.2" width="1.6" height="1.6" fill="#e8e8f4"/><rect x="1068.8" y="976.5" width="3.2" height="9.5" fill="#ff80c0"/><rect x="1069.6" y="980.5" width="1.6" height="1.6" fill="#e8e8f4"/><rect x="1073.5" y="975.4" width="3.5" height="5.2" fill="#ff80c0"/><rect x="1074.5" y="977.2" width="1.6" height="1.6" fill="#e8e8f4"/><rect x="1078" y="975.4" width="8.5" height="5.2" fill="#ff80c0"/><rect x="1081.5" y="977.2" width="1.6" height="1.6" fill="#e8e8f4"/><rect x="1078" y="985.8" width="8.5" height="4.2" fill="#ff80c0"/><rect x="1081.5" y="987.1" width="1.6" height="1.6" fill="#e8e8f4"/><rect x="1088" y="971" width="9.5" height="16.5" rx="2.5" fill="#ff80c0"/><rect x="1090.5" y="977" width="4.5" height="4" fill="#fff"/><rect x="1099" y="977" width="3.5" height="8.5" fill="#ff80c0"/><rect x="1100" y="980.5" width="1.6" height="1.6" fill="#e8e8f4"/><rect x="1104" y="977" width="3.5" height="8.5" fill="#ff80c0"/><rect x="1105" y="980.5" width="1.6" height="1.6" fill="#e8e8f4"/><rect x="1109" y="971.7" width="7.5" height="3.5" fill="#ff80c0"/><rect x="1112" y="972.7" width="1.6" height="1.6" fill="#e8e8f4"/><rect x="1109" y="977" width="7.5" height="3.5" fill="#ff80c0"/><rect x="1112" y="978" width="1.6" height="1.6" fill="#e8e8f4"/><rect x="1109" y="985.8" width="7.5" height="3.5" fill="#ff80c0"/><rect x="1112" y="986.8" width="1.6" height="1.6" fill="#e8e8f4"/><rect x="1189.9" y="848.8" width="15.2" height="27.2" fill="none" stroke="#ff80c0" stroke-width="1"/><rect x="1190.4" y="849.3" width="14.2" height="8.5" fill="#ff80c0"/><rect x="1190.4" y="867" width="14.2" height="8.5" fill="#ff80c0"/><rect x="1212.3" y="847.7" width="4.7" height="7.9" rx="2" fill="#ff80c0"/><rect x="1213.9" y="850.9" width="1.6" height="1.6" fill="#e8e8f4"/><rect x="1232.5" y="840.5" width="27" height="12.5" fill="none" stroke="#ff80c0" stroke-width="1"/><rect x="1233" y="841" width="8.4" height="11.5" fill="#ff80c0"/><rect x="1250.6" y="841" width="8.4" height="11.5" fill="#ff80c0"/><rect x="1234" y="854.5" width="25.1" height="16" fill="none" stroke="#a8a8a8" stroke-width="1"/><rect x="1234.5" y="855" width="7" height="15" fill="#ff80c0"/><rect x="1252" y="855" width="6.6" height="15" fill="#ff80c0"/><rect x="1295.1" y="855.1" width="25" height="15.4" fill="none" stroke="#a8a8a8" stroke-width="1"/><rect x="1295.6" y="855.6" width="6.9" height="14.4" fill="#ff80c0"/><rect x="1313" y="855.6" width="6.6" height="14.4" fill="#ff80c0"/><rect x="1222.2" y="879" width="43.8" height="39.5" fill="none" stroke="#ff80c0" stroke-width="1"/><rect x="1221.7" y="892" width="8.5" height="12.5" fill="#ff80c0"/><rect x="1258" y="892" width="8.5" height="12.5" fill="#ff80c0"/><path d="M1225.2 890.5V881H1227.7M1225.2 907V916.5H1227.7M1263 890.5V881H1260.5M1263 907V916.5H1260.5" fill="none" stroke="#a8a8a8" stroke-width="1"/><rect x="1284" y="879.5" width="43" height="39.5" fill="none" stroke="#ff80c0" stroke-width="1"/><rect x="1283.5" y="892.5" width="8.5" height="12.5" fill="#ff80c0"/><rect x="1319" y="892.5" width="8.5" height="12.5" fill="#ff80c0"/><path d="M1287 891V881.5H1289.5M1287 907.5V917H1289.5M1324 891V881.5H1321.5M1324 907.5V917H1321.5" fill="none" stroke="#a8a8a8" stroke-width="1"/><rect x="1330" y="910.8" width="4.6" height="8" fill="#ff80c0"/><rect x="1331.5" y="914" width="1.6" height="1.6" fill="#e8e8f4"/><rect x="1336.7" y="910.8" width="4.3" height="8" fill="#ff80c0"/><rect x="1338" y="914" width="1.6" height="1.6" fill="#e8e8f4"/><rect x="1187" y="899.4" width="8.6" height="4.1" rx="2" fill="#ff80c0"/><rect x="1190.5" y="900.7" width="1.6" height="1.6" fill="#e8e8f4"/><circle cx="1191" cy="928.5" r="22" fill="none" stroke="#ff80c0" stroke-width="1" shape-rendering="auto"/><circle cx="1181.5" cy="929" r="3.5" fill="#ffff00" stroke="#ff80c0" stroke-width="1" shape-rendering="auto"/><circle cx="1200.8" cy="929" r="3.5" fill="#ffff00" stroke="#ff80c0" stroke-width="1" shape-rendering="auto"/><rect x="1210" y="907" width="4.4" height="8.4" fill="#ff80c0"/><rect x="1211.4" y="910.4" width="1.6" height="1.6" fill="#e8e8f4"/><rect x="1215.4" y="907" width="4.6" height="8.4" fill="#ff80c0"/><rect x="1216.9" y="910.4" width="1.6" height="1.6" fill="#e8e8f4"/><rect x="1225" y="922.3" width="25" height="10.4" fill="#ff80c0"/><rect x="1232.5" y="923.3" width="10" height="8.4" fill="#fff"/><rect x="1224.9" y="933.5" width="25" height="16.5" fill="none" stroke="#a8a8a8" stroke-width="1"/><rect x="1225.4" y="934" width="7.1" height="15.5" fill="#ff80c0"/><rect x="1243" y="934" width="6.4" height="15.5" fill="#ff80c0"/><rect x="1215.4" y="934" width="8.6" height="3.5" fill="#ff80c0"/><rect x="1218.9" y="935" width="1.6" height="1.6" fill="#e8e8f4"/><rect x="1253" y="921.5" width="44.2" height="45.5" fill="none" stroke="#ff80c0" stroke-width="1"/><rect x="1254" y="922.3" width="2" height="8.7" fill="#ff80c0"/><rect x="1257.7" y="922.3" width="2" height="8.7" fill="#ff80c0"/><rect x="1261.3" y="922.3" width="2" height="8.7" fill="#ff80c0"/><rect x="1265" y="922.3" width="2" height="8.7" fill="#ff80c0"/><rect x="1268.6" y="922.3" width="2" height="8.7" fill="#ff80c0"/><rect x="1272.3" y="922.3" width="2" height="8.7" fill="#ff80c0"/><rect x="1275.9" y="922.3" width="2" height="8.7" fill="#ff80c0"/><rect x="1279.6" y="922.3" width="2" height="8.7" fill="#ff80c0"/><rect x="1283.2" y="922.3" width="2" height="8.7" fill="#ff80c0"/><rect x="1286.9" y="922.3" width="2" height="8.7" fill="#ff80c0"/><rect x="1290.5" y="922.3" width="2" height="8.7" fill="#ff80c0"/><rect x="1294.2" y="922.3" width="2" height="8.7" fill="#ff80c0"/><rect x="1254" y="957.5" width="2" height="9" fill="#ff80c0"/><rect x="1257.7" y="957.5" width="2" height="9" fill="#ff80c0"/><rect x="1261.3" y="957.5" width="2" height="9" fill="#ff80c0"/><rect x="1265" y="957.5" width="2" height="9" fill="#ff80c0"/><rect x="1268.6" y="957.5" width="2" height="9" fill="#ff80c0"/><rect x="1272.3" y="957.5" width="2" height="9" fill="#ff80c0"/><rect x="1275.9" y="957.5" width="2" height="9" fill="#ff80c0"/><rect x="1279.6" y="957.5" width="2" height="9" fill="#ff80c0"/><rect x="1283.2" y="957.5" width="2" height="9" fill="#ff80c0"/><rect x="1286.9" y="957.5" width="2" height="9" fill="#ff80c0"/><rect x="1290.5" y="957.5" width="2" height="9" fill="#ff80c0"/><rect x="1294.2" y="957.5" width="2" height="9" fill="#ff80c0"/><rect x="1267.5" y="937.3" width="16.3" height="14.7" fill="#ff80c0"/><rect x="1301.5" y="922.3" width="23.5" height="10.4" fill="#ff80c0"/><rect x="1308.5" y="923.3" width="9.4" height="8.4" fill="#fff"/><rect x="1300.9" y="933.5" width="25.1" height="16.5" fill="none" stroke="#a8a8a8" stroke-width="1"/><rect x="1301.4" y="934" width="6.6" height="15.5" fill="#ff80c0"/><rect x="1319.5" y="934" width="6" height="15.5" fill="#ff80c0"/><rect x="1329.4" y="940" width="7.6" height="3.5" fill="#ff80c0"/><rect x="1332.4" y="941" width="1.6" height="1.6" fill="#e8e8f4"/><rect x="1241.5" y="960" width="8.5" height="4.6" rx="2" fill="#ff80c0"/><rect x="1245" y="961.5" width="1.6" height="1.6" fill="#e8e8f4"/><rect x="1300.8" y="960" width="8.2" height="4.6" rx="2" fill="#ff80c0"/><rect x="1304.1" y="961.5" width="1.6" height="1.6" fill="#e8e8f4"/><rect x="1247.3" y="969.6" width="8.3" height="3.7" fill="#ff80c0"/><rect x="1250.6" y="970.7" width="1.6" height="1.6" fill="#e8e8f4"/><rect x="1295" y="969.6" width="8.5" height="3.7" fill="#ff80c0"/><rect x="1298.5" y="970.7" width="1.6" height="1.6" fill="#e8e8f4"/><rect x="1258" y="974.4" width="8" height="8.3" fill="#ff80c0"/><rect x="1261.2" y="977.8" width="1.6" height="1.6" fill="#e8e8f4"/><rect x="1269" y="971" width="9" height="16" rx="2" fill="#ff80c0"/><rect x="1271.5" y="976" width="4" height="6" fill="#fff"/><rect x="1280" y="974" width="4" height="8" fill="#ff80c0"/><rect x="1281.2" y="977.2" width="1.6" height="1.6" fill="#e8e8f4"/><rect x="1285" y="974" width="8.5" height="8" fill="#ff80c0"/><rect x="1288.5" y="977.2" width="1.6" height="1.6" fill="#e8e8f4"/><rect x="1250.8" y="979" width="3.8" height="8.5" fill="#ff80c0"/><rect x="1251.9" y="982.5" width="1.6" height="1.6" fill="#e8e8f4"/><rect x="1297" y="979" width="3.5" height="8" fill="#ff80c0"/><rect x="1298" y="982.2" width="1.6" height="1.6" fill="#e8e8f4"/><circle cx="1393" cy="987" r="20" fill="none" stroke="#ff80c0" stroke-width="1" shape-rendering="auto"/><circle cx="1393" cy="987" r="9.2" fill="#ffff00" stroke="#ff80c0" stroke-width="1" shape-rendering="auto"/></svg>
<div style="left:257px;top:202px;width:885px;height:666px;background:#f0f0f0;border:1px solid #707070"></div>
<div style="left:258px;top:203px;width:883px;height:30px;background:#fff"></div>
<svg style="left:266px;top:208px" width="17" height="17" viewBox="0 0 17 17"><rect x="1" y="3" width="5" height="5" fill="#e01010" stroke="#000" stroke-width=".8"/><circle cx="3.500" cy="13" r="2.500" fill="#f0e020" stroke="#000" stroke-width=".8"/><path d="M11 0l2.500 3.500h-5z" fill="#1020c0"/><path d="M8.500 4.500h5l2 2v9h-7z" fill="#fff" stroke="#000" stroke-width="1"/><path d="M10 8h4M10 10.500h4M10 13h3" stroke="#000" stroke-width=".8"/></svg>
<span class="ya" style="left:287px;top:210px;font-size:12px;letter-spacing:.35px">参数设置 (Mode:料号)</span>
<svg style="left:1004px;top:203px" width="137" height="30" viewBox="0 0 137 30"><path d="M18 14.500h10" stroke="#000" stroke-width="1"/><rect x="63.500" y="9.500" width="9" height="9" fill="none" stroke="#000" stroke-width="1"/><path d="M109 9l10 10M119 9l-10 10" stroke="#000" stroke-width="1.100"/></svg>
<span class="ya" style="left:264px;top:234px;">文件</span>
<span class="ya" style="left:302px;top:234px;">模式</span>
<span class="ya" style="left:340px;top:234px;">图形编辑</span>
<span class="ya" style="left:402px;top:234px;">自动获取</span>
<span class="ya" style="left:464px;top:234px;">自动检查</span>
<div style="left:262px;top:259px;width:874px;height:27px;background:#f0f0f0;border:1px solid;border-color:#a0a0a0 #fff #a0a0a0 #a0a0a0"></div>
<div style="left:263px;top:260px;width:872px;height:1px;background:#fff"></div>
<div style="left:342px;top:262px;width:1px;height:21px;background:#a0a0a0"></div>
<div style="left:343px;top:262px;width:1px;height:21px;background:#fff"></div>
<div style="left:400px;top:262px;width:1px;height:21px;background:#a0a0a0"></div>
<div style="left:401px;top:262px;width:1px;height:21px;background:#fff"></div>
<div style="left:433px;top:262px;width:1px;height:21px;background:#a0a0a0"></div>
<div style="left:434px;top:262px;width:1px;height:21px;background:#fff"></div>
<div style="left:491px;top:262px;width:1px;height:21px;background:#a0a0a0"></div>
<div style="left:492px;top:262px;width:1px;height:21px;background:#fff"></div>
<div style="left:524px;top:262px;width:1px;height:21px;background:#a0a0a0"></div>
<div style="left:525px;top:262px;width:1px;height:21px;background:#fff"></div>
<div style="left:557px;top:262px;width:1px;height:21px;background:#a0a0a0"></div>
<div style="left:558px;top:262px;width:1px;height:21px;background:#fff"></div>
<svg style="left:267px;top:264px" width="16" height="16" viewBox="0 0 16 16"><path d="M1 3v10c0 1.300 1.500 2 3.500 2s3.500-.7 3.500-2V3z" fill="#e8e060" stroke="#8c8430" stroke-width=".8"/><ellipse cx="4.5" cy="3" rx="3.500" ry="1.600" fill="#f8f4a0" stroke="#8c8430" stroke-width=".8"/><path d="M3 5v9M5.5 5v9" stroke="#fffbd0" stroke-width=".9"/><circle cx="10.500" cy="8" r="3.600" fill="#e4f2fc" stroke="#98a8c0" stroke-width="1"/><path d="M8 11l-3 3.500" stroke="#c89048" stroke-width="1.800"/></svg>
<svg style="left:292px;top:264px" width="16" height="16" viewBox="0 0 16 16"><circle cx="6.500" cy="6" r="4.800" fill="#d8f0f8" stroke="#404040" stroke-width="1.300"/><path d="M10 9.500l4.500 5" stroke="#1c2a90" stroke-width="2.400" stroke-linecap="round"/></svg>
<svg style="left:318px;top:264px" width="16" height="16" viewBox="0 0 16 16"><path d="M4.5 3v10c0 1.300 1.500 2 3.500 2s3.500-.7 3.500-2V3z" fill="#e8e060" stroke="#8c8430" stroke-width=".8"/><ellipse cx="8.0" cy="3" rx="3.500" ry="1.600" fill="#f8f4a0" stroke="#8c8430" stroke-width=".8"/><path d="M6.5 5v9M9.0 5v9" stroke="#fffbd0" stroke-width=".9"/></svg>
<svg style="left:350px;top:264px" width="16" height="16" viewBox="0 0 16 16"><path d="M1 10l7-3.500 7 3.500-7 3.500z" fill="#e8c020" stroke="#000" stroke-width=".6"/><path d="M1 8l7-3.500 7 3.500-7 3.500z" fill="#e02060" stroke="#000" stroke-width=".6"/><path d="M2 6.500l6-3 6 3-6 3z" fill="#181850" stroke="#000" stroke-width=".6"/><path d="M5 6l3-1.500 3 1.500-3 1.500z" fill="#40e0e0"/></svg>
<svg style="left:376px;top:264px" width="16" height="16" viewBox="0 0 16 16"><rect x=".8" y="4.500" width="10" height="7" fill="#fff" stroke="#1c38b0" stroke-width="1.200"/><path d="M2.500 10V6.500h2V10M2.500 8.500h2M6 6.500h2v1.700H6zM6 8.200h2.300V10H6z" fill="none" stroke="#7080c0" stroke-width=".8"/><path d="M10 1.500h5M10 14.500h5M12.500 1.500v13" stroke="#000" stroke-width="1.200"/><path d="M11.700 3v10" stroke="#e8d840" stroke-width="1"/></svg>
<svg style="left:409px;top:264px" width="16" height="16" viewBox="0 0 16 16"><path d="M1 9l2.500-2 2.500 3.500L13 1l2.500 1.500L7 15 4.500 15z" fill="#10b880" stroke="#086848" stroke-width=".7"/></svg>
<svg style="left:442px;top:264px" width="16" height="16" viewBox="0 0 16 16"><path d="M1 3v10c0 1.300 1.500 2 3.500 2s3.500-.7 3.500-2V3z" fill="#e8e060" stroke="#8c8430" stroke-width=".8"/><ellipse cx="4.5" cy="3" rx="3.500" ry="1.600" fill="#f8f4a0" stroke="#8c8430" stroke-width=".8"/><path d="M3 5v9M5.5 5v9" stroke="#fffbd0" stroke-width=".9"/><rect x="7" y="7.500" width="8" height="8" fill="#1c48c8"/><rect x="8.800" y="8" width="4.500" height="3" fill="#fff"/><rect x="9.500" y="12.500" width="3" height="3" fill="#c8d8f8"/></svg>
<svg style="left:468px;top:264px" width="16" height="16" viewBox="0 0 16 16"><path d="M3 3v10c0 1.300 1.500 2 3.500 2s3.500-.7 3.500-2V3z" fill="#e8e060" stroke="#8c8430" stroke-width=".8"/><ellipse cx="6.5" cy="3" rx="3.500" ry="1.600" fill="#f8f4a0" stroke="#8c8430" stroke-width=".8"/><path d="M5 5v9M7.5 5v9" stroke="#fffbd0" stroke-width=".9"/><rect x="3" y="10" width="11" height="5" rx="1" fill="#b8b8b8" stroke="#606060" stroke-width=".7"/><rect x="5.500" y="11.500" width="6" height="2" fill="#fff" stroke="#606060" stroke-width=".5"/></svg>
<svg style="left:500px;top:264px" width="16" height="16" viewBox="0 0 16 16"><path d="M2 15l2-5 7-8 4 2.500-8 8z" fill="#fff" stroke="#404040" stroke-width=".7"/><path d="M8.500 4.500L11 2l4 2.500-3 3.500z" fill="#1c40d0"/><path d="M2 15l1-2.500 1.500 1z" fill="#000"/><path d="M4 10l3 2.500" stroke="#c8a060" stroke-width="1"/></svg>
<svg style="left:533px;top:264px" width="16" height="16" viewBox="0 0 16 16"><path d="M4 7c3-3 7-2.500 8 0 1 2-.5 4.500-2.500 5" fill="none" stroke="#2c50c8" stroke-width="1.500"/><path d="M2 4.500v5h5z" fill="#2c50c8"/></svg>
<svg style="left:565px;top:264px" width="16" height="16" viewBox="0 0 16 16"><path d="M1.500 1.500h5v13h-5z" fill="#c8d8f0" stroke="#7088b8" stroke-width=".8"/><path d="M6.500 1.500l3 1.500v10l-3 1.500z" fill="#f0c878" stroke="#a88040" stroke-width=".6"/><path d="M15.500 8h-4M12.500 5l-3 3 3 3z" fill="#1c50d8" stroke="#1c50d8" stroke-width="1.600"/><circle cx="3.500" cy="8" r=".8" fill="#7088b8"/></svg>
<div style="left:263px;top:289px;width:218px;height:343px;background:#fff;border:1px solid #828282;border-right-color:#e0e0e0;border-bottom-color:#fff"></div>
<div class="hdr" style="left:264px;top:290px;width:200px;height:16px;"></div>
<span class="cj" style="left:270px;top:292px;">料号</span>
<div style="left:264px;top:324px;width:200px;height:1px;background:#ececec"></div>
<div style="left:282px;top:308px;width:182px;height:16px;background:#ffff00"></div>
<svg style="left:265px;top:310px" width="16" height="13" viewBox="0 0 16 13"><path d="M.3 7.600L8 3.500l7.700 4.100L8 12.300z" fill="#000"/><path d="M2 8.400l6 3 6-3" fill="none" stroke="#ffee00" stroke-width="1.500" stroke-dasharray="1.500 1.100"/><path d="M.5 5.600L8 1.700l7.500 3.900L8 9.200z" fill="#000090" stroke="#000" stroke-width=".7"/><path d="M4.300 2.800L8 .5l3.700 2.300L8 4.800z" fill="#00e0e8" stroke="#000" stroke-width=".5"/><rect x="7" y="2" width="2" height="1.600" fill="#909090"/></svg>
<span class="ss" style="left:284px;top:310px;">Vayo-0079</span>
<div style="left:264px;top:341px;width:200px;height:1px;background:#ececec"></div>
<svg style="left:265px;top:327px" width="16" height="13" viewBox="0 0 16 13"><path d="M.3 7.600L8 3.500l7.700 4.100L8 12.300z" fill="#000"/><path d="M2 8.400l6 3 6-3" fill="none" stroke="#ffee00" stroke-width="1.500" stroke-dasharray="1.500 1.100"/><path d="M.5 5.600L8 1.700l7.500 3.900L8 9.200z" fill="#000090" stroke="#000" stroke-width=".7"/><path d="M4.300 2.800L8 .5l3.700 2.300L8 4.800z" fill="#00e0e8" stroke="#000" stroke-width=".5"/><rect x="7" y="2" width="2" height="1.600" fill="#909090"/></svg>
<span class="ss" style="left:284px;top:327px;">Vayo-0125</span>
<div style="left:264px;top:358px;width:200px;height:1px;background:#ececec"></div>
<svg style="left:265px;top:344px" width="16" height="13" viewBox="0 0 16 13"><path d="M.3 7.600L8 3.500l7.700 4.100L8 12.300z" fill="#000"/><path d="M2 8.400l6 3 6-3" fill="none" stroke="#ffee00" stroke-width="1.500" stroke-dasharray="1.500 1.100"/><path d="M.5 5.600L8 1.700l7.500 3.900L8 9.200z" fill="#000090" stroke="#000" stroke-width=".7"/><path d="M4.300 2.800L8 .5l3.700 2.300L8 4.800z" fill="#00e0e8" stroke="#000" stroke-width=".5"/><rect x="7" y="2" width="2" height="1.600" fill="#909090"/></svg>
<span class="ss" style="left:284px;top:344px;">Vayo-0120</span>
<div style="left:264px;top:375px;width:200px;height:1px;background:#ececec"></div>
<svg style="left:265px;top:361px" width="16" height="13" viewBox="0 0 16 13"><path d="M.3 7.600L8 3.500l7.700 4.100L8 12.300z" fill="#000"/><path d="M2 8.400l6 3 6-3" fill="none" stroke="#ffee00" stroke-width="1.500" stroke-dasharray="1.500 1.100"/><path d="M.5 5.600L8 1.700l7.500 3.900L8 9.200z" fill="#000090" stroke="#000" stroke-width=".7"/><path d="M4.300 2.800L8 .5l3.700 2.300L8 4.800z" fill="#00e0e8" stroke="#000" stroke-width=".5"/><rect x="7" y="2" width="2" height="1.600" fill="#909090"/></svg>
<span class="ss" style="left:284px;top:361px;">Vayo-0095</span>
<div style="left:264px;top:392px;width:200px;height:1px;background:#ececec"></div>
<svg style="left:265px;top:378px" width="16" height="13" viewBox="0 0 16 13"><path d="M.3 7.600L8 3.500l7.700 4.100L8 12.300z" fill="#000"/><path d="M2 8.400l6 3 6-3" fill="none" stroke="#ffee00" stroke-width="1.500" stroke-dasharray="1.500 1.100"/><path d="M.5 5.600L8 1.700l7.500 3.900L8 9.200z" fill="#000090" stroke="#000" stroke-width=".7"/><path d="M4.300 2.800L8 .5l3.700 2.300L8 4.800z" fill="#00e0e8" stroke="#000" stroke-width=".5"/><rect x="7" y="2" width="2" height="1.600" fill="#909090"/></svg>
<span class="ss" style="left:284px;top:378px;">Vayo-0118</span>
<div style="left:264px;top:409px;width:200px;height:1px;background:#ececec"></div>
<svg style="left:265px;top:395px" width="16" height="13" viewBox="0 0 16 13"><path d="M.3 7.600L8 3.500l7.700 4.100L8 12.300z" fill="#000"/><path d="M2 8.400l6 3 6-3" fill="none" stroke="#ffee00" stroke-width="1.500" stroke-dasharray="1.500 1.100"/><path d="M.5 5.600L8 1.700l7.500 3.900L8 9.200z" fill="#000090" stroke="#000" stroke-width=".7"/><path d="M4.300 2.800L8 .5l3.700 2.300L8 4.800z" fill="#00e0e8" stroke="#000" stroke-width=".5"/><rect x="7" y="2" width="2" height="1.600" fill="#909090"/></svg>
<span class="ss" style="left:284px;top:395px;">Vayo-0110</span>
<div style="left:264px;top:426px;width:200px;height:1px;background:#ececec"></div>
<svg style="left:265px;top:412px" width="16" height="13" viewBox="0 0 16 13"><path d="M.3 7.600L8 3.500l7.700 4.100L8 12.300z" fill="#000"/><path d="M2 8.400l6 3 6-3" fill="none" stroke="#ffee00" stroke-width="1.500" stroke-dasharray="1.500 1.100"/><path d="M.5 5.600L8 1.700l7.500 3.900L8 9.200z" fill="#000090" stroke="#000" stroke-width=".7"/><path d="M4.300 2.800L8 .5l3.700 2.300L8 4.800z" fill="#00e0e8" stroke="#000" stroke-width=".5"/><rect x="7" y="2" width="2" height="1.600" fill="#909090"/></svg>
<span class="ss" style="left:284px;top:412px;">Vayo-0100</span>
<div style="left:264px;top:443px;width:200px;height:1px;background:#ececec"></div>
<svg style="left:265px;top:429px" width="16" height="13" viewBox="0 0 16 13"><path d="M.3 7.600L8 3.500l7.700 4.100L8 12.300z" fill="#000"/><path d="M2 8.400l6 3 6-3" fill="none" stroke="#ffee00" stroke-width="1.500" stroke-dasharray="1.500 1.100"/><path d="M.5 5.600L8 1.700l7.500 3.900L8 9.200z" fill="#000090" stroke="#000" stroke-width=".7"/><path d="M4.300 2.800L8 .5l3.700 2.300L8 4.800z" fill="#00e0e8" stroke="#000" stroke-width=".5"/><rect x="7" y="2" width="2" height="1.600" fill="#909090"/></svg>
<span class="ss" style="left:284px;top:429px;">Vayo-0099</span>
<div style="left:264px;top:460px;width:200px;height:1px;background:#ececec"></div>
<svg style="left:265px;top:446px" width="16" height="13" viewBox="0 0 16 13"><path d="M.3 7.600L8 3.500l7.700 4.100L8 12.300z" fill="#000"/><path d="M2 8.400l6 3 6-3" fill="none" stroke="#ffee00" stroke-width="1.500" stroke-dasharray="1.500 1.100"/><path d="M.5 5.600L8 1.700l7.500 3.900L8 9.200z" fill="#000090" stroke="#000" stroke-width=".7"/><path d="M4.300 2.800L8 .5l3.700 2.300L8 4.800z" fill="#00e0e8" stroke="#000" stroke-width=".5"/><rect x="7" y="2" width="2" height="1.600" fill="#909090"/></svg>
<span class="ss" style="left:284px;top:446px;">Vayo-0112</span>
<div style="left:264px;top:477px;width:200px;height:1px;background:#ececec"></div>
<svg style="left:265px;top:463px" width="16" height="13" viewBox="0 0 16 13"><path d="M.3 7.600L8 3.500l7.700 4.100L8 12.300z" fill="#000"/><path d="M2 8.400l6 3 6-3" fill="none" stroke="#ffee00" stroke-width="1.500" stroke-dasharray="1.500 1.100"/><path d="M.5 5.600L8 1.700l7.500 3.900L8 9.200z" fill="#000090" stroke="#000" stroke-width=".7"/><path d="M4.300 2.800L8 .5l3.700 2.300L8 4.800z" fill="#00e0e8" stroke="#000" stroke-width=".5"/><rect x="7" y="2" width="2" height="1.600" fill="#909090"/></svg>
<span class="ss" style="left:284px;top:463px;">Vayo-0080</span>
<div style="left:264px;top:494px;width:200px;height:1px;background:#ececec"></div>
<svg style="left:265px;top:480px" width="16" height="13" viewBox="0 0 16 13"><path d="M.3 7.600L8 3.500l7.700 4.100L8 12.300z" fill="#000"/><path d="M2 8.400l6 3 6-3" fill="none" stroke="#ffee00" stroke-width="1.500" stroke-dasharray="1.500 1.100"/><path d="M.5 5.600L8 1.700l7.500 3.900L8 9.200z" fill="#000090" stroke="#000" stroke-width=".7"/><path d="M4.300 2.800L8 .5l3.700 2.300L8 4.800z" fill="#00e0e8" stroke="#000" stroke-width=".5"/><rect x="7" y="2" width="2" height="1.600" fill="#909090"/></svg>
<span class="ss" style="left:284px;top:480px;">Vayo-0117</span>
<div style="left:264px;top:511px;width:200px;height:1px;background:#ececec"></div>
<svg style="left:265px;top:497px" width="16" height="13" viewBox="0 0 16 13"><path d="M.3 7.600L8 3.500l7.700 4.100L8 12.300z" fill="#000"/><path d="M2 8.400l6 3 6-3" fill="none" stroke="#ffee00" stroke-width="1.500" stroke-dasharray="1.500 1.100"/><path d="M.5 5.600L8 1.700l7.500 3.900L8 9.200z" fill="#000090" stroke="#000" stroke-width=".7"/><path d="M4.300 2.800L8 .5l3.700 2.300L8 4.800z" fill="#00e0e8" stroke="#000" stroke-width=".5"/><rect x="7" y="2" width="2" height="1.600" fill="#909090"/></svg>
<span class="ss" style="left:284px;top:497px;">Vayo-0114</span>
<div style="left:264px;top:528px;width:200px;height:1px;background:#ececec"></div>
<svg style="left:265px;top:514px" width="16" height="13" viewBox="0 0 16 13"><path d="M.3 7.600L8 3.500l7.700 4.100L8 12.300z" fill="#000"/><path d="M2 8.400l6 3 6-3" fill="none" stroke="#ffee00" stroke-width="1.500" stroke-dasharray="1.500 1.100"/><path d="M.5 5.600L8 1.700l7.500 3.900L8 9.200z" fill="#000090" stroke="#000" stroke-width=".7"/><path d="M4.300 2.800L8 .5l3.700 2.300L8 4.800z" fill="#00e0e8" stroke="#000" stroke-width=".5"/><rect x="7" y="2" width="2" height="1.600" fill="#909090"/></svg>
<span class="ss" style="left:284px;top:514px;">Vayo-0087</span>
<div style="left:264px;top:545px;width:200px;height:1px;background:#ececec"></div>
<svg style="left:265px;top:531px" width="16" height="13" viewBox="0 0 16 13"><path d="M.3 7.600L8 3.500l7.700 4.100L8 12.300z" fill="#000"/><path d="M2 8.400l6 3 6-3" fill="none" stroke="#ffee00" stroke-width="1.500" stroke-dasharray="1.500 1.100"/><path d="M.5 5.600L8 1.700l7.500 3.900L8 9.200z" fill="#000090" stroke="#000" stroke-width=".7"/><path d="M4.300 2.800L8 .5l3.700 2.300L8 4.800z" fill="#00e0e8" stroke="#000" stroke-width=".5"/><rect x="7" y="2" width="2" height="1.600" fill="#909090"/></svg>
<span class="ss" style="left:284px;top:531px;">Vayo-0085</span>
<div style="left:264px;top:562px;width:200px;height:1px;background:#ececec"></div>
<svg style="left:265px;top:548px" width="16" height="13" viewBox="0 0 16 13"><path d="M.3 7.600L8 3.500l7.700 4.100L8 12.300z" fill="#000"/><path d="M2 8.400l6 3 6-3" fill="none" stroke="#ffee00" stroke-width="1.500" stroke-dasharray="1.500 1.100"/><path d="M.5 5.600L8 1.700l7.500 3.900L8 9.200z" fill="#000090" stroke="#000" stroke-width=".7"/><path d="M4.300 2.800L8 .5l3.700 2.300L8 4.800z" fill="#00e0e8" stroke="#000" stroke-width=".5"/><rect x="7" y="2" width="2" height="1.600" fill="#909090"/></svg>
<span class="ss" style="left:284px;top:548px;">Vayo-0137</span>
<div style="left:264px;top:579px;width:200px;height:1px;background:#ececec"></div>
<svg style="left:265px;top:565px" width="16" height="13" viewBox="0 0 16 13"><path d="M.3 7.600L8 3.500l7.700 4.100L8 12.300z" fill="#000"/><path d="M2 8.400l6 3 6-3" fill="none" stroke="#ffee00" stroke-width="1.500" stroke-dasharray="1.500 1.100"/><path d="M.5 5.600L8 1.700l7.500 3.900L8 9.200z" fill="#000090" stroke="#000" stroke-width=".7"/><path d="M4.300 2.800L8 .5l3.700 2.300L8 4.800z" fill="#00e0e8" stroke="#000" stroke-width=".5"/><rect x="7" y="2" width="2" height="1.600" fill="#909090"/></svg>
<span class="ss" style="left:284px;top:565px;">Vayo-0135</span>
<div style="left:264px;top:596px;width:200px;height:1px;background:#ececec"></div>
<svg style="left:265px;top:582px" width="16" height="13" viewBox="0 0 16 13"><path d="M.3 7.600L8 3.500l7.700 4.100L8 12.300z" fill="#000"/><path d="M2 8.400l6 3 6-3" fill="none" stroke="#ffee00" stroke-width="1.500" stroke-dasharray="1.500 1.100"/><path d="M.5 5.600L8 1.700l7.500 3.900L8 9.200z" fill="#000090" stroke="#000" stroke-width=".7"/><path d="M4.300 2.800L8 .5l3.700 2.300L8 4.800z" fill="#00e0e8" stroke="#000" stroke-width=".5"/><rect x="7" y="2" width="2" height="1.600" fill="#909090"/></svg>
<span class="ss" style="left:284px;top:582px;">Vayo-0116</span>
<div style="left:264px;top:613px;width:200px;height:1px;background:#ececec"></div>
<svg style="left:265px;top:599px" width="16" height="13" viewBox="0 0 16 13"><path d="M.3 7.600L8 3.500l7.700 4.100L8 12.300z" fill="#000"/><path d="M2 8.400l6 3 6-3" fill="none" stroke="#ffee00" stroke-width="1.500" stroke-dasharray="1.500 1.100"/><path d="M.5 5.600L8 1.700l7.500 3.900L8 9.200z" fill="#000090" stroke="#000" stroke-width=".7"/><path d="M4.300 2.800L8 .5l3.700 2.300L8 4.800z" fill="#00e0e8" stroke="#000" stroke-width=".5"/><rect x="7" y="2" width="2" height="1.600" fill="#909090"/></svg>
<span class="ss" style="left:284px;top:599px;">Vayo-0109</span>
<div style="left:464px;top:290px;width:16px;height:325px;background:#f0f0f0"></div>
<div style="left:465px;top:307px;width:15px;height:27px;background:#cdcdcd"></div>
<svg style="left:464px;top:290px" width="17" height="325" viewBox="0 0 17 325"><path d="M4.500 10.500l4-4 4 4M4.500 313.500l4 4 4-4" fill="none" stroke="#505050" stroke-width="1.600"/></svg>
<div style="left:264px;top:615px;width:216px;height:16px;background:#f0f0f0"></div>
<div style="left:281px;top:616px;width:154px;height:15px;background:#cdcdcd"></div>
<svg style="left:264px;top:615px" width="200" height="16" viewBox="0 0 200 16"><path d="M10.500 4l-4 4 4 4M188.500 4l4 4-4 4" fill="none" stroke="#505050" stroke-width="1.600"/></svg>
<div class="blue" style="left:263px;top:633px;width:218px;height:17px;"></div>
<span class="cj" style="left:264px;top:635px;">图形</span>
<div style="left:263px;top:652px;width:218px;height:211px;background:#000"></div>
<div style="left:305px;top:729px;width:135px;height:58px;border:2px solid #ff0000"></div>
<div style="left:307px;top:734px;width:51px;height:48px;background:#808080"></div>
<div style="left:387px;top:734px;width:51px;height:48px;background:#c0c0c0"></div>
<div style="left:330px;top:758px;width:4px;height:1px;background:#ff0000"></div>
<div style="left:332px;top:756px;width:1px;height:4px;background:#ff0000"></div>
<div style="left:411px;top:758px;width:4px;height:1px;background:#ff0000"></div>
<div style="left:413px;top:756px;width:1px;height:4px;background:#ff0000"></div>
<div style="left:483px;top:289px;width:218px;height:343px;background:#fff;border-left:1px solid #828282;border-top:1px solid #828282"></div>
<div class="hdr" style="left:484px;top:290px;width:110px;height:16px;"></div>
<span class="cj" style="left:490px;top:292px;">元件</span>
<div class="hdr" style="left:594px;top:290px;width:106px;height:16px;"></div>
<span class="cj" style="left:600px;top:292px;">料号</span>
<div style="left:485px;top:324px;width:215px;height:1px;background:#ececec"></div>
<div style="left:485px;top:341px;width:215px;height:1px;background:#ececec"></div>
<div style="left:485px;top:358px;width:215px;height:1px;background:#ececec"></div>
<div style="left:485px;top:375px;width:215px;height:1px;background:#ececec"></div>
<div style="left:485px;top:392px;width:215px;height:1px;background:#ececec"></div>
<div style="left:485px;top:409px;width:215px;height:1px;background:#ececec"></div>
<div style="left:485px;top:426px;width:215px;height:1px;background:#ececec"></div>
<div style="left:485px;top:443px;width:215px;height:1px;background:#ececec"></div>
<div style="left:485px;top:460px;width:215px;height:1px;background:#ececec"></div>
<div style="left:485px;top:477px;width:215px;height:1px;background:#ececec"></div>
<div style="left:485px;top:494px;width:215px;height:1px;background:#ececec"></div>
<div style="left:485px;top:511px;width:215px;height:1px;background:#ececec"></div>
<div style="left:485px;top:528px;width:215px;height:1px;background:#ececec"></div>
<div style="left:485px;top:545px;width:215px;height:1px;background:#ececec"></div>
<div style="left:485px;top:562px;width:215px;height:1px;background:#ececec"></div>
<div style="left:485px;top:579px;width:215px;height:1px;background:#ececec"></div>
<div style="left:485px;top:596px;width:215px;height:1px;background:#ececec"></div>
<div style="left:485px;top:613px;width:215px;height:1px;background:#ececec"></div>
<div style="left:485px;top:630px;width:215px;height:1px;background:#ececec"></div>
<div style="left:594px;top:306px;width:1px;height:326px;background:#ececec"></div>
<svg style="left:486px;top:308px" width="16" height="16" viewBox="0 0 16 16"><path d="M3.500 3L8 1l7 7-4.500 2.500z" fill="#ccd0f0" stroke="#8088c8" stroke-width=".5"/><path d="M3.500 3l7 7.500-1 3.500-7-7.500z" fill="#7880c8"/><path d="M10.500 10.500L15 8l-.5 2.500L9.500 14z" fill="#4850a0"/><path d="M6 5l3-1.500M8 7l3-1.500" stroke="#fff" stroke-width=".8"/><path d="M2.800 7.200l-2 1.300M4.800 9.400l-2 1.300M6.800 11.600l-2 1.300M8.800 13.600l-1.600 1.100" stroke="#f09818" stroke-width="1.500"/><path d="M5 2.300L4 1M7 1.400L6 .2M14.800 8.500l1 .8" stroke="#303060" stroke-width=".9"/></svg>
<span class="ss" style="left:504px;top:310px;">RA12</span>
<span class="ss" style="left:600px;top:310px;">Vayo-0079</span>
<div style="left:502px;top:325px;width:92px;height:16px;background:#ffff00"></div>
<div style="left:595px;top:325px;width:105px;height:16px;background:#ffff00"></div>
<svg style="left:486px;top:325px" width="16" height="16" viewBox="0 0 16 16"><path d="M3.500 3L8 1l7 7-4.500 2.500z" fill="#ccd0f0" stroke="#8088c8" stroke-width=".5"/><path d="M3.500 3l7 7.500-1 3.500-7-7.500z" fill="#7880c8"/><path d="M10.500 10.500L15 8l-.5 2.500L9.500 14z" fill="#4850a0"/><path d="M6 5l3-1.500M8 7l3-1.500" stroke="#fff" stroke-width=".8"/><path d="M2.800 7.200l-2 1.300M4.800 9.400l-2 1.300M6.800 11.600l-2 1.300M8.800 13.600l-1.600 1.100" stroke="#f09818" stroke-width="1.500"/><path d="M5 2.300L4 1M7 1.400L6 .2M14.800 8.500l1 .8" stroke="#303060" stroke-width=".9"/></svg>
<span class="ss" style="left:504px;top:327px;">RA11</span>
<span class="ss" style="left:600px;top:327px;">Vayo-0079</span>
<svg style="left:486px;top:342px" width="16" height="16" viewBox="0 0 16 16"><path d="M3.500 3L8 1l7 7-4.500 2.500z" fill="#ccd0f0" stroke="#8088c8" stroke-width=".5"/><path d="M3.500 3l7 7.500-1 3.500-7-7.500z" fill="#7880c8"/><path d="M10.500 10.500L15 8l-.5 2.500L9.500 14z" fill="#4850a0"/><path d="M6 5l3-1.500M8 7l3-1.500" stroke="#fff" stroke-width=".8"/><path d="M2.800 7.200l-2 1.300M4.800 9.400l-2 1.300M6.800 11.600l-2 1.300M8.800 13.600l-1.600 1.100" stroke="#f09818" stroke-width="1.500"/><path d="M5 2.300L4 1M7 1.400L6 .2M14.800 8.500l1 .8" stroke="#303060" stroke-width=".9"/></svg>
<span class="ss" style="left:504px;top:344px;">RA14</span>
<span class="ss" style="left:600px;top:344px;">Vayo-0079</span>
<svg style="left:486px;top:359px" width="16" height="16" viewBox="0 0 16 16"><path d="M3.500 3L8 1l7 7-4.500 2.500z" fill="#ccd0f0" stroke="#8088c8" stroke-width=".5"/><path d="M3.500 3l7 7.500-1 3.500-7-7.500z" fill="#7880c8"/><path d="M10.500 10.500L15 8l-.5 2.500L9.500 14z" fill="#4850a0"/><path d="M6 5l3-1.500M8 7l3-1.500" stroke="#fff" stroke-width=".8"/><path d="M2.800 7.200l-2 1.300M4.800 9.400l-2 1.300M6.800 11.600l-2 1.300M8.800 13.600l-1.600 1.100" stroke="#f09818" stroke-width="1.500"/><path d="M5 2.300L4 1M7 1.400L6 .2M14.800 8.500l1 .8" stroke="#303060" stroke-width=".9"/></svg>
<span class="ss" style="left:504px;top:361px;">RA13</span>
<span class="ss" style="left:600px;top:361px;">Vayo-0079</span>
<div style="left:483px;top:633px;width:218px;height:230px;background:#fff;border-left:1px solid #828282;border-top:1px solid #828282"></div>
<div class="hdr" style="left:484px;top:634px;width:110px;height:16px;"></div>
<span class="cj" style="left:490px;top:636px;">外形</span>
<div class="hdr" style="left:594px;top:634px;width:106px;height:16px;"></div>
<span class="cj" style="left:600px;top:636px;">料号</span>
<div style="left:485px;top:668px;width:215px;height:1px;background:#ececec"></div>
<div style="left:485px;top:685px;width:215px;height:1px;background:#ececec"></div>
<div style="left:485px;top:702px;width:215px;height:1px;background:#ececec"></div>
<div style="left:485px;top:719px;width:215px;height:1px;background:#ececec"></div>
<div style="left:485px;top:736px;width:215px;height:1px;background:#ececec"></div>
<div style="left:485px;top:753px;width:215px;height:1px;background:#ececec"></div>
<div style="left:485px;top:770px;width:215px;height:1px;background:#ececec"></div>
<div style="left:485px;top:787px;width:215px;height:1px;background:#ececec"></div>
<div style="left:485px;top:804px;width:215px;height:1px;background:#ececec"></div>
<div style="left:485px;top:821px;width:215px;height:1px;background:#ececec"></div>
<div style="left:485px;top:838px;width:215px;height:1px;background:#ececec"></div>
<div style="left:485px;top:855px;width:215px;height:1px;background:#ececec"></div>
<div style="left:485px;top:872px;width:215px;height:1px;background:#ececec"></div>
<div style="left:594px;top:650px;width:1px;height:213px;background:#ececec"></div>
<div style="left:502px;top:652px;width:92px;height:16px;background:#ffff00"></div>
<div style="left:595px;top:652px;width:105px;height:16px;background:#ffff00"></div>
<svg style="left:486px;top:654px" width="16" height="12" viewBox="0 0 16 12"><path d="M.5 6L8 2l7.500 4L8 10z" fill="#e8e8e8" stroke="#000" stroke-width=".8"/><path d="M3 6l5-2.500L13 6 8 8.500z" fill="#404040"/><circle cx="8" cy="6.500" r="1.500" fill="#20d020"/></svg>
<span class="ss" style="left:504px;top:654px;">RESC1005_IS...</span>
<span class="ss" style="left:600px;top:654px;">Vayo-0079</span>
<div class="blue" style="left:703px;top:289px;width:433px;height:17px;"></div>
<span class="cj" style="left:704px;top:291px;">参数</span>
<div style="left:703px;top:308px;width:433px;height:80px;background:#f0f0f0;border:1px solid #d0d0d0;border-bottom-color:#fff;border-right-color:#fff"></div>
<span class="cj" style="left:710px;top:319px;">机器:</span>
<span class="cj" style="left:710px;top:345px;">主键:</span>
<span class="cj" style="left:710px;top:370px;">值:</span>
<div style="left:768px;top:313px;width:136px;height:19px;background:#fff;border:1px solid;border-color:#a0a0a0 #fff #fff #a0a0a0"></div>
<div style="left:769px;top:314px;width:134px;height:17px;border:1px solid;border-color:#696969 #e3e3e3 #e3e3e3 #696969"></div>
<div style="left:886px;top:315px;width:16px;height:15px;background:#f0f0f0;border:1px solid;border-color:#fff #696969 #696969 #fff;box-shadow:inset -1px -1px 0 #a0a0a0"></div>
<svg style="left:886px;top:315px" width="16" height="15" viewBox="0 0 16 15"><path d="M4.500 6h7l-3.500 4z" fill="#000"/></svg>
<div style="left:768px;top:339px;width:136px;height:19px;background:#fff;border:1px solid;border-color:#a0a0a0 #fff #fff #a0a0a0"></div>
<div style="left:769px;top:340px;width:134px;height:17px;border:1px solid;border-color:#696969 #e3e3e3 #e3e3e3 #696969"></div>
<div style="left:886px;top:341px;width:16px;height:15px;background:#f0f0f0;border:1px solid;border-color:#fff #696969 #696969 #fff;box-shadow:inset -1px -1px 0 #a0a0a0"></div>
<svg style="left:886px;top:341px" width="16" height="15" viewBox="0 0 16 15"><path d="M4.500 6h7l-3.500 4z" fill="#000"/></svg>
<div style="left:771px;top:343px;width:1px;height:12px;background:#000"></div>
<div style="left:703px;top:389px;width:433px;height:25px;background:#f0f0f0;border:1px solid;border-color:#d8d8d8 #fff #c8c8c8 #d8d8d8"></div>
<svg style="left:708px;top:394px" width="16" height="16" viewBox="0 0 16 16"><rect x=".5" y=".5" width="15" height="15" rx="1" fill="#1c48d0"/><rect x="3" y="1.500" width="9" height="5.500" fill="#fff"/><path d="M4.500 3.300h6M4.500 5.200h6" stroke="#1c48d0" stroke-width=".9"/><rect x="3.500" y="9.500" width="8" height="6" fill="#fff"/><rect x="6" y="10.500" width="3" height="5" fill="#1c48d0"/></svg>
<svg style="left:731px;top:395px" width="16" height="14" viewBox="0 0 16 14"><path d="M1 1h4l3 3.800L11 1h4L10 7l5 6h-4L8 9.200 5 13H1l5-6z" fill="#1c40c8"/></svg>
<div style="left:703px;top:416px;width:433px;height:215px;background:#fff;border-left:1px solid #828282;border-top:1px solid #828282"></div>
<div class="hdr" style="left:704px;top:417px;width:101px;height:16px;"></div>
<span class="cj" style="left:710px;top:419px;">机器</span>
<div class="hdr" style="left:805px;top:417px;width:100px;height:16px;"></div>
<span class="cj" style="left:811px;top:419px;">主键</span>
<div class="hdr" style="left:905px;top:417px;width:230px;height:16px;"></div>
<span class="cj" style="left:911px;top:419px;">值</span>
<div style="left:705px;top:446px;width:430px;height:1px;background:#ececec"></div>
<div style="left:705px;top:459px;width:430px;height:1px;background:#ececec"></div>
<div style="left:705px;top:472px;width:430px;height:1px;background:#ececec"></div>
<div style="left:705px;top:485px;width:430px;height:1px;background:#ececec"></div>
<div style="left:705px;top:498px;width:430px;height:1px;background:#ececec"></div>
<div style="left:705px;top:511px;width:430px;height:1px;background:#ececec"></div>
<div style="left:705px;top:524px;width:430px;height:1px;background:#ececec"></div>
<div style="left:705px;top:537px;width:430px;height:1px;background:#ececec"></div>
<div style="left:705px;top:550px;width:430px;height:1px;background:#ececec"></div>
<div style="left:705px;top:563px;width:430px;height:1px;background:#ececec"></div>
<div style="left:705px;top:576px;width:430px;height:1px;background:#ececec"></div>
<div style="left:705px;top:589px;width:430px;height:1px;background:#ececec"></div>
<div style="left:705px;top:602px;width:430px;height:1px;background:#ececec"></div>
<div style="left:705px;top:615px;width:430px;height:1px;background:#ececec"></div>
<div style="left:705px;top:628px;width:430px;height:1px;background:#ececec"></div>
<div style="left:705px;top:641px;width:430px;height:1px;background:#ececec"></div>
<div style="left:805px;top:433px;width:1px;height:198px;background:#ececec"></div>
<div style="left:905px;top:433px;width:1px;height:198px;background:#ececec"></div>
<span class="ss" style="left:810px;top:436px;line-height:13px;height:13px">PN</span>
<span class="ss" style="left:910px;top:436px;line-height:13px;height:13px">Vayo-0079</span>
<span class="ss" style="left:810px;top:449px;line-height:13px;height:13px">OLD</span>
<span class="ss" style="left:910px;top:449px;line-height:13px;height:13px">Vayo-0079</span>
<span class="ss" style="left:810px;top:462px;line-height:13px;height:13px">DESC</span>
<span class="ss" style="left:910px;top:462px;line-height:13px;height:13px">RES,THK,0402,68K,1%</span>
<span class="ss" style="left:810px;top:475px;line-height:13px;height:13px">QTY</span>
<span class="ss" style="left:910px;top:475px;line-height:13px;height:13px">4</span>
<div class="blue" style="left:703px;top:633px;width:433px;height:17px;"></div>
<span class="cj" style="left:704px;top:635px;">报告</span>
<div style="left:703px;top:651px;width:433px;height:212px;background:#fff;border-left:1px solid #828282;border-top:1px solid #828282"></div>
<div class="hdr" style="left:704px;top:652px;width:160px;height:16px;"></div>
<span class="cj" style="left:710px;top:654px;">料号</span>
<div class="hdr" style="left:864px;top:652px;width:271px;height:16px;"></div>
<span class="cj" style="left:870px;top:654px;">信息</span>
<div style="left:705px;top:686px;width:430px;height:1px;background:#ececec"></div>
<div style="left:705px;top:703px;width:430px;height:1px;background:#ececec"></div>
<div style="left:705px;top:720px;width:430px;height:1px;background:#ececec"></div>
<div style="left:705px;top:737px;width:430px;height:1px;background:#ececec"></div>
<div style="left:705px;top:754px;width:430px;height:1px;background:#ececec"></div>
<div style="left:705px;top:771px;width:430px;height:1px;background:#ececec"></div>
<div style="left:705px;top:788px;width:430px;height:1px;background:#ececec"></div>
<div style="left:705px;top:805px;width:430px;height:1px;background:#ececec"></div>
<div style="left:705px;top:822px;width:430px;height:1px;background:#ececec"></div>
<div style="left:705px;top:839px;width:430px;height:1px;background:#ececec"></div>
<div style="left:705px;top:856px;width:430px;height:1px;background:#ececec"></div>
<div style="left:705px;top:873px;width:430px;height:1px;background:#ececec"></div>
<div style="left:864px;top:668px;width:1px;height:195px;background:#ececec"></div>
<div style="left:768px;top:359px;width:137px;height:98px;background:#fff;border:1px solid #404040"></div>
<span class="ss" style="left:771px;top:373px;line-height:12px;height:12px">COMP_HEIGHT</span>
<span class="ss" style="left:771px;top:385px;line-height:12px;height:12px">DESC</span>
<span class="ss" style="left:771px;top:397px;line-height:12px;height:12px">ECAP</span>
<span class="ss" style="left:771px;top:409px;line-height:12px;height:12px">FA</span>
<span class="ss" style="left:771px;top:421px;line-height:12px;height:12px">JUMPER_PART</span>
<span class="ss" style="left:771px;top:433px;line-height:12px;height:12px">LABEL</span>
<span class="ss" style="left:771px;top:445px;line-height:12px;height:12px">MACHININGSTYLE</span>
<div style="left:888px;top:360px;width:16px;height:96px;background:#f0f0f0"></div>
<div style="left:889px;top:377px;width:15px;height:18px;background:#a6a6a6"></div>
<svg style="left:888px;top:360px" width="16" height="96" viewBox="0 0 16 96"><path d="M4.500 10l3.500-3.500L11.500 10M4.500 85.500l3.500 3.500 3.500-3.500" fill="none" stroke="#606060" stroke-width="1.500"/></svg>
</body></html>
